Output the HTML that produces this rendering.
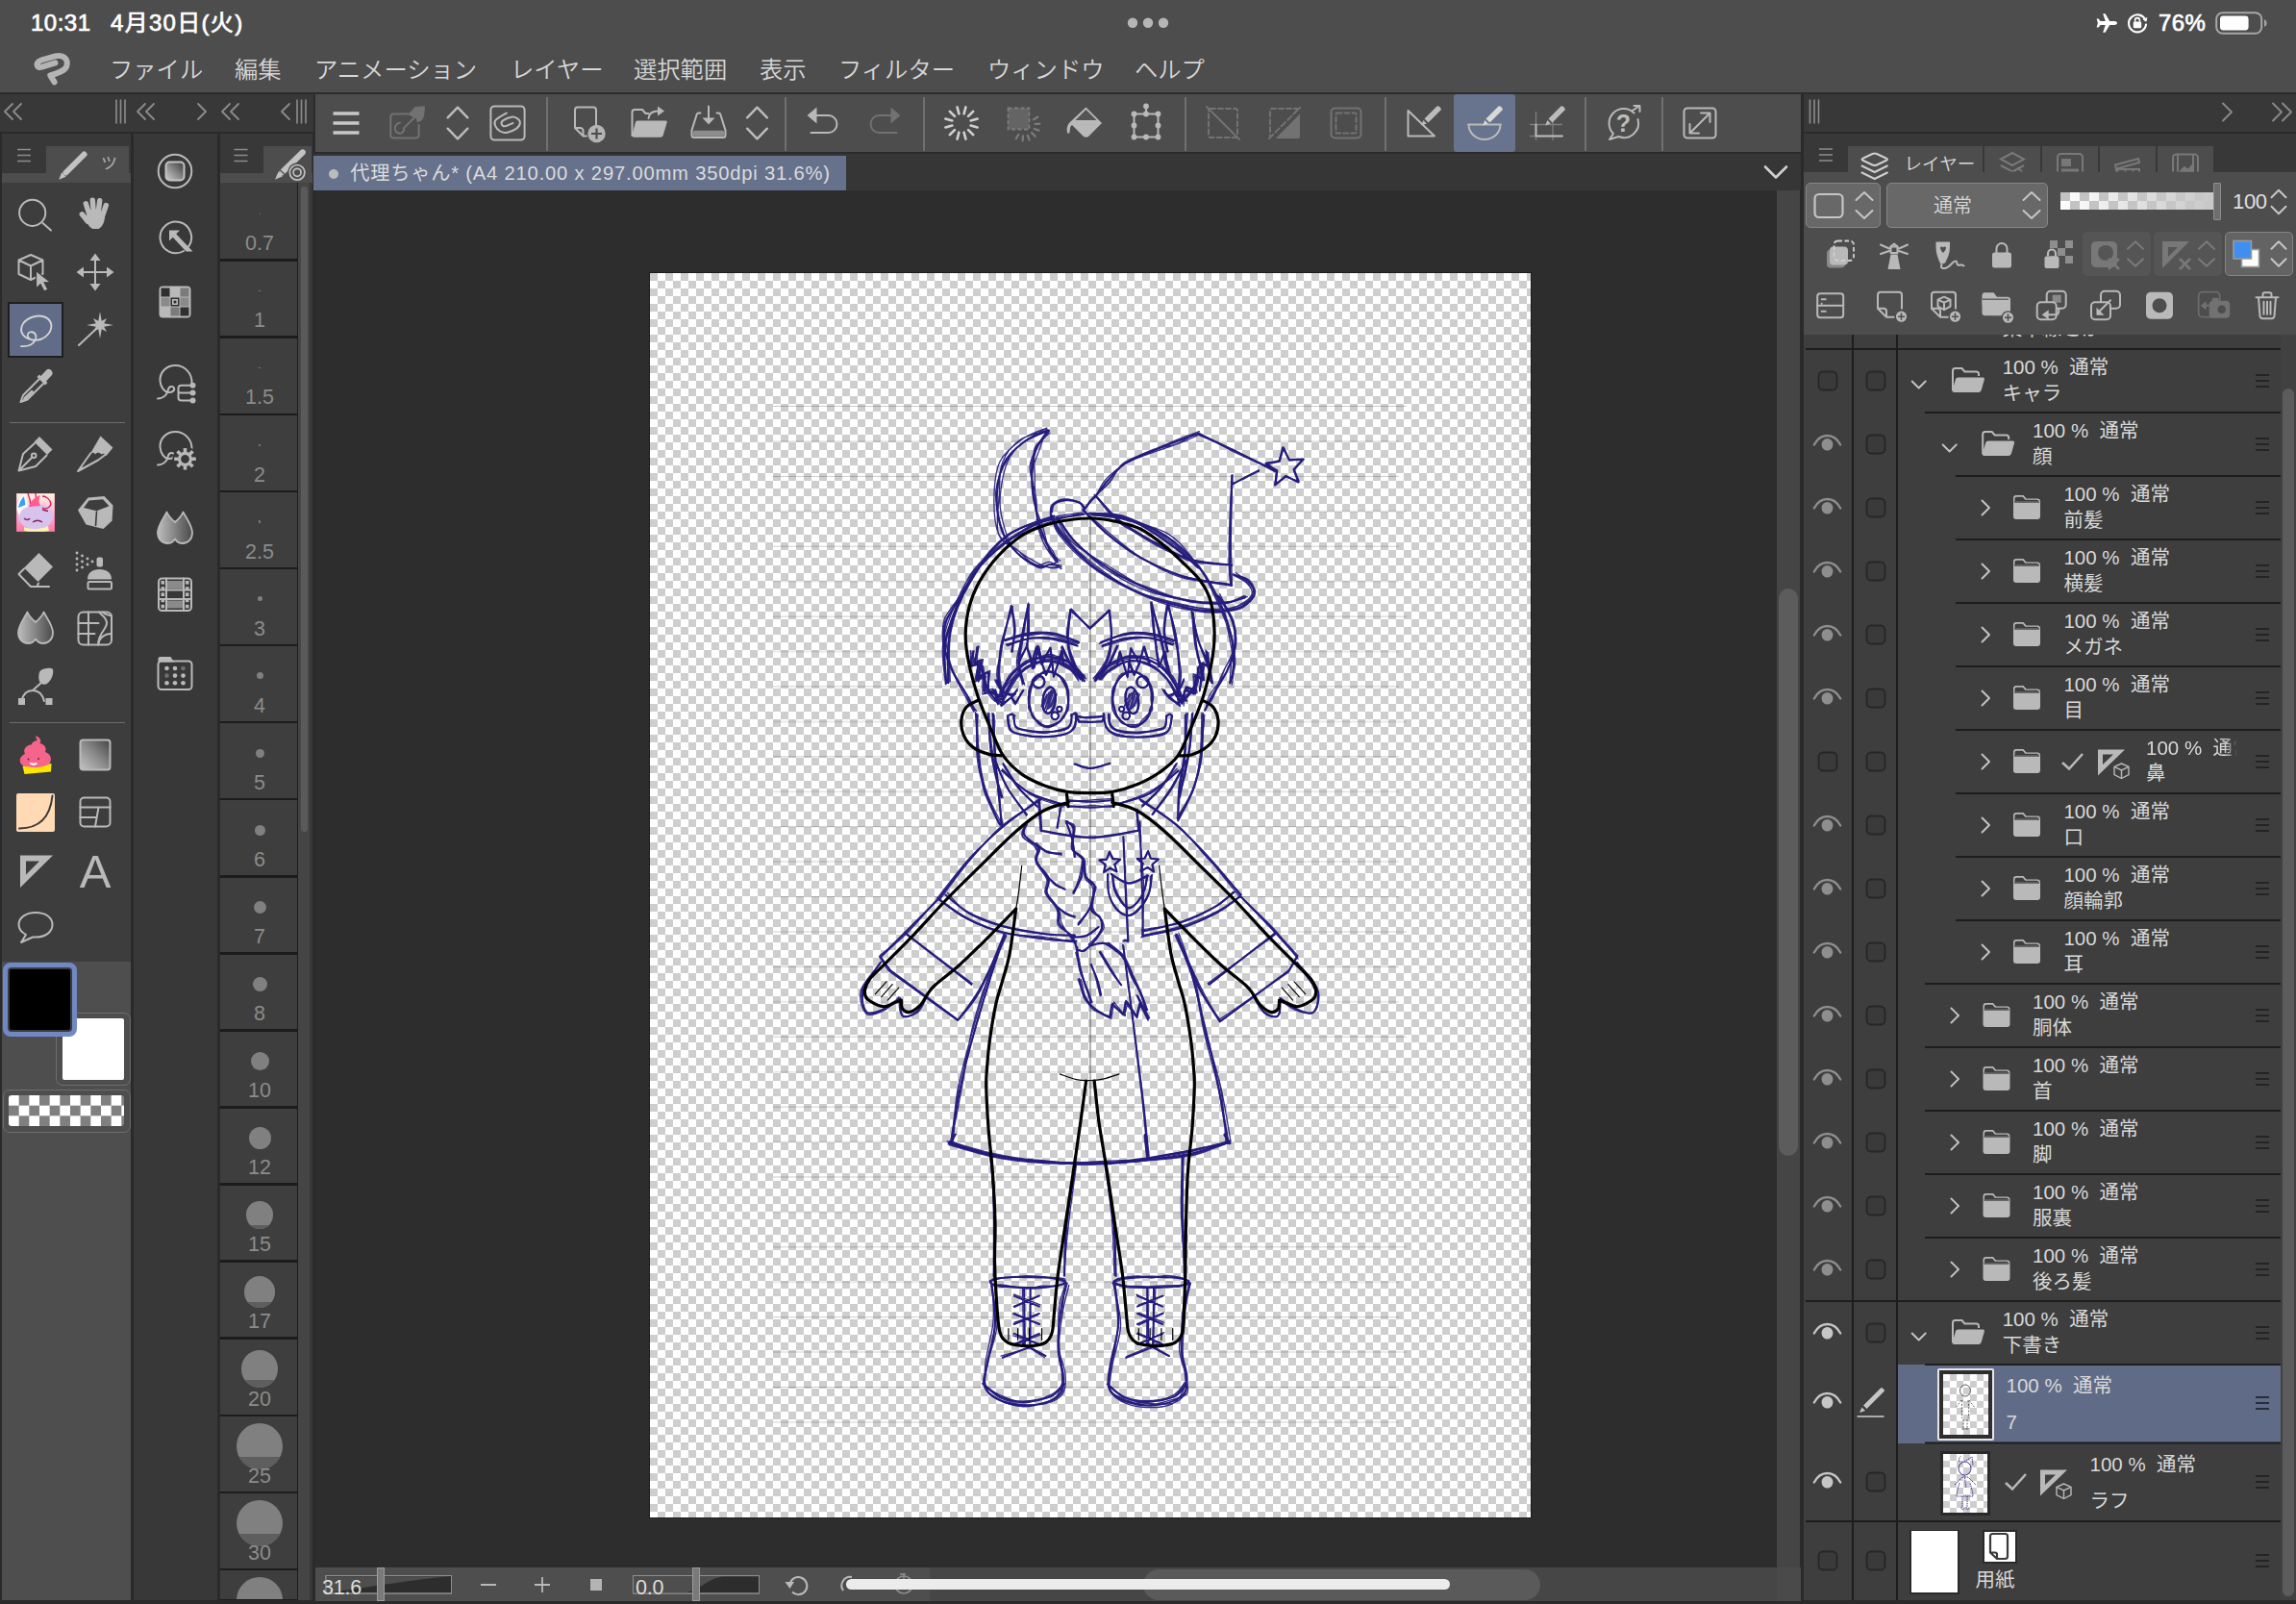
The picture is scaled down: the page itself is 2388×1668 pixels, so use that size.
<!DOCTYPE html>
<html lang="ja"><head><meta charset="utf-8"><title>CLIP STUDIO PAINT</title>
<style>
html,body{margin:0;padding:0;}
body{width:2388px;height:1668px;overflow:hidden;background:#383838;position:relative;
 font-family:"Liberation Sans","Noto Sans CJK JP",sans-serif;color:#d2d2d2;}
.a{position:absolute;}
.t{position:absolute;white-space:nowrap;line-height:1;}
svg{position:absolute;overflow:visible;}
.ic{fill:none;stroke:#b9b9b9;stroke-width:2;stroke-linecap:round;stroke-linejoin:round;}
.f{fill:#b9b9b9;stroke:none;}
.dim .ic, .ic.dim{stroke:#727272;}
.dim .f, .f.dim{fill:#727272;}

</style></head><body>
<div class="a" style="left:0px;top:0px;width:2388px;height:96px;background:#4d4d4d;"></div>
<div class="a" style="left:0px;top:96px;width:2388px;height:2px;background:#2c2c2c;"></div>
<div class="t" style="top:11.50px;font-size:24px;color:#fff;left:32px;font-weight:400;letter-spacing:0.5px;-webkit-text-stroke:0.7px #fff;">10:31</div>
<div class="t" style="top:11.50px;font-size:24px;color:#fff;left:115px;font-weight:400;letter-spacing:1.3px;-webkit-text-stroke:0.7px #fff;">4月30日(火)</div>
<svg style="left:1168px;top:14px;" width="60" height="20" viewBox="0 0 60 20"><circle cx="10" cy="9.7" r="5.2" fill="#b6b6b6"/><circle cx="26" cy="9.7" r="5.2" fill="#b6b6b6"/><circle cx="42" cy="9.7" r="5.2" fill="#b6b6b6"/></svg>
<svg style="left:2179px;top:12px;" width="24" height="24" viewBox="0 0 24 24"><path fill="#fff" d="M23 12c0-1.1-1.3-1.9-2.6-1.9h-5.2L10.6 2.2H8.2l2.6 7.9H5.6L3.6 7.6H1.6l1.3 4.4-1.3 4.4h2l2-2.5h5.2l-2.6 7.9h2.4l4.6-7.9h5.2c1.3 0 2.6-.8 2.6-1.9z"/></svg>
<svg style="left:2211px;top:12px;" width="24" height="24" viewBox="0 0 24 24"><path d="M20.5 9.2A9 9 0 1 0 21 13.5" fill="none" stroke="#fff" stroke-width="2.1" stroke-linecap="round"/><path d="M17.6 8.3l3.9 2.3.9-4.6z" fill="#fff"/><rect x="7.8" y="10.6" width="8.4" height="6.6" rx="1.2" fill="#fff"/><path d="M9.6 10.8V9a2.4 2.4 0 0 1 4.8 0v1.8" fill="none" stroke="#fff" stroke-width="1.6"/></svg>
<div class="t" style="top:11.50px;font-size:24px;color:#fff;left:2245px;font-weight:400;letter-spacing:0.4px;-webkit-text-stroke:0.7px #fff;">76%</div>
<svg style="left:2304px;top:12px;" width="58" height="24" viewBox="0 0 58 24"><rect x="1.2" y="1.2" width="47" height="21.6" rx="6.5" fill="none" stroke="#a6a6a6" stroke-width="2"/><rect x="5" y="4.6" width="29.6" height="14.8" rx="3.4" fill="#fff"/><path d="M51 8.2c1.6.5 2.6 2 2.6 3.8s-1 3.3-2.6 3.8z" fill="#a6a6a6"/></svg>
<svg style="left:34px;top:52px;" width="44" height="40" viewBox="0 0 44 40"><path d="M23.500 13.300L9.600 17.700C3.500 19.400 2.600 13.300 8.700 10.700L23.500 6.400C32.200 4.600 37.400 9.800 35.300 16.800 33.900 21.200 27 23.800 18.300 26.400L22.600 33.400" fill="none" stroke="#b4b4b4" stroke-width="6" stroke-linecap="round" stroke-linejoin="round"/></svg>
<div class="t" style="top:60.85px;font-size:24.3px;color:#d6d6d6;left:114px;font-weight:350;">ファイル</div>
<div class="t" style="top:60.85px;font-size:24.3px;color:#d6d6d6;left:244px;font-weight:350;">編集</div>
<div class="t" style="top:60.85px;font-size:24.3px;color:#d6d6d6;left:327px;font-weight:350;">アニメーション</div>
<div class="t" style="top:60.85px;font-size:24.3px;color:#d6d6d6;left:531px;font-weight:350;">レイヤー</div>
<div class="t" style="top:60.85px;font-size:24.3px;color:#d6d6d6;left:659px;font-weight:350;">選択範囲</div>
<div class="t" style="top:60.85px;font-size:24.3px;color:#d6d6d6;left:790px;font-weight:350;">表示</div>
<div class="t" style="top:60.85px;font-size:24.3px;color:#d6d6d6;left:872px;font-weight:350;">フィルター</div>
<div class="t" style="top:60.85px;font-size:24.3px;color:#d6d6d6;left:1027px;font-weight:350;">ウィンドウ</div>
<div class="t" style="top:60.85px;font-size:24.3px;color:#d6d6d6;left:1180px;font-weight:350;">ヘルプ</div>
<div class="a" style="left:326px;top:98px;width:1549px;height:62px;background:#2c2c2c;"></div>
<div class="a" style="left:328px;top:98px;width:1545px;height:60px;background:#4d4d4d;"></div>
<div class="a" style="left:1512px;top:98px;width:64px;height:60px;background:#68738d;border-radius:3px;"></div>
<div class="a" style="left:568px;top:101px;width:2px;height:56px;background:#707070;"></div>
<div class="a" style="left:816px;top:101px;width:2px;height:56px;background:#707070;"></div>
<div class="a" style="left:960px;top:101px;width:2px;height:56px;background:#707070;"></div>
<div class="a" style="left:1232px;top:101px;width:2px;height:56px;background:#707070;"></div>
<div class="a" style="left:1440px;top:101px;width:2px;height:56px;background:#707070;"></div>
<div class="a" style="left:1648px;top:101px;width:2px;height:56px;background:#707070;"></div>
<div class="a" style="left:1728px;top:101px;width:2px;height:56px;background:#707070;"></div>
<svg style="left:0px;top:0px;" width="2388" height="200" viewBox="0 0 2388 200"><g transform="translate(340,108)"><path d="M6.500 10h27M6.500 20h27M6.500 30h27" stroke="#c8c8c8" stroke-width="3.600" fill="none"/></g><g class="dim" transform="translate(401,108)"><path d="M27 10.400H8.300a3 3 0 0 0-3 3v19.200a3 3 0 0 0 3 3h23.300a3 3 0 0 0 3-3V22" class="ic" stroke-width="2.200"/><path d="M30.500 3.300L40.100 2.200c.8 0 1 1 .8 2.600l-.8 7.400c-.5 2.500-1.800 4.600-3.700 5.900-1.200.8-2.600.9-3.700.8l-1.100-4.500-2.500-.2-4.500-2.800c-.3-1 .2-2 1.200-3z" class="f"/><path d="M30.500 13.700L18.600 25.600" class="ic" stroke-width="3.800" stroke-linecap="butt"/><path d="M14.900 19.800c-3.500.3-5.600 3.600-5 6.900.7 3.400 4.700 5.100 7.500 3.200 1.300-.9 1.800-1.900 1.900-3.200" class="ic" stroke-width="2.200"/></g><g transform="translate(456,108)"><path d="M9.65 14.35 L20 3.6500000000000004 L30.35 14.35" fill="none" stroke="#bcbcbc" stroke-width="2.4" stroke-linecap="round" stroke-linejoin="round"/><path d="M9.65 25.65 L20 36.35 L30.35 25.65" fill="none" stroke="#bcbcbc" stroke-width="2.4" stroke-linecap="round" stroke-linejoin="round"/></g><g transform="translate(508,108)"><rect x="2.400" y="2.400" width="35.200" height="35.200" rx="4" class="ic" stroke-width="2.300"/><path d="M18.8 9.6C16.9 10.8 9.7 14.5 7.7 16.7C5.7 18.9 6.2 20.6 7.0 22.6C7.8 24.6 10.2 27.3 12.2 28.5C14.2 29.7 16.0 30.5 18.8 30.0C21.6 29.5 26.9 27.3 29.2 25.6C31.5 23.9 32.8 21.3 32.9 19.6C33.0 17.9 31.4 16.2 29.9 15.2C28.4 14.2 26.5 13.3 24.0 13.7C21.5 14.1 16.8 16.2 15.1 17.4C13.4 18.6 13.3 20.1 13.7 21.1C14.1 22.1 15.4 23.5 17.4 23.3C19.4 23.1 24.1 20.6 25.5 20.0" class="ic" stroke-width="3.300"/></g><g transform="translate(591,108)"><path d="M7 6.500a3 3 0 0 1 3-3h16a3 3 0 0 1 3 3V22M7 6.500V25l8.500 8.500H19M7 25h5.500a3 3 0 0 1 3 3v5.500" class="ic" stroke-width="2.200"/><circle cx="29.500" cy="31" r="9.200" fill="#b4b4b4"/><path d="M29.500 25.500v11M24 31h11" stroke="#4d4d4d" stroke-width="2.200" fill="none"/></g><g transform="translate(654,108)"><path d="M3.500 33V8.500a2.500 2.500 0 0 1 2.500-2.500h8l3.500 4h3" class="ic" stroke-width="2.200"/><path d="M9 17.500h29.500c1 0 1.500.8 1.200 1.700l-4 13.500c-.4 1.200-1.400 2-2.700 2H5.500c-1.500 0-2.400-1.200-2-2.600l3.300-12.300c.4-1.400 1-2.300 2.200-2.300z" class="f"/><path d="M20.500 15c.5-5 4-7.500 10-7.500" class="ic" stroke-width="2.400"/><path d="M30 2.500l7 5-7 5z" class="f"/></g><g transform="translate(717,108)"><path d="M11.500 9.500H9.800c-1 0-1.800.6-2.100 1.500L2.500 27.500v5a2.500 2.500 0 0 0 2.500 2.500h30a2.500 2.500 0 0 0 2.500-2.500v-5L32.300 11c-.3-.9-1.100-1.500-2.100-1.500h-1.700" class="ic" stroke-width="2.200"/><rect x="4" y="27.800" width="32" height="6" rx="1.500" fill="#8d8d8d"/><path d="M20 2.500v15" class="ic" stroke-width="2.400"/><path d="M13.500 14.500h13L20 21.500z" class="f"/></g><g transform="translate(767.5,108)"><path d="M9.65 14.35 L20 3.6500000000000004 L30.35 14.35" fill="none" stroke="#bcbcbc" stroke-width="2.4" stroke-linecap="round" stroke-linejoin="round"/><path d="M9.65 25.65 L20 36.35 L30.35 25.65" fill="none" stroke="#bcbcbc" stroke-width="2.4" stroke-linecap="round" stroke-linejoin="round"/></g><g transform="translate(836,108)"><path d="M10 12h15.500a9 9 0 0 1 0 18H7.500" class="ic" stroke-width="2.400"/><path d="M13.500 3.500v17L3.500 12z" class="f"/></g><g class="dim" transform="translate(900,108)"><path d="M30 12H14.500a9 9 0 0 0 0 18H32.500" class="ic" stroke-width="2.400"/><path d="M26.500 3.500v17l10-8.500z" class="f"/></g><g transform="translate(980,108)"><path d="M29.66 22.59L36.61 24.45M27.07 27.07L32.16 32.16M22.59 29.66L24.45 36.61M17.41 29.66L15.55 36.61M12.93 27.07L7.84 32.16M10.34 22.59L3.39 24.45M10.34 17.41L3.39 15.55M12.93 12.93L7.84 7.84M17.41 10.34L15.55 3.39M22.59 10.34L24.45 3.39M27.07 12.93L32.16 7.84M29.66 17.41L36.61 15.55" stroke="#d0d0d0" stroke-width="2.600" stroke-linecap="round" fill="none"/></g><g class="dim" transform="translate(1044,108)"><rect x="4.500" y="4.500" width="22" height="22" fill="#646464" stroke="#7c7c7c" stroke-width="1.800" stroke-dasharray="4 2.500"/><path d="M30.96 16.25L35.29 13.75M32.46 21.00L37.44 20.56M31.81 25.93L36.50 27.64M29.13 30.13L32.67 33.67M24.93 32.81L26.64 37.50M20.00 33.46L19.56 38.44M15.25 31.96L12.75 36.29" stroke="#7c7c7c" stroke-width="2.200" stroke-linecap="round" fill="none"/></g><g transform="translate(1108,108)"><path d="M20 3.500L36.500 20 23 33.500c-1.800 1.800-4.200 1.800-6 0L5.500 22C3 23.500 3.500 27 3 29.500c-.4 1.700-2 1.800-2.500 0C-.5 25 1 20.500 5 17.500z" class="f" transform="translate(1.500,0)"/><path d="M10.500 17L21.500 6 32.500 17z" fill="#555"/></g><g transform="translate(1172,108)"><path d="M7.500 10.500h25v24h-25zM20 10.500V2.500" class="ic" stroke-width="2.200"/><circle cx="7.5" cy="10.5" r="2.900" class="f"/><circle cx="20" cy="10.5" r="2.900" class="f"/><circle cx="32.5" cy="10.5" r="2.900" class="f"/><circle cx="7.5" cy="22.5" r="2.900" class="f"/><circle cx="32.5" cy="22.5" r="2.900" class="f"/><circle cx="7.5" cy="34.5" r="2.900" class="f"/><circle cx="20" cy="34.5" r="2.900" class="f"/><circle cx="32.5" cy="34.5" r="2.900" class="f"/><circle cx="20" cy="2.5" r="2.900" class="f"/></g><g class="dim" transform="translate(1252,108)"><rect x="5" y="5" width="30" height="30" rx="2" class="ic" stroke-width="2" stroke-dasharray="5 3"/><path d="M3 3l34 34" class="ic" stroke-width="2"/></g><g class="dim" transform="translate(1316,108)"><path d="M35 5H7a2 2 0 0 0-2 2v28" class="ic" stroke-width="2" stroke-dasharray="5 3"/><path d="M4 36L36 4" class="ic" stroke-width="2" stroke-dasharray="6 3"/><path d="M36 10.500v23a2.500 2.500 0 0 1-2.500 2.500h-23z" class="f"/></g><g class="dim" transform="translate(1380,108)"><rect x="4.500" y="4.500" width="31" height="31" rx="4" class="ic" stroke-width="2"/><rect x="9.500" y="9.500" width="21" height="21" rx="1" class="ic" stroke-width="2" stroke-dasharray="5 3"/></g><g transform="translate(1460,108)"><path d="M4.500 7v26.500h26M4.500 7l27.500 26.500" class="ic" stroke-width="2" stroke-linecap="butt"/><g transform="translate(0,0)"><path d="M21.500 15.500l13-13c1.500-1.500 5.500 2.500 4 4l-13 13z" fill="#bcbcbc"/><path d="M20.300 17l3.500 3.500-5.500 2z" fill="#bcbcbc"/></g></g><g transform="translate(1524,108)"><path d="M3 21.500h34M3.500 21.500a16.500 15.500 0 0 0 33 0" class="ic" stroke="#d4d4d4" stroke-width="2" stroke-linecap="butt"/><g transform="translate(0,0)"><path d="M21.500 15.500l13-13c1.500-1.500 5.500 2.500 4 4l-13 13z" fill="#d8d8d8"/><path d="M20.300 17l3.500 3.500-5.500 2z" fill="#d8d8d8"/></g></g><g transform="translate(1589,108)"><path d="M2 21.500h34M2 33.500h34M8.500 8v30M26 15v23" stroke="#7e7e7e" stroke-width="1.300" fill="none"/><path d="M8.500 21.500v12H36" class="ic" stroke-width="2.200" stroke-linecap="butt"/><g transform="translate(0,0)"><path d="M21.500 15.500l13-13c1.500-1.500 5.500 2.500 4 4l-13 13z" fill="#bcbcbc"/><path d="M20.300 17l3.500 3.500-5.500 2z" fill="#bcbcbc"/></g></g><g transform="translate(1669,108)"><path d="M30.500 9.500A15 15 0 1 0 9 31l-4 6 9.500-3A15 15 0 0 0 34.500 16" class="ic" stroke-width="2.400"/><path d="M28 7.500l8.500-5.500M30.500 2h6v6" class="ic" stroke-width="2" stroke="#9a9a9a"/><text x="19.500" y="29" text-anchor="middle" font-family="Liberation Sans,sans-serif" font-weight="700" font-size="25" fill="#bcbcbc">?</text></g><g transform="translate(1748,108)"><rect x="3.500" y="4.500" width="33" height="31" rx="3.500" class="ic" stroke-width="2.200"/><path d="M9.500 30.500l21-21M9.500 21v9.500H19M21 9.500h9.500V19" class="ic" stroke-width="2.200"/></g></svg>
<div class="a" style="left:326px;top:160px;width:1549px;height:38px;background:#363636;"></div>
<div class="a" style="left:326px;top:162px;width:554px;height:36px;background:#66718b;"></div>
<svg style="left:340px;top:173.6px;" width="14" height="14" viewBox="0 0 14 14"><circle cx="7" cy="7" r="5" fill="#bcbcbc"/></svg>
<div class="t" style="top:169.90px;font-size:20.2px;color:#dcdcdc;left:364.2px;letter-spacing:0.81px;">代理ちゃん* (A4 210.00 x 297.00mm 350dpi 31.6%)</div>
<svg style="left:1834px;top:170px;" width="26" height="18" viewBox="0 0 26 18"><path d="M2 3.500L13 14.500L24 3.500" fill="none" stroke="#d0d0d0" stroke-width="2.6" stroke-linecap="round" stroke-linejoin="round"/></svg><svg style="left:0px;top:0px;" width="330" height="140" viewBox="0 0 330 140"><path d="M13 108.0L5 116L13 124.0M22 108.0L14 116L22 124.0" fill="none" stroke="#8c8c8c" stroke-width="1.8" stroke-linecap="round" stroke-linejoin="round"/><path d="M121.0 103.5v25M125.5 103.5v25M130.0 103.5v25" fill="none" stroke="#8c8c8c" stroke-width="1.6"/><path d="M151 108.0L143 116L151 124.0M160 108.0L152 116L160 124.0" fill="none" stroke="#8c8c8c" stroke-width="1.8" stroke-linecap="round" stroke-linejoin="round"/><path d="M206 108.0L214 116L206 124.0" fill="none" stroke="#8c8c8c" stroke-width="1.8" stroke-linecap="round" stroke-linejoin="round"/><path d="M239 108.0L231 116L239 124.0M248 108.0L240 116L248 124.0" fill="none" stroke="#8c8c8c" stroke-width="1.8" stroke-linecap="round" stroke-linejoin="round"/><path d="M301 108.0L293 116L301 124.0" fill="none" stroke="#8c8c8c" stroke-width="1.8" stroke-linecap="round" stroke-linejoin="round"/><path d="M309.0 103.5v25M313.5 103.5v25M318.0 103.5v25" fill="none" stroke="#8c8c8c" stroke-width="1.6"/></svg>
<div class="a" style="left:0px;top:137px;width:138px;height:1531px;background:#2a2a2a;"></div>
<div class="a" style="left:2px;top:139px;width:134px;height:1525px;background:#383838;"></div>
<div class="a" style="left:48px;top:152px;width:86px;height:30px;background:#4d4d4d;"></div>
<div class="a" style="left:2px;top:180px;width:134px;height:10px;background:#4d4d4d;"></div>
<div class="a" style="left:2px;top:190px;width:134px;height:810px;background:#3d3d3d;"></div>
<div class="a" style="left:2px;top:1000px;width:134px;height:664px;background:#4e4e4e;"></div>
<svg style="left:0px;top:140px;" width="140" height="50" viewBox="0 0 140 50"><path d="M18 15.5h14M18 21.5h14M18 27.5h14" fill="none" stroke="#8c8c8c" stroke-width="1.7"/><path d="M68.500 39.500L87.500 20.500" stroke="#c2c2c2" stroke-width="6" stroke-linecap="round" fill="none"/><path d="M64.200 39.300l4.500 4.500-7.500 3z" fill="#c2c2c2"/></svg>
<div class="t" style="top:161.50px;font-size:17px;color:#b4b4b4;left:105px;">ツ</div>
<div class="a" style="left:10px;top:438.5px;width:120px;height:1.6px;background:#6c6c6c;"></div>
<div class="a" style="left:10px;top:750.5px;width:120px;height:1.6px;background:#6c6c6c;"></div>
<div class="a" style="left:8px;top:314px;width:58px;height:58px;background:#1f1f1f;"></div>
<div class="a" style="left:10px;top:316px;width:54px;height:54px;background:#616d88;"></div>
<svg style="left:0px;top:0px;" width="140" height="1000" viewBox="0 0 140 1000"><g transform="translate(15,201)"><circle cx="18.700" cy="20.300" r="13.600" class="ic" stroke-width="2.100"/><path d="M29.500 31l8.500 7.500" class="ic" stroke-width="4.200"/></g><g transform="translate(77,200)"><g stroke="#b9b9b9" stroke-width="5.400" stroke-linecap="round" fill="none"><path d="M16.500 25L12.300 11.800M20.500 23L19.300 8.200M25 23l1.700-14.300M29 26l4.300-12.500M14.500 30.500L8.300 22.800"/></g><path d="M11.500 24.500c5-3.500 15-3.500 20.500 0 0 6-2.500 11.500-6.500 13.500h-6c-4-1.500-6.500-6.500-8-13.500z" class="f"/></g><g transform="translate(15,261)"><path d="M17 4l12.500 5.500v14.500L17 30 4.500 24V9.500zM4.500 9.500L17 15.500l12.500-6M17 15.500V30" class="ic" stroke-width="1.800"/><path d="M22.500 20.500V39l4.600-4.200 3.800 7.200 4-2-3.800-7.200 6.400-.3z" fill="#b9b9b9" stroke="#3d3d3d" stroke-width="1.200"/></g><g transform="translate(77,261)"><path d="M22 8v28M8 22h28" class="ic" stroke-width="2.200"/><path d="M22 2.500l5.500 7.500h-11zM22 41.500l5.500-7.500h-11zM2.500 22l7.500-5.500v11zM41.500 22l-7.500-5.500v11z" class="f"/></g><g transform="translate(15,321)"><path d="M19 32.500C9.500 31 5 24.500 8 17.500 11 10.500 22 5.500 31 8.500c8 2.700 9.500 11 4.500 17.500-4 5.200-11 8-17.500 6.300-4-1-5.500-4.500-3.500-6.800 2-2.300 6-1.500 7.500 1.500 1.500 3-.5 8-5 10.500-3 1.600-6.500 1.800-10 1.600" fill="none" stroke="#d3d3d3" stroke-width="1.900" stroke-linecap="round"/></g><g transform="translate(77,321)"><path d="M27.00 3.00L28.76 12.75L34.07 9.93L31.25 15.24L41.00 17.00L31.25 18.76L34.07 24.07L28.76 21.25L27.00 31.00L25.24 21.25L19.93 24.07L22.75 18.76L13.00 17.00L22.75 15.24L19.93 9.93L25.24 12.75z" class="f"/><path d="M22.500 21.500L5 38" class="ic" stroke-width="2.200"/></g><g transform="translate(15,381)"><path d="M33.500 3.500c3-2.500 8 2.500 5.500 5.500l-6 6.500 1.500 1.500-2.500 2.500-8.500-8.500 2.500-2.500 1.500 1.500z" class="f"/><path d="M25.500 13.500L9 30l-2.500 7 7-2.500L30 18" class="ic" stroke-width="1.900"/><path d="M18 24.500l-8 7.500-2 4.500 4.500-2 8-8z" class="f"/></g><g transform="translate(15,450)"><path d="M26 4l13.500 13.500-5.500 5.500L20.500 9.500z" class="f"/><path d="M21 11L9 22 4.500 39.500 22 35l11.500-11.500M5.500 38.500l13-13" class="ic" stroke-width="2"/><circle cx="20.200" cy="23.800" r="2.300" class="ic" stroke-width="1.600"/></g><g transform="translate(77,450)"><path d="M27.500 3.500l13 12-7 8.500c-1-2.500-3.500-3-5-1.500-2-2.500-5-2.500-6.500 0-1-2-3-2.500-5-1z" class="f"/><path d="M17.500 21L4 40l21-11.500 8-6" class="ic" stroke-width="2"/><path d="M4 40l5.500-3-2-2.500z" class="f"/></g><g transform="translate(17,513)"><defs><linearGradient id="avg" x1="0" y1="0" x2="0" y2="1"><stop offset="0" stop-color="#fff4e0"/><stop offset=".5" stop-color="#ffb6cf"/><stop offset="1" stop-color="#ff77a8"/></linearGradient><clipPath id="avc"><rect width="40" height="40"/></clipPath></defs><g clip-path="url(#avc)"><rect width="40" height="40" fill="url(#avg)"/><path d="M2 22c0-7 8-11 17-11s19 3 19 12c0 9-8 15-18 15S2 31 2 22z" fill="#d7c4ee"/><path d="M0 16c1-8 5-13 9-16l3 14c-4 1-8 4-9 9z" fill="#fff"/><path d="M2 15c1-5 3-9 6-12l1.500 9z" fill="#3c9dff"/><path d="M12 0c2 5 3 9 3 14M20 0c0 4 1 8 3 12M27 3c4 0 8 3 9 8-1 4-5 6-9 4" fill="none" stroke="#d81b60" stroke-width="1.300"/><path d="M13 14c2-6 6-10 12-12-2 4-2 8 0 11z" fill="#ff5c93"/><path d="M27 17l6 1.500M8 26c2 2 5 2 6 0M17 30c3-2 7-2 10 0" fill="none" stroke="#8a1e4a" stroke-width="1.400"/><path d="M8 35c7 3 17 3 25-1l1 5c-8 2-18 2-26 0z" fill="#fff3b0"/><rect width="40" height="40" fill="none" stroke="#c2185b" stroke-width=".6" opacity=".5"/></g></g><g transform="translate(77,511)"><path d="M14.500 6.500l17-1.500 9 9.500-1 16-9 8.500-18-4.500L4 19.500z" class="f"/><path d="M15.500 9.500l14.500-1.300 6.500 7-13 5-13.500-3.200z" fill="#3d3d3d"/><path d="M23.500 20.500l-1 15.500" stroke="#3d3d3d" stroke-width="1.600" fill="none"/></g><g transform="translate(15,571)"><path d="M25.500 4l14.500 14.500L24.500 34 10 19.500z" class="f"/><path d="M10 20.500L4.500 26l12.500 13h6.500l1.500-3.500M17 39h19" class="ic" stroke-width="2"/></g><g transform="translate(77,571)"><circle cx="3" cy="4" r="1.450" class="f"/><circle cx="3" cy="10" r="1.450" class="f"/><circle cx="3" cy="16" r="1.450" class="f"/><circle cx="3" cy="22" r="1.450" class="f"/><circle cx="8.5" cy="7" r="1.450" class="f"/><circle cx="8.5" cy="13" r="1.450" class="f"/><circle cx="8.5" cy="19" r="1.450" class="f"/><circle cx="14" cy="10" r="1.450" class="f"/><circle cx="14" cy="16" r="1.450" class="f"/><circle cx="19" cy="13" r="1.450" class="f"/><rect x="23.500" y="8.500" width="6.500" height="10" rx="2" class="f"/><path d="M14 31.500c0-7 5-10.500 12.500-10.500S39 24.500 39 31.500z" class="f"/><rect x="14.500" y="34" width="24.500" height="7.500" rx="1.500" class="ic" stroke-width="2"/></g><g transform="translate(15,631)"><defs><linearGradient id="bl1" x1="0" y1="0" x2="1" y2="0"><stop offset="0" stop-color="#bdbdbd"/><stop offset="1" stop-color="#4a4a4a"/></linearGradient></defs><path d="M13.500 5.500c2 5 8.500 10.500 8.500 10.500S28.500 10.500 30.500 5.500c3.500 7 9.500 14 9.500 21.500 0 6.500-4.500 11-10 11-3.500 0-6.500-2-8-4.500-1.500 2.500-4.500 4.500-8 4.500-5.500 0-10-4.500-10-11 0-7.500 6-14.500 9.500-21.500z" fill="url(#bl1)" stroke="#b9b9b9" stroke-width="1.800" stroke-linejoin="round"/></g><g transform="translate(77,631)"><rect x="4.500" y="5.500" width="34.500" height="34" rx="5" class="ic" stroke-width="2"/><path d="M4.500 17h21M4.500 28h17M15 5.500v34M26 5.500c2 3 8 5 8 11.500s-9 10.500-9 22.500M25.500 39.500c0-7 6-11.500 13.500-11.500M30 5.500c3 3 6.500 3.500 9 3.500" class="ic" stroke-width="1.900"/></g><g transform="translate(15,691)"><path d="M27 6.500c4-3.500 11.500-3.500 13 -1.500 1 4-1 11-5.500 14.500-2.500 2-5.500 1.500-7.500-.5s-2.500-9.500 0-12.500z" class="f"/><path d="M29.500 17.500L19 27M7.500 38c1.500-7.500 6-11 11.500-11s10 3.500 12 11" class="ic" stroke-width="2.200"/><rect x="4" y="35" width="7" height="7" class="f"/><rect x="32.500" y="35" width="7" height="7" class="f"/></g><g transform="translate(15,763)"><path d="M8.500 33.500l2 8.500 27.500-2.500.5-8.500z" fill="#ffe600"/><path d="M22 2c4.500 1.500 6.500 5 4.500 8 5 1 7.500 5 5.500 9 5 1.500 7.500 6.500 5 11-3 5.500-24 7-29.500 2-3.500-3.500-1.500-9 3.500-11-2.500-4.500 1-9 6.500-9.500 1-3 4-4.500 6.500-4.500-1.500-1.500-1.500-3.500-2-5z" fill="#f4648b"/><path d="M16 30.500c2.500 2 5.500 2 7.500 0" stroke="#fff" stroke-width="1.500" fill="#fff"/><circle cx="14.500" cy="26.500" r=".9" fill="#5a2030"/><circle cx="25" cy="26" r=".9" fill="#5a2030"/></g><g transform="translate(77,763)"><defs><linearGradient id="gsq" x1="0" y1="1" x2="1" y2="0"><stop offset="0" stop-color="#c4c4c4"/><stop offset=".5" stop-color="#8a8a8a"/><stop offset="1" stop-color="#444"/></linearGradient></defs><rect x="6.500" y="6.500" width="31" height="31" rx="3" fill="url(#gsq)" stroke="#b9b9b9" stroke-width="2"/></g><g transform="translate(15,823)"><rect x="2" y="2" width="40" height="40" rx="2" fill="#ffdab5"/><path d="M5 38.500c19 0 32-10 34.500-34" fill="none" stroke="#3a3a3a" stroke-width="2" stroke-linecap="round"/></g><g transform="translate(77,823)"><rect x="6.500" y="6.500" width="31" height="30" rx="4" class="ic" stroke-width="2"/><path d="M6.500 16.500h31M6.500 27h16M25.500 16.500l-3.500 20" class="ic" stroke-width="2"/></g><g transform="translate(15,883)"><path d="M6 6.500h34L6 40zM12 12.500v14l14-14z" class="f" fill-rule="evenodd"/></g><g transform="translate(77,883)"><text x="22" y="39.500" text-anchor="middle" font-family="Liberation Sans,sans-serif" font-size="49" fill="#b9b9b9">A</text></g><g transform="translate(15,942)"><path d="M22 7C11.500 7 4.500 12.500 4.500 19.500c0 4.500 3 8 7.500 10.500L7 38l12-5.500c1 .1 2 .1 3 .1 10.500 0 17.500-5.500 17.500-13S32.500 7 22 7z" class="ic" stroke-width="2"/></g></svg>
<div class="a" style="left:58px;top:1052.5px;width:77.5px;height:76.5px;border:1.600px solid #6e6e6e;border-radius:7px;box-sizing:border-box;"></div>
<div class="a" style="left:65px;top:1059px;width:64px;height:64px;background:#fff;border-radius:2px;"></div>
<div class="a" style="left:2.5px;top:1000.5px;width:77px;height:77.5px;background:#7088c4;border-radius:8px;"></div>
<div class="a" style="left:7.5px;top:1005.5px;width:67px;height:67.5px;background:#3c3c3c;border-radius:4px;"></div>
<div class="a" style="left:9.5px;top:1007.5px;width:63px;height:63.5px;background:#000;border-radius:2px;"></div>
<div class="a" style="left:2.5px;top:1133px;width:133px;height:44.5px;border:1.600px solid #6e6e6e;border-radius:7px;box-sizing:border-box;"></div>
<div class="a" style="left:9px;top:1139px;width:120px;height:32px;background:#fff;border-radius:3px;background-image:conic-gradient(#808080 25%,#fff 0 50%,#808080 0 75%,#fff 0);background-size:21.330px 21.330px;background-position:0 0;"></div>
<div class="a" style="left:138px;top:137px;width:90px;height:1531px;background:#2a2a2a;"></div>
<div class="a" style="left:139px;top:139px;width:87px;height:1525px;background:#383838;"></div>
<svg style="left:0px;top:0px;" width="240" height="760" viewBox="0 0 240 760"><g transform="translate(160,156)"><defs><linearGradient id="sg1" x1="0" y1="1" x2="1" y2="0"><stop offset="0" stop-color="#cfcfcf"/><stop offset="1" stop-color="#3a3a3a"/></linearGradient></defs><circle cx="22" cy="22" r="17.300" class="ic" stroke-width="2.600"/><rect x="12.500" y="12.500" width="19" height="19" rx="4" fill="url(#sg1)" stroke="#c4c4c4" stroke-width="2"/></g><g transform="translate(160,224)"><path d="M36 32.500A16.300 16.300 0 1 0 31 37" class="ic" stroke-width="3.100"/><path d="M16 15.500h11l-3.800 3.800L40.500 37.500h-7L19.800 22.800 16 26.500z" class="f"/></g><g transform="translate(160,292)"><rect x="5.500" y="5.500" width="33" height="33" rx="4" class="f"/><rect x="7.5" y="7.5" width="9" height="9" fill="#2f2f2f"/><rect x="17.5" y="7.5" width="9" height="9" fill="#b9b9b9"/><rect x="27.5" y="7.5" width="9" height="9" fill="#7b7b7b"/><rect x="7.5" y="17.5" width="9" height="9" fill="#8a8a8a"/><rect x="17.5" y="17.5" width="9" height="9" fill="#2f2f2f"/><rect x="19.8" y="19.8" width="4.400" height="4.400" fill="#2f2f2f" stroke="#cfcfcf" stroke-width="1.400"/><rect x="27.5" y="17.5" width="9" height="9" fill="#8a8a8a"/><rect x="7.5" y="27.5" width="9" height="9" fill="#b9b9b9"/><rect x="17.5" y="27.5" width="9" height="9" fill="#7b7b7b"/><rect x="27.5" y="27.5" width="9" height="9" fill="#2f2f2f"/></g><g transform="translate(160,376)"><path d="M39.500 22.500C40 12 32 4 22.500 4 12 4 6 12 6.500 20 7 27 11 31.500 15 32c4 .5 7-2 6-4.500s-5.500-2-6 1.500C14.500 34 10 38.500 4 38.500" class="ic" stroke-width="2.100"/><path d="M40.500 24.700H28.500a3 3 0 0 0-3 3V37.600a3 3 0 0 0 3 3H40.500M25.500 32.600H40.500" class="ic" stroke-width="2"/><circle cx="40.500" cy="24.700" r="3" class="f"/><circle cx="40.500" cy="32.600" r="3" class="f"/><circle cx="40.500" cy="40.600" r="3" class="f"/></g><g transform="translate(160,445)"><path d="M39.500 22.500C40 12 32 4 22.500 4 12 4 6 12 6.500 20 7 27 11 31.500 15 32c4 .5 7-2 6-4.500s-5.500-2-6 1.500C14.500 34 10 38.500 4 38.500" class="ic" stroke-width="2.100"/><circle cx="32.500" cy="32.300" r="13" fill="#383838"/><circle cx="32.500" cy="32.300" r="6" fill="#383838" stroke="#b9b9b9" stroke-width="3.200"/><path d="M39.50 32.30L43.80 32.30M37.45 37.25L40.49 40.29M32.50 39.30L32.50 43.60M27.55 37.25L24.51 40.29M25.50 32.30L21.20 32.30M27.55 27.35L24.51 24.31M32.50 25.30L32.50 21.00M37.45 27.35L40.49 24.31" stroke="#b9b9b9" stroke-width="3.600" fill="none"/></g><g transform="translate(160,527)"><defs><linearGradient id="bl2" x1="0" y1="0" x2="1" y2="0"><stop offset="0" stop-color="#bdbdbd"/><stop offset="1" stop-color="#4a4a4a"/></linearGradient></defs><path d="M13.500 5.500c2 5 8.500 10.500 8.500 10.500S28.500 10.500 30.500 5.500c3.500 7 9.500 14 9.500 21.500 0 6.500-4.500 11-10 11-3.500 0-6.500-2-8-4.500-1.500 2.500-4.500 4.500-8 4.500-5.500 0-10-4.500-10-11 0-7.500 6-14.500 9.500-21.500z" fill="url(#bl2)" stroke="#b9b9b9" stroke-width="1.800" stroke-linejoin="round"/></g><g transform="translate(160,596)"><rect x="5" y="5.500" width="34" height="33.500" rx="3.500" class="ic" stroke-width="2"/><rect x="13.500" y="8" width="17" height="8" fill="#8a8a8a"/><rect x="13.500" y="28.500" width="17" height="8" fill="#8a8a8a"/><path d="M13 5.500v33.500M31 5.500v33.500M5 17.500h34M5 27h34" class="ic" stroke-width="1.500"/><rect x="7.500" y="8.0" width="3.600" height="3.600" class="f"/><rect x="32.900" y="8.0" width="3.600" height="3.600" class="f"/><rect x="7.500" y="14.2" width="3.600" height="3.600" class="f"/><rect x="32.900" y="14.2" width="3.600" height="3.600" class="f"/><rect x="7.500" y="20.4" width="3.600" height="3.600" class="f"/><rect x="32.900" y="20.4" width="3.600" height="3.600" class="f"/><rect x="7.500" y="26.6" width="3.600" height="3.600" class="f"/><rect x="32.900" y="26.6" width="3.600" height="3.600" class="f"/><rect x="7.500" y="32.8" width="3.600" height="3.600" class="f"/><rect x="32.900" y="32.8" width="3.600" height="3.600" class="f"/></g><g transform="translate(160,679)"><path d="M4.500 9.500V6a2 2 0 0 1 2-2h11l3.500 5.500z" class="f"/><rect x="4.500" y="8.500" width="35" height="29.500" rx="3.500" class="ic" stroke-width="2"/><circle cx="13.5" cy="16.0" r="2.300" fill="#b9b9b9"/><circle cx="22.0" cy="16.0" r="2.300" fill="#b9b9b9"/><circle cx="30.5" cy="16.0" r="2.300" fill="#6e6e6e"/><circle cx="13.5" cy="23.6" r="2.300" fill="#6e6e6e"/><circle cx="22.0" cy="23.6" r="2.300" fill="#b9b9b9"/><circle cx="30.5" cy="23.6" r="2.300" fill="#b9b9b9"/><circle cx="13.5" cy="31.2" r="2.300" fill="#b9b9b9"/><circle cx="22.0" cy="31.2" r="2.300" fill="#b9b9b9"/><circle cx="30.5" cy="31.2" r="2.300" fill="#b9b9b9"/></g></svg>
<div class="a" style="left:227px;top:137px;width:99px;height:1531px;background:#2a2a2a;"></div>
<div class="a" style="left:229px;top:139px;width:96px;height:1525px;background:#383838;"></div>
<div class="a" style="left:274px;top:152px;width:50px;height:30px;background:#4d4d4d;"></div>
<div class="a" style="left:229px;top:180px;width:96px;height:10px;background:#4d4d4d;"></div>
<div class="a" style="left:229px;top:190px;width:81px;height:1474px;background:#1c1c1c;"></div>
<svg style="left:229px;top:140px;" width="100" height="50" viewBox="0 0 100 50"><path d="M14.5 15.5h14M14.5 21.5h14M14.5 27.5h14" fill="none" stroke="#8c8c8c" stroke-width="1.7"/><path d="M64.400 39.300L85.700 18.500" stroke="#c2c2c2" stroke-width="6.200" stroke-linecap="round" fill="none"/><path d="M60.500 38.800l4.500 4.500-8 3.500z" fill="#c2c2c2"/><path d="M62 36.500l5 5" stroke="#4d4d4d" stroke-width="1.200"/><circle cx="80.100" cy="39.300" r="10" fill="#4d4d4d"/><circle cx="80.100" cy="39.300" r="7.800" fill="none" stroke="#c2c2c2" stroke-width="1.700"/><circle cx="80.100" cy="39.300" r="4" fill="none" stroke="#c2c2c2" stroke-width="1.700"/></svg>
<div class="a" style="left:229px;top:190.30px;width:80px;height:79.08px;background:#3e3e3e;overflow:hidden;"><div class="a" style="left:0;top:1.500px;width:80px;height:90px;"><div class="a" style="left:40.50px;top:30.20px;width:1px;height:1px;border-radius:50%;background:#808080;"></div><div class="t" style="left:0;width:82px;text-align:center;top:51.5px;font-size:21.500px;color:#8c8c8c;">0.7</div></div></div><div class="a" style="left:229px;top:271.88px;width:80px;height:77.58px;background:#3e3e3e;overflow:hidden;"><div class="a" style="left:40.40px;top:30.10px;width:1.2px;height:1.2px;border-radius:50%;background:#808080;"></div><div class="t" style="left:0;width:82px;text-align:center;top:51.5px;font-size:21.500px;color:#8c8c8c;">1</div></div><div class="a" style="left:229px;top:351.96px;width:80px;height:77.58px;background:#3e3e3e;overflow:hidden;"><div class="a" style="left:40.20px;top:29.90px;width:1.6px;height:1.6px;border-radius:50%;background:#808080;"></div><div class="t" style="left:0;width:82px;text-align:center;top:51.5px;font-size:21.500px;color:#8c8c8c;">1.5</div></div><div class="a" style="left:229px;top:432.04px;width:80px;height:77.58px;background:#3e3e3e;overflow:hidden;"><div class="a" style="left:39.90px;top:29.60px;width:2.2px;height:2.2px;border-radius:50%;background:#808080;"></div><div class="t" style="left:0;width:82px;text-align:center;top:51.5px;font-size:21.500px;color:#8c8c8c;">2</div></div><div class="a" style="left:229px;top:512.12px;width:80px;height:77.58px;background:#3e3e3e;overflow:hidden;"><div class="a" style="left:39.60px;top:29.30px;width:2.8px;height:2.8px;border-radius:50%;background:#808080;"></div><div class="t" style="left:0;width:82px;text-align:center;top:51.5px;font-size:21.500px;color:#8c8c8c;">2.5</div></div><div class="a" style="left:229px;top:592.20px;width:80px;height:77.58px;background:#3e3e3e;overflow:hidden;"><div class="a" style="left:38.50px;top:28.20px;width:5px;height:5px;border-radius:50%;background:#808080;"></div><div class="t" style="left:0;width:82px;text-align:center;top:51.5px;font-size:21.500px;color:#8c8c8c;">3</div></div><div class="a" style="left:229px;top:672.28px;width:80px;height:77.58px;background:#3e3e3e;overflow:hidden;"><div class="a" style="left:37.50px;top:27.20px;width:7px;height:7px;border-radius:50%;background:#808080;"></div><div class="t" style="left:0;width:82px;text-align:center;top:51.5px;font-size:21.500px;color:#8c8c8c;">4</div></div><div class="a" style="left:229px;top:752.36px;width:80px;height:77.58px;background:#3e3e3e;overflow:hidden;"><div class="a" style="left:36.50px;top:26.20px;width:9px;height:9px;border-radius:50%;background:#808080;"></div><div class="t" style="left:0;width:82px;text-align:center;top:51.5px;font-size:21.500px;color:#8c8c8c;">5</div></div><div class="a" style="left:229px;top:832.44px;width:80px;height:77.58px;background:#3e3e3e;overflow:hidden;"><div class="a" style="left:35.50px;top:25.20px;width:11px;height:11px;border-radius:50%;background:#808080;"></div><div class="t" style="left:0;width:82px;text-align:center;top:51.5px;font-size:21.500px;color:#8c8c8c;">6</div></div><div class="a" style="left:229px;top:912.52px;width:80px;height:77.58px;background:#3e3e3e;overflow:hidden;"><div class="a" style="left:34.50px;top:24.20px;width:13px;height:13px;border-radius:50%;background:#808080;"></div><div class="t" style="left:0;width:82px;text-align:center;top:51.5px;font-size:21.500px;color:#8c8c8c;">7</div></div><div class="a" style="left:229px;top:992.60px;width:80px;height:77.58px;background:#3e3e3e;overflow:hidden;"><div class="a" style="left:33.50px;top:23.20px;width:15px;height:15px;border-radius:50%;background:#808080;"></div><div class="t" style="left:0;width:82px;text-align:center;top:51.5px;font-size:21.500px;color:#8c8c8c;">8</div></div><div class="a" style="left:229px;top:1072.68px;width:80px;height:77.58px;background:#3e3e3e;overflow:hidden;"><div class="a" style="left:31.50px;top:21.20px;width:19px;height:19px;border-radius:50%;background:#808080;"></div><div class="t" style="left:0;width:82px;text-align:center;top:51.5px;font-size:21.500px;color:#8c8c8c;">10</div></div><div class="a" style="left:229px;top:1152.76px;width:80px;height:77.58px;background:#3e3e3e;overflow:hidden;"><div class="a" style="left:29.50px;top:19.20px;width:23px;height:23px;border-radius:50%;background:#808080;"></div><div class="t" style="left:0;width:82px;text-align:center;top:51.5px;font-size:21.500px;color:#8c8c8c;">12</div></div><div class="a" style="left:229px;top:1232.84px;width:80px;height:77.58px;background:#3e3e3e;overflow:hidden;"><div class="a" style="left:26.75px;top:16.45px;width:28.5px;height:28.5px;border-radius:50%;background:#808080;"></div><div class="a" style="left:0;top:41.500px;width:80px;height:3.5px;overflow:hidden;"><div class="a" style="left:26.75px;top:-25.05px;width:28.5px;height:28.5px;border-radius:50%;background:#5e5e5e;"></div></div><div class="t" style="left:0;width:82px;text-align:center;top:51.5px;font-size:21.500px;color:#8c8c8c;">15</div></div><div class="a" style="left:229px;top:1312.92px;width:80px;height:77.58px;background:#3e3e3e;overflow:hidden;"><div class="a" style="left:24.75px;top:14.45px;width:32.5px;height:32.5px;border-radius:50%;background:#808080;"></div><div class="a" style="left:0;top:41.500px;width:80px;height:5.5px;overflow:hidden;"><div class="a" style="left:24.75px;top:-27.05px;width:32.5px;height:32.5px;border-radius:50%;background:#5e5e5e;"></div></div><div class="t" style="left:0;width:82px;text-align:center;top:51.5px;font-size:21.500px;color:#8c8c8c;">17</div></div><div class="a" style="left:229px;top:1393.00px;width:80px;height:77.58px;background:#3e3e3e;overflow:hidden;"><div class="a" style="left:21.75px;top:11.45px;width:38.5px;height:38.5px;border-radius:50%;background:#808080;"></div><div class="a" style="left:0;top:41.500px;width:80px;height:8.5px;overflow:hidden;"><div class="a" style="left:21.75px;top:-30.05px;width:38.5px;height:38.5px;border-radius:50%;background:#5e5e5e;"></div></div><div class="t" style="left:0;width:82px;text-align:center;top:51.5px;font-size:21.500px;color:#8c8c8c;">20</div></div><div class="a" style="left:229px;top:1473.08px;width:80px;height:77.58px;background:#3e3e3e;overflow:hidden;"><div class="a" style="left:16.75px;top:6.45px;width:48.5px;height:48.5px;border-radius:50%;background:#808080;"></div><div class="a" style="left:0;top:41.500px;width:80px;height:13.5px;overflow:hidden;"><div class="a" style="left:16.75px;top:-35.05px;width:48.5px;height:48.5px;border-radius:50%;background:#5e5e5e;"></div></div><div class="t" style="left:0;width:82px;text-align:center;top:51.5px;font-size:21.500px;color:#8c8c8c;">25</div></div><div class="a" style="left:229px;top:1553.16px;width:80px;height:77.58px;background:#3e3e3e;overflow:hidden;"><div class="a" style="left:16.75px;top:6.45px;width:48.5px;height:48.5px;border-radius:50%;background:#808080;"></div><div class="a" style="left:0;top:41.500px;width:80px;height:13.5px;overflow:hidden;"><div class="a" style="left:16.75px;top:-35.05px;width:48.5px;height:48.5px;border-radius:50%;background:#5e5e5e;"></div></div><div class="t" style="left:0;width:82px;text-align:center;top:51.5px;font-size:21.500px;color:#8c8c8c;">30</div></div><div class="a" style="left:229px;top:1633.24px;width:80px;height:29.76px;background:#3e3e3e;overflow:hidden;"><div class="a" style="left:16.75px;top:6.45px;width:48.5px;height:48.5px;border-radius:50%;background:#808080;"></div><div class="a" style="left:0;top:41.500px;width:80px;height:13.5px;overflow:hidden;"><div class="a" style="left:16.75px;top:-35.05px;width:48.5px;height:48.5px;border-radius:50%;background:#5e5e5e;"></div></div><div class="t" style="left:0;width:82px;text-align:center;top:51.5px;font-size:21.500px;color:#8c8c8c;">40</div></div>
<div class="a" style="left:310px;top:190px;width:12px;height:1474px;background:#454545;"></div>
<div class="a" style="left:312.5px;top:194px;width:7.5px;height:671px;background:#5a5a5a;border-radius:4px;"></div>
<div class="a" style="left:0px;top:1664px;width:328px;height:4px;background:#2a2a2a;"></div><div class="a" style="left:326px;top:198px;width:1549px;height:1470px;background:#2a2a2a;"></div>
<div class="a" style="left:328px;top:198px;width:1520px;height:1432px;background:#2d2d2d;"></div>
<div class="a" style="left:675px;top:283px;width:918px;height:1296px;background:#1c1c1c;"></div>
<div class="a" style="left:676px;top:284px;width:916px;height:1294px;background:#fff;background-image:conic-gradient(#cecece 25%,#fff 0 50%,#cecece 0 75%,#fff 0);background-size:16px 16px;background-position:8px 0;"></div>
<svg style="left:0;top:0;" width="2388" height="1668" viewBox="0 0 2388 1668"><path d="M804 422.5H1463M804 495.4H1455M804 568.2H1455M804 641.1H1463M804 713.9H1455M804 786.8H1455M804 859.7H1463M804 932.5H1455M804 1005.4H1455M804 1078.2H1463M804 1151.1H1455M804 1224.0H1455M804 1296.8H1463M804 1369.7H1455M804 1442.5H1455" stroke="#000" stroke-opacity=".2" stroke-width="1" fill="none"/><path d="M804 458.9H1455M804 531.8H1463M804 604.6H1455M804 677.5H1455M804 750.4H1463M804 823.2H1455M804 896.1H1455M804 969.0H1463M804 1041.8H1455M804 1114.7H1455M804 1187.5H1463M804 1260.4H1455M804 1333.2H1455M804 1406.1H1463M804 1479.0H1455" stroke="#000" stroke-opacity=".09" stroke-width="2" fill="none"/><path d="M1134 538V1150" stroke="#444" stroke-width="1" opacity=".8"/><g fill="none" stroke-linecap="round" stroke-linejoin="round"><path d="M1126.7 532.9C1119.4 534.3 1096.8 535.8 1083.0 541.2C1069.2 546.7 1056.2 556.1 1044.0 565.5C1031.8 574.9 1019.2 585.4 1010.1 597.7C1000.9 609.9 993.9 626.7 989.0 639.2C984.1 651.6 981.3 660.2 980.4 672.3C979.6 684.4 983.4 705.2 984.0 711.8M1125.6 533.3C1118.5 535.4 1096.5 540.4 1082.9 545.8C1069.3 551.2 1055.5 557.4 1044.2 565.6C1032.9 573.9 1023.4 583.1 1014.9 595.2C1006.4 607.4 999.0 625.5 993.3 638.4C987.6 651.3 982.5 660.2 980.8 672.4C979.2 684.6 983.0 705.2 983.4 711.7M1125.9 535.2C1118.8 536.5 1096.6 538.0 1082.9 542.8C1069.3 547.6 1056.2 555.0 1044.1 563.9C1031.9 572.8 1018.7 583.5 1010.1 596.1C1001.5 608.6 997.1 626.0 992.4 639.1C987.6 652.3 983.1 663.2 981.7 674.9C980.4 686.5 983.8 703.3 984.2 709.0M1097.4 537.3C1088.9 540.7 1061.0 546.3 1046.2 557.8C1031.5 569.2 1018.5 589.8 1009.0 606.2C999.4 622.6 992.4 639.0 988.9 656.1C985.4 673.1 988.3 699.7 988.2 708.5M1095.8 537.6C1087.5 540.9 1060.7 546.1 1045.8 557.4C1031.0 568.7 1016.4 588.7 1007.0 605.3C997.5 621.9 992.2 640.0 989.0 657.3C985.8 674.6 988.0 700.6 987.8 709.3M1135.6 534.4C1141.3 535.0 1156.7 533.8 1169.9 538.0C1183.2 542.3 1201.9 550.9 1214.9 559.8C1227.9 568.7 1239.0 579.5 1247.9 591.5C1256.9 603.5 1262.8 619.0 1268.5 631.8C1274.2 644.6 1279.3 658.5 1282.0 668.3C1284.7 678.1 1285.2 683.7 1284.7 690.8C1284.2 697.9 1279.9 707.6 1278.9 710.9M1132.1 533.7C1138.0 534.1 1154.7 532.0 1167.8 536.2C1180.9 540.4 1197.8 550.0 1210.9 558.9C1223.9 567.7 1236.2 577.0 1246.1 589.3C1256.0 601.6 1264.7 620.0 1270.2 632.7C1275.7 645.4 1276.9 655.2 1279.1 665.4C1281.2 675.6 1282.9 686.1 1283.3 693.9C1283.6 701.7 1281.5 708.9 1281.2 712.0M1133.4 533.4C1139.3 534.6 1155.1 536.6 1168.8 540.3C1182.5 544.0 1202.6 547.5 1215.6 555.6C1228.5 563.8 1237.4 576.7 1246.4 589.2C1255.4 601.7 1263.5 618.2 1269.4 630.7C1275.3 643.2 1279.9 654.3 1281.7 664.5C1283.6 674.6 1280.9 683.8 1280.4 691.5C1279.9 699.1 1279.1 707.2 1278.8 710.4M1240.8 636.6C1241.7 641.5 1243.6 657.1 1246.4 666.1C1249.2 675.1 1254.8 683.0 1257.4 690.5C1259.9 698.0 1260.9 707.5 1261.6 710.9M1240.5 637.0C1241.4 641.7 1243.5 656.2 1246.0 665.4C1248.5 674.6 1253.4 685.1 1255.6 692.3C1257.7 699.5 1258.4 706.0 1258.9 708.7M1088.8 445.0C1084.6 446.9 1071.7 450.6 1063.6 456.4C1055.5 462.2 1045.1 469.8 1040.1 479.8C1035.2 489.8 1034.2 503.8 1033.9 516.3C1033.6 528.8 1034.5 545.6 1038.6 555.0C1042.7 564.3 1052.2 566.9 1058.6 572.3C1065.0 577.8 1071.4 585.8 1076.9 587.8C1082.4 589.8 1087.2 583.7 1091.7 584.4C1096.2 585.0 1101.9 590.4 1104.0 591.6M1090.7 447.3C1085.9 448.9 1069.7 451.2 1061.7 456.8C1053.7 462.3 1046.4 471.0 1042.7 480.7C1038.9 490.3 1039.9 502.3 1039.2 514.8C1038.6 527.3 1035.4 545.9 1038.6 555.5C1041.7 565.1 1051.2 567.3 1058.0 572.3C1064.7 577.3 1073.2 582.4 1079.0 585.4C1084.9 588.5 1088.7 590.0 1092.9 590.6C1097.1 591.3 1102.2 589.6 1104.1 589.4M1089.2 446.5C1084.7 449.0 1069.8 455.4 1062.3 461.7C1054.8 468.0 1048.5 475.5 1044.0 484.4C1039.6 493.4 1035.5 503.4 1035.6 515.3C1035.6 527.2 1040.2 545.5 1044.3 555.8C1048.5 566.1 1054.2 571.3 1060.4 577.2C1066.5 583.0 1076.0 589.0 1081.1 590.6C1086.1 592.3 1087.5 588.3 1090.7 587.3C1093.9 586.3 1098.8 585.0 1100.4 584.6M1087.5 445.8C1083.4 448.4 1069.7 455.1 1063.0 461.1C1056.3 467.1 1051.0 472.0 1047.2 482.0C1043.3 492.0 1040.3 509.3 1040.0 520.9C1039.7 532.4 1042.8 542.6 1045.4 551.2C1048.0 559.9 1050.5 567.0 1055.7 572.9C1060.9 578.8 1070.2 583.9 1076.5 586.7C1082.8 589.6 1089.0 589.9 1093.6 590.1C1098.2 590.3 1102.2 588.2 1103.9 587.9M1091.9 450.2C1089.3 452.8 1078.8 459.4 1076.1 465.9C1073.5 472.5 1075.9 480.9 1076.1 489.4C1076.2 497.9 1076.1 507.0 1076.8 517.2C1077.5 527.4 1077.7 540.9 1080.2 550.5C1082.7 560.2 1087.9 569.7 1091.6 575.1C1095.4 580.5 1100.8 581.7 1102.6 583.0M1090.3 451.1C1088.6 453.1 1083.3 457.1 1080.1 462.8C1076.9 468.6 1071.5 476.0 1071.1 485.4C1070.7 494.8 1076.3 508.3 1077.8 519.2C1079.3 530.1 1077.0 541.6 1080.0 550.8C1083.0 559.9 1092.6 568.6 1095.7 574.2C1098.8 579.7 1098.2 582.3 1098.7 584.0M1088.6 445.3C1087.5 448.7 1084.2 458.3 1081.7 465.9C1079.2 473.4 1074.8 481.4 1073.7 490.3C1072.5 499.3 1073.0 510.2 1074.8 519.6C1076.6 529.1 1081.5 538.2 1084.3 546.9C1087.0 555.6 1088.8 565.7 1091.1 571.9C1093.4 578.1 1096.9 582.1 1098.0 584.2M1089.4 447.8C1087.3 451.1 1079.2 460.9 1076.4 467.5C1073.6 474.1 1072.7 478.6 1072.6 487.4C1072.5 496.1 1074.2 509.2 1075.8 519.8C1077.3 530.5 1078.9 542.4 1081.7 551.4C1084.5 560.3 1089.7 568.5 1092.7 573.4C1095.7 578.2 1098.6 579.4 1099.8 580.6M1092.4 531.7C1092.7 530.7 1091.7 527.5 1094.1 525.5C1096.5 523.6 1102.2 520.3 1107.0 519.8C1111.9 519.3 1120.0 521.4 1123.3 522.8C1126.6 524.1 1126.3 527.0 1126.9 527.9M1092.9 534.2C1093.2 532.6 1092.1 527.1 1094.5 524.5C1096.9 522.0 1102.5 519.3 1107.4 519.0C1112.2 518.7 1120.1 520.9 1123.5 522.6C1126.9 524.2 1127.1 527.8 1127.9 528.9M1094.4 532.8C1094.8 531.4 1094.3 526.3 1096.7 524.3C1099.0 522.3 1104.2 521.0 1108.5 520.7C1112.7 520.5 1119.0 521.2 1122.2 522.7C1125.4 524.2 1126.6 528.5 1127.5 529.6M1128.0 530.3C1129.3 528.6 1133.5 522.6 1135.5 520.3C1137.5 518.0 1139.2 517.1 1140.0 516.5M1128.3 528.8C1129.2 527.4 1132.0 523.0 1133.8 520.7C1135.6 518.4 1138.1 516.0 1138.9 515.0M1137.8 516.4C1140.4 513.9 1148.4 507.2 1153.4 501.7C1158.4 496.2 1160.7 488.9 1167.9 483.4C1175.1 477.9 1187.2 472.1 1196.5 468.5C1205.8 464.9 1215.6 464.5 1223.7 461.9C1231.8 459.3 1241.5 454.6 1245.0 453.1M1139.4 515.5C1141.9 513.1 1149.6 507.0 1154.4 501.4C1159.1 495.8 1161.0 487.4 1167.9 482.1C1174.8 476.7 1187.0 473.3 1195.8 469.4C1204.5 465.5 1211.9 462.3 1220.5 458.8C1229.1 455.4 1242.9 450.4 1247.4 448.7M1140.1 515.3C1141.7 512.6 1144.8 504.5 1149.8 499.0C1154.8 493.6 1162.8 486.9 1170.1 482.4C1177.4 478.0 1184.8 475.9 1193.7 472.4C1202.5 469.0 1214.8 465.7 1223.3 461.9C1231.7 458.1 1240.9 451.9 1244.5 449.8M1245.1 451.7L1282.4 467.4L1326.4 490.4M1247.2 450.3L1282.1 469.5L1326.8 489.9M1245.3 449.8L1283.5 468.2L1325.5 490.5M1309.5 490.0C1306.4 491.5 1295.6 496.5 1290.9 498.8C1286.2 501.2 1282.8 503.2 1281.2 504.1M1309.1 489.0C1306.2 490.7 1296.4 496.7 1291.8 499.0C1287.3 501.2 1283.3 502.0 1281.6 502.6M1281.3 493.8C1281.0 500.4 1279.7 518.3 1279.2 533.7C1278.6 549.1 1278.0 573.9 1278.1 586.2C1278.2 598.5 1279.5 603.9 1279.8 607.5M1282.1 493.9C1281.8 500.6 1280.9 518.5 1280.4 533.7C1279.9 549.0 1279.2 573.5 1279.0 585.6C1278.9 597.8 1279.5 603.1 1279.6 606.6M1282.0 494.8C1281.6 501.4 1279.6 519.5 1279.4 534.7C1279.2 549.9 1280.5 573.7 1280.9 585.9C1281.2 598.1 1281.3 604.2 1281.4 607.9M1139.8 516.8C1142.7 519.8 1151.8 529.7 1156.9 534.8C1162.0 539.8 1162.4 541.6 1170.2 547.0C1178.0 552.4 1192.2 561.5 1203.9 567.4C1215.5 573.3 1227.3 579.1 1240.1 582.4C1253.0 585.7 1274.1 586.6 1280.9 587.5M1138.2 514.2C1141.1 517.8 1150.6 530.7 1155.7 535.6C1160.8 540.6 1160.8 538.7 1168.6 544.0C1176.5 549.3 1190.9 561.0 1202.9 567.4C1214.9 573.9 1227.8 579.3 1240.7 582.5C1253.6 585.8 1273.8 586.3 1280.5 587.1M1139.1 515.4C1141.9 518.6 1151.1 529.3 1156.0 534.6C1161.0 539.8 1160.3 541.6 1168.6 546.9C1177.0 552.2 1194.5 560.2 1206.2 566.4C1217.8 572.5 1226.0 580.1 1238.4 583.6C1250.8 587.1 1273.5 586.8 1280.6 587.5M1125.8 530.8C1130.1 535.0 1141.9 547.5 1152.0 555.7C1162.0 563.9 1173.1 573.0 1185.9 580.2C1198.7 587.3 1213.3 593.9 1228.8 598.5C1244.3 603.1 1270.5 606.2 1278.9 607.7M1125.9 529.5C1130.2 533.7 1141.1 546.3 1151.3 554.7C1161.6 563.2 1173.9 572.7 1187.3 580.3C1200.7 587.8 1215.9 595.1 1231.5 599.9C1247.2 604.8 1272.9 607.9 1281.2 609.5M1127.2 530.6C1131.6 534.6 1143.7 546.1 1153.8 554.4C1163.9 562.8 1175.3 573.0 1187.8 580.7C1200.3 588.4 1213.3 595.9 1229.0 600.6C1244.6 605.2 1273.0 607.2 1281.8 608.6M1093.9 536.4C1095.1 539.6 1094.5 547.1 1101.3 555.8C1108.1 564.6 1121.5 579.0 1134.6 588.9C1147.7 598.8 1165.2 608.0 1179.8 615.0C1194.5 622.1 1207.9 627.4 1222.3 631.1C1236.8 634.8 1255.2 637.5 1266.5 637.0C1277.8 636.6 1284.4 631.5 1290.3 628.3C1296.2 625.1 1301.0 621.5 1302.0 617.8C1303.1 614.2 1299.8 609.6 1296.6 606.4C1293.5 603.1 1285.5 599.6 1283.3 598.3M1093.4 535.7C1095.0 538.6 1096.0 544.3 1103.1 553.1C1110.2 561.9 1123.6 578.4 1136.2 588.4C1148.7 598.5 1163.8 607.1 1178.3 613.5C1192.7 619.9 1208.0 623.2 1222.7 626.8C1237.5 630.3 1255.7 634.3 1266.8 634.7C1277.9 635.2 1283.1 632.5 1289.5 629.6C1295.9 626.6 1303.4 620.8 1305.2 617.0C1306.9 613.3 1303.7 610.4 1300.0 607.1C1296.3 603.8 1285.8 598.7 1283.0 597.0M1092.6 535.7C1094.6 539.2 1097.4 548.1 1104.6 556.3C1111.7 564.5 1123.4 575.6 1135.3 584.9C1147.3 594.2 1161.8 604.9 1176.4 612.0C1191.0 619.2 1208.3 624.4 1223.2 628.0C1238.1 631.6 1254.9 633.2 1265.9 633.5C1276.9 633.7 1282.9 631.9 1289.4 629.6C1295.9 627.3 1303.2 623.9 1304.9 619.6C1306.6 615.2 1303.3 607.2 1299.6 603.5C1296.0 599.8 1285.8 598.4 1283.1 597.4M1092.5 532.8C1094.6 536.3 1097.8 544.7 1105.2 554.1C1112.7 563.6 1125.4 579.6 1137.1 589.4C1148.8 599.3 1161.3 606.1 1175.7 613.1C1190.1 620.1 1208.6 627.9 1223.6 631.5C1238.5 635.1 1254.2 634.5 1265.3 634.8C1276.4 635.1 1284.0 635.8 1290.2 633.1C1296.4 630.5 1301.3 623.7 1302.4 619.0C1303.5 614.3 1299.7 608.6 1296.8 604.7C1294.0 600.8 1287.3 597.2 1285.4 595.7M1101.0 538.3C1104.0 542.5 1110.4 554.5 1118.8 563.5C1127.1 572.5 1138.1 584.3 1150.9 592.3C1163.7 600.3 1181.3 605.8 1195.6 611.3C1210.0 616.9 1224.2 623.0 1237.3 625.5C1250.3 628.0 1264.7 627.4 1274.1 626.5C1283.5 625.5 1290.4 620.8 1293.7 619.7M1098.9 539.7C1101.6 543.7 1106.0 555.5 1115.0 563.7C1124.1 572.0 1139.7 580.6 1153.5 589.0C1167.2 597.4 1182.9 608.3 1197.5 614.2C1212.1 620.2 1228.3 622.6 1241.0 624.7C1253.7 626.8 1264.4 627.5 1273.7 626.8C1283.1 626.2 1293.4 621.7 1297.3 620.7M1099.1 537.9C1101.9 541.8 1107.6 551.8 1116.2 560.8C1124.7 569.8 1137.3 583.0 1150.4 592.0C1163.5 601.1 1180.2 609.7 1194.8 615.2C1209.5 620.6 1225.1 622.8 1238.3 624.6C1251.6 626.4 1264.9 626.4 1274.3 626.0C1283.7 625.6 1291.3 622.9 1294.7 622.2M1135.8 535.7C1142.9 537.0 1164.1 537.4 1178.7 543.0C1193.2 548.7 1211.9 562.1 1223.3 569.8C1234.7 577.5 1243.1 586.0 1247.0 589.2M1135.3 534.6C1142.6 535.9 1164.7 536.6 1179.0 542.2C1193.4 547.8 1209.8 560.4 1221.2 568.3C1232.7 576.1 1243.3 585.9 1247.7 589.5M1334.4 465.4L1340.7 478.9L1356.4 477.3L1345.8 487.7L1350.5 501.3L1336.9 494.5L1325.7 504.9L1328.3 489.3L1317.3 483.0L1330.4 478.7zM1333.8 464.9L1340.8 477.5L1354.9 477.3L1345.6 488.9L1350.9 501.3L1337.4 495.3L1326.0 503.7L1327.4 489.4L1317.4 481.2L1330.5 479.7zM1335.2 465.1L1340.7 477.8L1355.2 477.7L1346.4 488.8L1351.2 500.5L1336.6 495.7L1327.1 504.0L1328.5 488.9L1316.2 482.8L1331.2 480.2z" stroke="#241c7c" stroke-width="1.3" opacity=".92"/><path d="M1127.6 534.8C1120.0 536.2 1096.2 538.2 1082.2 543.5C1068.2 548.7 1055.4 557.2 1043.8 566.2C1032.2 575.2 1021.1 585.4 1012.4 597.6C1003.6 609.8 996.4 626.7 991.4 639.5C986.5 652.3 983.9 662.7 982.7 674.4C981.5 686.2 984.2 704.1 984.4 710.1M1096.2 536.5C1088.0 540.0 1061.8 546.1 1047.3 557.5C1032.7 568.8 1018.8 588.0 1008.9 604.6C999.0 621.2 991.7 639.4 987.9 657.0C984.2 674.6 986.5 701.2 986.2 710.1M1134.6 533.9C1140.4 534.6 1156.4 534.3 1169.5 538.2C1182.6 542.2 1200.1 548.7 1213.2 557.5C1226.3 566.2 1238.5 578.4 1248.1 590.6C1257.7 602.9 1265.3 618.3 1270.8 630.8C1276.3 643.3 1279.2 655.5 1281.3 665.7C1283.3 675.9 1283.3 684.5 1283.0 691.9C1282.7 699.3 1280.1 707.0 1279.5 710.1M1239.4 636.0C1240.5 641.0 1243.4 656.4 1246.3 665.7C1249.2 675.0 1254.5 684.5 1256.8 691.9C1259.1 699.3 1259.7 707.0 1260.3 710.1M1090.9 447.5C1086.6 449.5 1072.6 453.9 1064.8 459.7C1056.9 465.5 1048.5 472.8 1043.8 482.4C1039.2 492.0 1037.1 505.7 1036.8 517.3C1036.5 528.9 1038.6 542.6 1042.1 552.2C1045.6 561.8 1051.7 568.8 1057.8 574.9C1063.9 581.0 1072.9 586.8 1078.7 588.9C1084.5 590.9 1088.9 587.3 1092.7 587.1C1096.5 587.0 1100.0 587.9 1101.4 588.0M1090.9 448.3C1088.9 451.1 1081.6 458.4 1078.7 464.9C1075.8 471.5 1074.1 478.9 1073.5 487.6C1072.9 496.3 1073.8 507.1 1075.2 517.3C1076.7 527.5 1079.3 539.4 1082.2 548.7C1085.1 558.0 1089.8 567.3 1092.7 573.2C1095.6 579.0 1098.5 581.9 1099.7 583.6M1092.7 533.0C1093.3 531.6 1093.6 526.5 1096.2 524.3C1098.8 522.1 1104.0 520.2 1108.4 519.9C1112.8 519.6 1119.2 521.2 1122.4 522.5C1125.6 523.8 1126.7 526.9 1127.6 527.8M1127.6 529.5C1128.8 528.1 1132.6 523.1 1134.6 520.8C1136.6 518.5 1139.0 516.4 1139.8 515.6M1139.8 515.6C1141.9 512.9 1147.1 505.4 1152.1 499.8C1157.0 494.3 1162.2 487.3 1169.5 482.4C1176.8 477.4 1187.0 473.9 1195.7 470.2C1204.4 466.4 1213.5 462.9 1221.9 459.7C1230.3 456.5 1242.3 452.4 1246.3 451.0M1246.3 451.0L1283.0 468.4L1326.7 489.4M1309.2 489.4C1306.3 490.8 1296.2 495.8 1291.7 498.1C1287.2 500.4 1283.7 502.5 1282.1 503.3M1281.3 494.6C1281.1 501.3 1280.7 519.3 1280.4 534.8C1280.1 550.2 1279.5 574.9 1279.5 587.1C1279.5 599.4 1280.2 604.6 1280.4 608.1M1139.8 515.6C1142.7 518.8 1152.3 529.8 1157.3 534.8C1162.2 539.7 1161.7 540.0 1169.5 545.2C1177.4 550.5 1192.8 560.1 1204.4 566.2C1216.1 572.3 1226.6 578.3 1239.4 581.9C1252.2 585.5 1274.3 587.0 1281.3 588.0M1127.6 531.3C1131.7 535.3 1142.2 547.6 1152.1 555.7C1161.9 563.9 1173.9 572.9 1187.0 580.2C1200.1 587.4 1215.1 594.7 1230.6 599.4C1246.2 604.0 1272.1 606.6 1280.4 608.1M1092.7 534.8C1094.4 538.2 1096.2 547.0 1103.2 555.7C1110.2 564.4 1122.1 577.5 1134.6 587.1C1147.1 596.7 1163.7 606.3 1178.2 613.3C1192.8 620.3 1207.3 625.3 1221.9 629.0C1236.4 632.8 1253.9 635.7 1265.5 636.0C1277.2 636.3 1285.3 633.7 1291.7 630.8C1298.1 627.9 1302.8 622.9 1304.0 618.6C1305.1 614.2 1302.2 608.1 1298.7 604.6C1295.2 601.1 1285.6 598.8 1283.0 597.6M1099.7 538.2C1102.6 542.3 1108.4 554.0 1117.1 562.7C1125.9 571.4 1139.0 582.2 1152.1 590.6C1165.2 599.1 1181.2 607.5 1195.7 613.3C1210.3 619.1 1226.3 623.2 1239.4 625.5C1252.4 627.9 1265.0 628.2 1274.3 627.3C1283.6 626.4 1291.7 621.5 1295.2 620.3M1134.6 534.8C1141.9 535.9 1163.7 535.9 1178.2 541.7C1192.8 547.6 1210.5 561.5 1221.9 569.7C1233.2 577.8 1242.3 587.1 1246.3 590.6M1334.5 465.7L1341.1 478.4L1355.4 477.8L1345.5 488.1L1350.4 501.5L1337.6 495.2L1326.3 504.1L1328.3 489.9L1316.5 481.9L1330.5 479.5z" stroke="#241c7c" stroke-width="2.05"/><path d="" stroke="#000" stroke-width="1.2"/><path d="" stroke="#000" stroke-width="3.2"/></g><g fill="none" stroke-linecap="round" stroke-linejoin="round"><path d="M1118.4 794.2C1121.0 794.9 1127.7 798.4 1133.7 798.4C1139.7 798.4 1150.9 794.7 1154.4 794.0M1118.4 794.9C1121.1 795.7 1128.5 799.6 1134.5 799.4C1140.5 799.2 1151.0 794.7 1154.3 793.8M1047.4 744.9C1047.8 747.2 1047.9 755.8 1049.9 758.8C1051.9 761.8 1054.0 761.6 1059.5 762.8C1065.0 763.9 1074.7 765.7 1082.9 765.8C1091.0 765.9 1102.7 765.3 1108.4 763.6C1114.0 761.8 1115.0 758.8 1116.9 755.3C1118.7 751.8 1119.1 744.5 1119.5 742.4M1048.1 743.7C1048.6 745.9 1048.9 753.7 1050.7 756.9C1052.5 760.1 1053.1 761.5 1058.8 763.1C1064.4 764.7 1076.3 766.6 1084.6 766.6C1093.0 766.6 1103.5 764.9 1108.9 763.1C1114.3 761.3 1115.2 759.1 1117.1 755.7C1119.1 752.2 1119.9 744.8 1120.4 742.6M1053.9 743.8C1054.3 745.8 1054.6 753.3 1056.1 755.7C1057.5 758.1 1057.9 757.2 1062.5 758.3C1067.2 759.4 1076.8 762.4 1084.0 762.3C1091.2 762.2 1100.9 759.3 1105.8 757.8C1110.6 756.3 1111.4 756.0 1113.0 753.4C1114.5 750.8 1114.8 744.3 1115.1 742.5M1054.9 745.3C1055.1 746.9 1054.6 752.5 1056.1 754.7C1057.5 756.9 1059.0 757.4 1063.7 758.4C1068.4 759.4 1077.3 760.7 1084.3 760.9C1091.3 761.0 1101.0 760.4 1105.8 759.3C1110.5 758.3 1111.4 757.3 1112.9 754.5C1114.4 751.7 1114.4 744.4 1114.7 742.4M1047.7 744.1C1048.5 744.0 1051.5 743.4 1052.7 743.4C1053.8 743.4 1054.1 743.9 1054.4 744.0M1113.4 744.3L1118.5 740.7M1118.7 744.7C1120.3 745.0 1125.3 746.4 1127.9 746.7C1130.6 747.0 1132.2 746.7 1134.6 746.5C1137.1 746.3 1140.6 745.7 1142.8 745.4C1145.0 745.2 1146.9 745.1 1147.8 745.0M1119.8 744.1C1121.1 744.4 1125.2 745.6 1127.6 745.9C1129.9 746.1 1131.7 745.6 1134.1 745.4C1136.4 745.3 1139.3 745.2 1141.6 744.9C1143.9 744.7 1146.9 744.2 1147.9 744.1M1122.8 750.0C1124.8 750.1 1131.1 750.4 1135.0 750.5C1138.9 750.6 1144.4 750.6 1146.3 750.6M1122.6 750.5C1124.4 750.6 1129.6 750.9 1133.6 750.9C1137.5 750.9 1144.2 750.8 1146.3 750.7M1118.6 744.5L1123.1 749.7M1148.0 745.1L1147.2 748.9M1147.3 741.3C1147.9 743.7 1148.9 751.7 1151.2 755.7C1153.5 759.6 1155.7 763.1 1161.0 764.9C1166.3 766.6 1174.9 766.4 1182.8 766.2C1190.8 766.0 1203.1 765.1 1208.6 763.8C1214.1 762.5 1214.2 761.7 1215.8 758.4C1217.5 755.1 1218.1 746.3 1218.6 743.8M1147.2 742.8C1147.9 745.0 1148.8 753.1 1151.2 756.5C1153.6 759.8 1156.2 761.4 1161.4 763.0C1166.6 764.7 1174.7 766.4 1182.6 766.6C1190.5 766.8 1203.0 766.0 1208.6 764.5C1214.1 762.9 1214.4 760.8 1216.1 757.4C1217.8 754.0 1218.4 746.5 1218.8 744.3M1154.0 742.4C1154.3 744.4 1154.0 751.2 1155.5 754.1C1157.0 757.0 1158.2 758.7 1162.9 759.9C1167.5 761.1 1176.3 761.6 1183.4 761.4C1190.5 761.2 1200.6 759.7 1205.5 758.5C1210.3 757.4 1211.4 756.6 1212.6 754.4C1213.7 752.2 1212.6 746.9 1212.6 745.4M1152.6 742.2C1152.8 744.1 1152.4 750.7 1153.9 753.7C1155.4 756.7 1156.8 758.8 1161.8 760.3C1166.9 761.9 1176.7 763.2 1184.0 762.8C1191.2 762.4 1200.8 759.2 1205.4 757.9C1209.9 756.7 1209.7 757.5 1211.1 755.3C1212.5 753.1 1213.2 746.5 1213.6 744.7M1212.5 744.6C1213.2 744.4 1215.5 742.9 1216.7 743.0C1217.8 743.1 1219.1 744.9 1219.6 745.2M1111.7 725.7C1111.7 728.8 1111.9 732.8 1111.1 735.9C1110.2 739.1 1108.2 742.3 1106.6 744.7C1105.1 747.2 1103.9 749.0 1101.7 750.6C1099.5 752.1 1096.0 753.2 1093.4 754.1C1090.8 755.0 1088.1 756.6 1086.0 756.1C1083.8 755.6 1082.5 752.5 1080.6 751.0C1078.7 749.4 1076.1 749.2 1074.5 746.7C1073.0 744.2 1071.9 739.0 1071.3 735.7C1070.7 732.5 1070.7 730.6 1071.0 727.3C1071.2 724.0 1072.2 718.8 1072.8 715.9C1073.4 712.9 1073.3 711.6 1074.8 709.6C1076.2 707.5 1079.6 705.4 1081.4 703.5C1083.2 701.6 1083.7 699.1 1085.6 698.2C1087.5 697.2 1090.2 697.1 1093.0 697.9C1095.8 698.6 1100.0 700.8 1102.4 702.5C1104.9 704.2 1106.3 705.7 1107.8 708.2C1109.2 710.6 1110.5 714.0 1111.1 717.0C1111.8 719.9 1111.8 722.5 1111.7 725.7zM1110.5 727.7C1110.8 730.7 1112.0 732.4 1111.4 735.3C1110.8 738.3 1108.6 742.9 1106.7 745.5C1104.8 748.1 1102.3 749.7 1100.0 751.1C1097.8 752.5 1095.4 753.3 1093.1 753.9C1090.8 754.6 1088.3 755.8 1086.3 755.2C1084.2 754.6 1083.0 752.3 1080.8 750.6C1078.6 748.8 1074.8 747.1 1073.3 744.6C1071.8 742.1 1072.5 738.7 1071.8 735.6C1071.2 732.5 1069.4 729.0 1069.4 725.9C1069.5 722.9 1071.5 720.4 1072.2 717.3C1072.9 714.2 1072.2 709.8 1073.5 707.3C1074.8 704.8 1077.7 704.0 1080.0 702.4C1082.3 700.7 1085.3 698.0 1087.5 697.5C1089.7 697.1 1091.0 698.8 1093.1 699.4C1095.3 700.1 1098.5 699.8 1100.6 701.5C1102.8 703.3 1104.3 707.4 1105.8 710.0C1107.3 712.6 1108.6 714.4 1109.4 717.3C1110.2 720.3 1110.1 724.7 1110.5 727.7zM1110.8 726.6C1110.7 729.8 1111.9 735.2 1111.1 738.1C1110.3 741.1 1107.6 742.1 1106.0 744.2C1104.4 746.3 1103.9 748.6 1101.6 750.6C1099.4 752.6 1095.1 755.3 1092.7 756.1C1090.2 757.0 1088.9 756.5 1086.8 755.9C1084.7 755.3 1082.0 754.7 1080.0 752.7C1078.0 750.7 1076.4 746.7 1074.7 744.1C1073.0 741.4 1070.5 739.4 1069.7 736.7C1069.0 734.1 1070.4 731.3 1070.5 728.1C1070.5 724.9 1069.3 720.8 1070.0 717.5C1070.6 714.2 1072.9 711.2 1074.4 708.6C1076.0 705.9 1077.1 702.9 1079.2 701.5C1081.3 700.1 1084.8 700.6 1087.1 700.2C1089.4 699.7 1090.5 698.2 1093.0 698.8C1095.4 699.4 1099.8 702.2 1101.9 703.7C1104.0 705.1 1103.9 704.9 1105.5 707.4C1107.0 709.9 1110.5 715.4 1111.4 718.6C1112.3 721.8 1110.8 723.3 1110.8 726.6zM1097.7 728.2C1097.7 730.5 1097.4 733.6 1096.8 735.7C1096.1 737.8 1094.7 740.0 1093.6 740.9C1092.5 741.9 1091.0 741.7 1089.9 741.4C1088.8 741.1 1087.7 740.2 1086.8 739.2C1085.8 738.1 1084.5 737.2 1084.3 735.1C1084.0 733.0 1085.0 729.1 1085.3 726.7C1085.5 724.2 1085.1 722.2 1085.8 720.3C1086.6 718.5 1088.5 716.6 1089.6 715.6C1090.7 714.5 1091.1 713.6 1092.3 713.9C1093.5 714.2 1095.8 716.2 1096.6 717.6C1097.3 719.0 1096.7 720.5 1096.9 722.3C1097.0 724.0 1097.7 726.0 1097.7 728.2zM1098.3 728.2C1098.1 730.5 1097.5 733.1 1096.6 735.2C1095.7 737.3 1094.1 739.7 1093.0 740.8C1091.8 741.9 1090.6 741.8 1089.5 741.7C1088.3 741.5 1086.9 741.1 1086.0 739.9C1085.2 738.8 1084.6 736.8 1084.3 734.7C1084.1 732.6 1084.3 729.5 1084.5 727.2C1084.7 724.9 1084.6 722.8 1085.4 720.8C1086.3 718.8 1088.2 716.2 1089.5 715.3C1090.9 714.3 1092.6 714.9 1093.6 715.0C1094.7 715.1 1095.3 715.0 1096.0 716.1C1096.7 717.1 1097.4 719.3 1097.8 721.3C1098.1 723.3 1098.5 725.9 1098.3 728.2zM1096.9 729.0C1096.5 731.2 1095.7 734.1 1095.0 735.8C1094.3 737.6 1093.7 738.8 1092.8 739.7C1091.9 740.6 1090.5 741.1 1089.5 741.2C1088.5 741.3 1087.5 741.6 1086.7 740.3C1085.8 739.1 1084.9 735.6 1084.5 733.4C1084.2 731.2 1084.1 729.3 1084.6 727.1C1085.1 724.8 1086.4 721.5 1087.4 719.8C1088.3 718.1 1089.3 717.6 1090.3 716.8C1091.3 716.1 1092.7 714.9 1093.6 715.1C1094.4 715.2 1094.8 716.4 1095.5 717.7C1096.2 719.1 1097.6 721.2 1097.8 723.1C1098.0 725.0 1097.4 726.9 1096.9 729.0zM1083.1 734.5L1088.7 722.0M1083.8 734.0L1089.2 722.6M1084.9 735.9L1090.5 720.6M1084.2 735.7L1090.9 720.0M1086.6 737.3L1092.2 719.2M1087.2 737.0L1092.7 718.6M1088.4 738.7L1093.9 717.8M1088.4 739.4L1093.5 717.4M1090.1 737.3L1095.7 719.2M1090.1 737.0L1095.0 718.7M1091.9 735.9L1097.4 720.6M1091.3 736.6L1097.7 721.2M1093.6 734.5L1099.2 722.0M1093.1 735.0L1098.6 722.0M1086.5 708.8C1086.5 710.2 1086.4 711.6 1085.7 712.7C1085.0 713.8 1083.5 715.0 1082.2 715.5C1080.8 715.9 1078.8 716.1 1077.6 715.6C1076.5 715.1 1075.9 713.6 1075.4 712.5C1074.9 711.3 1074.4 709.8 1074.5 708.7C1074.6 707.5 1075.4 706.4 1076.0 705.6C1076.6 704.7 1077.0 704.1 1078.0 703.6C1079.0 703.2 1080.7 702.5 1082.0 702.7C1083.2 702.9 1084.7 703.7 1085.5 704.7C1086.2 705.8 1086.4 707.5 1086.5 708.8zM1086.8 708.7C1086.9 710.0 1086.1 712.3 1085.3 713.4C1084.6 714.5 1083.4 715.0 1082.2 715.1C1081.0 715.2 1079.3 714.6 1078.0 714.1C1076.7 713.6 1075.1 712.9 1074.5 712.1C1073.9 711.2 1074.1 709.9 1074.2 708.9C1074.3 707.9 1074.7 707.1 1075.2 706.1C1075.8 705.1 1076.5 703.4 1077.7 702.8C1078.9 702.2 1081.2 702.1 1082.3 702.5C1083.4 702.9 1083.6 704.2 1084.3 705.2C1085.1 706.3 1086.6 707.3 1086.8 708.7zM1104.2 737.2C1104.1 737.8 1103.9 738.9 1103.5 739.3C1103.2 739.7 1102.6 739.7 1102.1 739.6C1101.5 739.6 1100.8 739.5 1100.3 739.2C1099.7 738.8 1099.0 738.5 1099.0 737.8C1098.9 737.1 1099.4 735.6 1099.9 735.1C1100.3 734.6 1100.8 734.7 1101.6 734.9C1102.3 735.0 1103.8 735.4 1104.2 735.8C1104.7 736.2 1104.3 736.6 1104.2 737.2zM1101.0 744.1C1100.9 745.0 1100.1 746.5 1099.5 747.2C1098.9 747.8 1098.1 748.0 1097.3 748.0C1096.5 748.0 1095.3 747.5 1094.7 747.0C1094.1 746.4 1093.9 745.4 1093.9 744.6C1093.8 743.7 1093.8 742.7 1094.3 742.0C1094.8 741.3 1095.9 740.6 1096.8 740.5C1097.7 740.4 1099.2 740.7 1099.9 741.3C1100.6 741.9 1101.1 743.1 1101.0 744.1zM1100.6 744.6C1100.6 745.5 1100.0 746.6 1099.5 747.1C1099.0 747.6 1098.6 747.8 1097.7 747.8C1096.9 747.8 1094.9 747.7 1094.2 747.1C1093.5 746.6 1093.3 745.4 1093.4 744.5C1093.5 743.5 1094.3 742.0 1094.9 741.3C1095.5 740.6 1096.3 740.1 1097.1 740.3C1097.8 740.4 1098.9 741.3 1099.5 742.0C1100.1 742.7 1100.6 743.8 1100.6 744.6zM1199.4 727.5C1199.0 731.0 1196.6 734.8 1195.7 737.7C1194.9 740.6 1195.6 742.8 1194.5 745.0C1193.4 747.3 1191.3 749.9 1189.0 751.3C1186.7 752.8 1183.2 753.3 1180.6 753.6C1178.1 754.0 1175.8 753.7 1173.5 753.4C1171.3 753.2 1168.9 753.5 1167.1 752.3C1165.3 751.1 1164.1 749.0 1162.8 746.2C1161.4 743.5 1160.1 739.1 1159.2 735.9C1158.4 732.6 1157.5 729.8 1157.5 726.7C1157.5 723.5 1158.8 720.1 1159.5 717.2C1160.1 714.3 1159.8 711.7 1161.4 709.0C1163.0 706.4 1166.7 703.3 1169.1 701.3C1171.4 699.4 1173.6 697.9 1175.5 697.3C1177.5 696.7 1178.5 696.9 1180.8 698.0C1183.0 699.0 1186.7 701.9 1189.0 703.6C1191.3 705.3 1192.9 705.9 1194.5 708.0C1196.1 710.2 1197.7 713.3 1198.5 716.6C1199.3 719.8 1199.9 724.0 1199.4 727.5zM1197.7 728.1C1197.6 731.3 1198.3 734.1 1197.7 737.2C1197.1 740.3 1195.8 744.1 1194.2 746.7C1192.6 749.2 1190.1 751.0 1188.1 752.6C1186.1 754.1 1184.5 755.5 1182.1 756.0C1179.8 756.5 1176.5 756.4 1174.2 755.6C1171.8 754.7 1170.0 752.6 1167.8 750.9C1165.7 749.2 1163.0 747.7 1161.2 745.5C1159.5 743.4 1158.1 741.2 1157.2 737.9C1156.4 734.5 1156.2 728.6 1156.2 725.4C1156.2 722.1 1156.4 721.5 1157.3 718.5C1158.2 715.5 1160.2 710.4 1161.7 707.4C1163.1 704.5 1163.9 702.1 1166.1 700.8C1168.4 699.4 1172.3 699.4 1175.0 699.2C1177.6 699.0 1180.1 699.0 1182.1 699.6C1184.1 700.1 1185.0 700.8 1186.9 702.5C1188.7 704.2 1191.4 706.9 1193.3 709.6C1195.2 712.2 1197.6 715.3 1198.3 718.3C1199.0 721.4 1197.8 725.0 1197.7 728.1zM1197.2 728.0C1197.5 731.4 1199.4 735.3 1198.6 738.0C1197.8 740.7 1194.4 742.2 1192.5 744.2C1190.5 746.2 1188.7 748.1 1187.0 750.0C1185.4 752.0 1184.6 754.9 1182.6 755.9C1180.6 756.8 1177.2 756.7 1174.8 755.9C1172.3 755.1 1170.4 752.8 1168.0 750.8C1165.7 748.8 1162.3 746.4 1160.9 743.9C1159.4 741.4 1160.1 738.5 1159.4 735.7C1158.7 732.8 1157.1 729.8 1156.8 726.6C1156.4 723.4 1156.3 719.3 1157.1 716.4C1157.8 713.5 1159.8 711.7 1161.5 709.2C1163.2 706.8 1164.8 703.4 1167.2 701.6C1169.6 699.9 1173.2 699.2 1175.8 698.8C1178.4 698.4 1180.8 698.7 1182.6 699.2C1184.4 699.7 1184.9 700.2 1186.8 701.9C1188.6 703.6 1191.8 706.8 1193.5 709.4C1195.2 712.1 1196.2 714.7 1196.8 717.8C1197.4 720.9 1196.9 724.6 1197.2 728.0zM1184.1 726.7C1184.4 728.9 1185.0 731.5 1184.8 733.5C1184.7 735.6 1184.1 737.8 1183.0 739.1C1182.0 740.4 1179.4 741.0 1178.3 741.5C1177.2 741.9 1177.5 742.6 1176.4 741.7C1175.2 740.8 1172.6 737.9 1171.6 735.9C1170.7 734.0 1171.1 732.1 1170.8 729.8C1170.6 727.5 1169.9 724.2 1170.1 722.1C1170.3 720.1 1171.3 718.6 1172.1 717.4C1172.9 716.3 1173.9 715.7 1175.0 715.3C1176.0 715.0 1177.3 714.3 1178.6 715.2C1179.8 716.1 1181.6 718.6 1182.5 720.5C1183.5 722.5 1183.7 724.6 1184.1 726.7zM1183.2 727.6C1183.3 729.9 1183.2 732.8 1183.2 735.0C1183.1 737.1 1183.4 739.2 1182.8 740.4C1182.2 741.5 1180.8 741.8 1179.6 741.8C1178.4 741.8 1176.6 741.6 1175.6 740.5C1174.6 739.4 1174.2 737.1 1173.5 735.1C1172.8 733.0 1172.2 730.4 1171.6 728.2C1171.1 725.9 1169.9 723.5 1170.1 721.6C1170.4 719.7 1172.4 717.8 1173.3 716.7C1174.1 715.7 1174.3 715.4 1175.2 715.2C1176.1 715.1 1177.3 714.8 1178.4 715.7C1179.6 716.7 1181.4 719.1 1182.2 721.1C1183.0 723.0 1183.0 725.3 1183.2 727.6zM1184.5 727.6C1184.9 729.9 1184.2 731.9 1183.7 734.0C1183.3 736.1 1182.3 739.1 1181.6 740.5C1181.0 741.9 1180.8 742.6 1179.7 742.6C1178.6 742.6 1176.2 741.6 1175.1 740.6C1174.0 739.5 1174.1 738.0 1173.3 736.1C1172.4 734.2 1170.3 731.5 1170.0 729.1C1169.8 726.7 1171.3 723.7 1171.5 721.6C1171.8 719.5 1171.1 717.4 1171.8 716.3C1172.5 715.2 1174.8 715.3 1175.9 715.1C1177.0 714.9 1177.3 714.2 1178.3 715.1C1179.2 715.9 1180.6 718.1 1181.6 720.2C1182.6 722.3 1184.1 725.3 1184.5 727.6zM1169.4 734.5L1175.0 722.0M1169.4 734.0L1174.7 721.5M1171.1 735.9L1176.7 720.6M1171.9 736.3L1176.1 721.3M1172.9 737.3L1178.5 719.2M1172.2 737.1L1179.2 719.6M1174.6 738.7L1180.2 717.8M1175.0 738.6L1179.7 718.0M1176.4 737.3L1181.9 719.2M1175.7 736.9L1181.8 718.4M1178.1 735.9L1183.7 720.6M1177.9 736.4L1184.0 720.6M1179.8 734.5L1185.4 722.0M1180.1 734.5L1184.9 722.1M1194.4 709.4C1194.6 710.6 1194.6 711.6 1194.0 712.5C1193.3 713.5 1191.7 714.9 1190.4 715.2C1189.1 715.6 1187.5 714.8 1186.4 714.4C1185.3 714.1 1184.4 714.1 1183.8 713.2C1183.2 712.4 1182.7 710.6 1182.7 709.4C1182.8 708.1 1183.3 706.8 1184.0 705.7C1184.7 704.7 1185.7 703.5 1186.7 703.2C1187.7 702.8 1189.0 703.1 1190.0 703.4C1191.0 703.8 1192.0 704.3 1192.7 705.3C1193.4 706.3 1194.2 708.2 1194.4 709.4zM1195.0 709.4C1195.1 710.4 1194.3 711.3 1193.5 712.2C1192.8 713.1 1191.3 714.4 1190.2 714.8C1189.0 715.2 1187.8 715.0 1186.7 714.7C1185.6 714.5 1184.6 714.2 1183.7 713.3C1182.9 712.4 1181.8 710.6 1181.8 709.3C1181.8 707.9 1183.1 706.2 1183.9 705.3C1184.7 704.4 1185.6 704.3 1186.5 704.0C1187.4 703.6 1188.5 703.0 1189.6 703.3C1190.6 703.6 1191.9 704.9 1192.8 705.9C1193.7 706.9 1194.8 708.3 1195.0 709.4zM1169.7 737.3C1169.6 737.9 1168.5 738.8 1168.0 739.3C1167.5 739.7 1167.2 740.2 1166.6 740.2C1166.1 740.2 1165.1 739.8 1164.7 739.3C1164.4 738.9 1164.3 737.9 1164.3 737.4C1164.3 736.8 1164.3 736.4 1164.6 735.9C1165.0 735.5 1165.7 734.9 1166.3 734.9C1166.9 734.9 1167.8 735.3 1168.3 735.8C1168.9 736.2 1169.7 736.8 1169.7 737.3zM1174.7 744.8C1174.6 745.6 1174.5 746.0 1173.9 746.6C1173.2 747.1 1172.0 748.0 1171.1 748.0C1170.1 748.1 1168.7 747.5 1168.1 746.9C1167.5 746.4 1167.3 745.5 1167.4 744.5C1167.4 743.6 1167.8 742.0 1168.4 741.4C1169.0 740.7 1170.0 740.7 1171.0 740.7C1172.0 740.8 1173.8 740.9 1174.5 741.6C1175.1 742.3 1174.8 744.0 1174.7 744.8zM1174.8 744.6C1174.8 745.4 1174.6 746.1 1173.9 746.7C1173.2 747.4 1171.7 748.4 1170.9 748.4C1170.1 748.5 1169.5 747.8 1168.9 747.2C1168.3 746.5 1167.5 745.2 1167.4 744.4C1167.3 743.5 1167.7 742.7 1168.3 742.1C1168.9 741.5 1170.1 740.6 1171.1 740.6C1172.1 740.6 1173.7 741.3 1174.3 741.9C1175.0 742.6 1174.9 743.8 1174.8 744.6zM1041.6 720.2C1043.4 716.8 1047.5 705.6 1052.5 700.1C1057.4 694.6 1064.5 690.4 1071.4 687.3C1078.4 684.3 1087.3 681.4 1094.2 681.6C1101.1 681.8 1107.2 685.1 1112.7 688.5C1118.1 692.0 1124.5 699.9 1126.9 702.2M1039.1 722.4C1041.1 718.8 1046.2 706.5 1051.1 700.7C1056.0 695.0 1061.8 690.8 1068.6 688.0C1075.5 685.1 1084.4 683.4 1092.0 683.6C1099.6 683.8 1107.9 685.4 1114.2 689.1C1120.4 692.8 1127.0 702.9 1129.5 705.7M1039.4 723.0C1041.9 719.7 1049.6 709.1 1054.3 703.5C1059.1 698.0 1061.3 693.7 1067.8 689.8C1074.2 686.0 1085.9 679.9 1093.1 680.3C1100.2 680.7 1104.9 688.5 1110.8 692.2C1116.6 695.9 1125.2 700.8 1128.1 702.5M1039.7 719.4C1041.5 716.7 1046.0 709.0 1050.8 703.5C1055.7 698.0 1061.6 689.5 1068.9 686.3C1076.2 683.1 1087.4 683.4 1094.5 684.4C1101.6 685.3 1106.0 688.4 1111.6 691.9C1117.1 695.4 1125.1 703.0 1127.9 705.3M1045.1 726.4C1046.9 723.3 1051.9 713.4 1056.0 707.8C1060.2 702.3 1064.1 696.5 1070.2 693.3C1076.2 690.0 1085.6 687.8 1092.5 688.2C1099.4 688.7 1106.1 692.9 1111.3 695.8C1116.6 698.7 1121.9 703.8 1124.0 705.4M1043.2 723.2C1045.2 720.1 1050.1 710.0 1054.8 704.6C1059.5 699.2 1065.0 693.9 1071.3 691.0C1077.5 688.1 1085.6 686.4 1092.3 687.2C1099.1 688.0 1106.8 692.3 1111.7 695.7C1116.6 699.2 1120.1 705.8 1121.7 707.9M1044.2 725.0C1046.1 722.2 1051.1 713.3 1055.5 707.9C1060.0 702.4 1064.4 695.9 1070.9 692.1C1077.4 688.4 1087.4 685.0 1094.3 685.4C1101.2 685.9 1107.6 691.2 1112.2 694.8C1116.7 698.3 1120.2 704.9 1121.8 706.9M1140.5 706.1C1142.8 703.8 1148.4 696.2 1154.3 692.4C1160.3 688.5 1168.5 683.9 1176.2 682.8C1184.0 681.7 1194.1 682.3 1201.0 685.7C1207.8 689.0 1213.3 696.5 1217.5 702.7C1221.6 709.0 1224.6 719.8 1226.0 723.2M1138.8 703.7C1141.6 701.6 1149.4 694.8 1155.4 691.3C1161.3 687.7 1167.5 683.0 1174.7 682.5C1181.9 682.0 1191.2 685.3 1198.5 688.4C1205.7 691.5 1213.0 695.6 1218.0 701.0C1223.1 706.4 1226.8 717.5 1228.5 720.8M1139.5 702.6C1142.2 700.9 1149.0 695.4 1155.3 692.3C1161.5 689.3 1169.9 685.2 1177.0 684.4C1184.1 683.5 1191.6 684.1 1198.0 687.1C1204.4 690.2 1210.4 696.6 1215.3 702.5C1220.2 708.4 1225.5 719.4 1227.5 722.8M1137.1 705.0C1140.5 702.5 1151.1 693.9 1157.2 690.1C1163.4 686.2 1167.3 682.4 1173.8 681.8C1180.3 681.2 1188.8 683.0 1196.3 686.5C1203.7 689.9 1213.3 696.6 1218.5 702.6C1223.8 708.7 1226.1 719.4 1227.6 722.8M1145.6 706.9C1147.6 704.9 1152.2 697.9 1157.5 694.7C1162.7 691.5 1170.3 688.2 1177.0 687.6C1183.7 687.0 1191.7 688.1 1197.9 691.3C1204.1 694.4 1209.9 700.9 1214.4 706.2C1219.0 711.6 1223.5 720.3 1225.3 723.1M1142.5 704.5C1145.1 703.1 1152.4 698.9 1158.1 695.9C1163.8 693.0 1170.1 687.1 1176.8 686.7C1183.6 686.3 1192.3 690.5 1198.5 693.7C1204.7 696.8 1209.8 700.3 1214.0 705.4C1218.1 710.5 1221.8 721.3 1223.4 724.4M1143.1 706.1C1145.5 704.4 1152.4 699.1 1157.6 696.0C1162.8 692.9 1168.0 688.4 1174.3 687.5C1180.6 686.6 1188.4 687.7 1195.2 690.9C1202.0 694.1 1209.9 701.1 1215.0 706.7C1220.1 712.4 1224.1 721.6 1225.9 724.5M1071.9 689.5L1078.6 673.5L1084.9 689.8L1092.1 673.1L1096.2 703.1L1103.7 676.3L1105.0 690.3M1072.2 691.1L1077.3 673.3L1082.7 688.6L1092.9 673.4L1096.5 703.0L1103.4 678.3L1106.9 690.8M1162.8 688.7L1165.2 678.2L1172.6 704.9L1175.5 675.3L1185.5 688.6L1188.9 672.8L1196.2 688.7M1161.7 690.4L1164.0 678.6L1172.7 702.7L1175.8 674.3L1184.8 690.3L1189.2 673.2L1195.0 690.2M1042.1 721.1L1034.5 729.0L1044.7 727.2L1041.9 732.9L1051.1 726.0L1056.2 722.1M1041.3 721.5L1036.0 729.1L1043.8 726.0L1041.6 734.5L1051.9 725.2L1056.0 722.3M1227.6 720.7L1232.5 727.6L1224.9 726.7L1227.6 734.5L1215.1 725.6L1213.7 722.2M1227.0 720.7L1234.7 729.1L1225.6 727.6L1226.4 732.4L1216.5 725.5L1212.1 721.9M1114.5 633.3L1133.7 653.6L1153.4 634.1M1112.7 634.6L1134.2 653.1L1152.4 635.6M1114.0 633.3L1133.6 654.2L1154.5 634.9M1113.3 634.2C1112.7 639.0 1109.6 653.9 1109.7 662.7C1109.9 671.5 1111.2 679.5 1114.1 687.0C1116.9 694.4 1124.7 704.1 1126.9 707.5M1113.0 634.0C1112.5 638.7 1109.0 653.6 1109.6 662.2C1110.2 670.9 1113.9 678.4 1116.6 686.0C1119.4 693.5 1124.5 704.1 1126.1 707.7M1114.2 632.9C1113.7 637.9 1110.9 654.5 1111.0 663.2C1111.2 671.8 1112.7 677.2 1115.1 684.8C1117.6 692.5 1124.0 704.8 1125.8 708.8M1154.6 634.8C1154.9 639.5 1156.6 654.3 1156.3 662.9C1156.0 671.5 1155.3 678.6 1152.6 686.1C1149.9 693.7 1142.1 704.5 1140.0 708.1M1154.5 636.3C1154.6 640.6 1155.9 654.0 1155.3 662.2C1154.7 670.4 1153.8 678.1 1150.8 685.3C1147.8 692.6 1139.6 702.5 1137.3 705.9M1153.7 636.0C1154.0 640.8 1156.1 656.9 1156.0 665.1C1155.9 673.2 1155.9 678.0 1153.0 685.0C1150.2 692.0 1141.3 703.3 1139.0 707.0M1103.6 673.6C1105.4 676.9 1110.4 687.7 1114.4 693.5C1118.4 699.3 1125.5 706.0 1127.7 708.5M1105.0 672.1C1106.7 675.5 1111.0 686.4 1114.9 692.4C1118.8 698.5 1126.3 705.9 1128.5 708.6M1161.5 671.2C1159.8 674.8 1154.7 686.7 1151.1 692.9C1147.5 699.1 1141.6 705.8 1139.7 708.4M1163.1 671.2C1161.3 675.0 1156.5 687.6 1152.5 693.9C1148.5 700.1 1141.3 706.1 1139.0 708.6M1043.8 665.2C1048.3 664.4 1061.7 661.7 1070.5 660.7C1079.2 659.6 1087.8 657.3 1096.4 658.7C1105.1 660.0 1118.0 667.1 1122.3 668.8M1044.0 665.7C1048.1 664.4 1060.3 659.3 1068.9 658.1C1077.5 656.9 1087.1 656.8 1095.8 658.2C1104.5 659.7 1117.0 665.5 1121.2 666.9M1045.8 664.7C1049.9 663.7 1062.3 659.0 1070.4 658.3C1078.5 657.6 1085.9 658.8 1094.4 660.6C1102.9 662.5 1116.7 667.9 1121.2 669.4M1047.9 671.7C1052.0 670.3 1064.1 664.5 1072.2 663.5C1080.3 662.5 1088.4 664.3 1096.6 665.6C1104.7 667.0 1117.1 670.8 1121.2 671.8M1046.9 670.2C1051.4 669.1 1065.5 664.7 1074.0 663.6C1082.5 662.5 1090.4 662.5 1097.9 663.6C1105.5 664.7 1116.0 669.2 1119.6 670.3M1145.4 668.2C1149.5 666.9 1161.3 662.0 1169.8 660.4C1178.3 658.9 1188.0 658.2 1196.4 659.0C1204.8 659.9 1216.5 664.5 1220.5 665.5M1145.8 667.5C1149.8 666.1 1161.4 660.4 1169.9 659.3C1178.4 658.1 1188.1 659.1 1196.6 660.6C1205.0 662.0 1216.4 666.6 1220.4 667.8M1143.4 669.3C1148.0 667.4 1162.5 660.2 1171.5 658.4C1180.4 656.6 1188.8 657.5 1197.1 658.6C1205.3 659.8 1216.9 664.2 1220.8 665.3M1146.1 672.8C1150.2 671.6 1162.5 667.3 1170.5 665.6C1178.5 664.0 1185.9 662.5 1194.3 663.1C1202.7 663.7 1216.4 668.4 1220.9 669.5M1147.1 671.0C1151.0 669.7 1162.3 664.5 1170.5 663.3C1178.6 662.0 1188.1 662.2 1196.2 663.2C1204.3 664.2 1215.1 668.3 1218.9 669.3M1053.4 630.6C1051.3 637.5 1042.9 660.1 1040.6 672.1C1038.3 684.2 1039.2 694.2 1039.8 702.8C1040.3 711.3 1043.1 720.0 1043.7 723.4M1051.0 631.5C1049.6 638.1 1044.9 659.5 1042.5 671.3C1040.1 683.1 1036.5 693.4 1036.7 702.3C1036.9 711.2 1042.7 721.0 1043.9 724.7M1051.4 629.4C1049.8 636.7 1044.2 660.7 1042.2 673.1C1040.2 685.6 1039.4 695.8 1039.4 704.1C1039.4 712.4 1041.9 720.0 1042.4 723.2M1070.5 628.4C1069.4 634.0 1065.2 651.9 1063.5 662.0C1061.8 672.2 1060.0 680.9 1060.3 689.2C1060.7 697.6 1064.8 708.3 1065.7 712.1M1069.7 627.0C1068.7 633.1 1065.7 653.2 1064.2 663.6C1062.7 673.9 1060.7 680.9 1060.6 689.0C1060.4 697.1 1062.8 708.2 1063.3 712.0M1069.2 627.5C1068.0 633.6 1064.2 653.6 1062.2 664.0C1060.3 674.4 1057.0 682.1 1057.4 689.9C1057.7 697.7 1063.1 707.4 1064.2 710.8M1068.7 629.3C1069.0 633.7 1070.7 648.6 1070.5 655.9C1070.3 663.1 1068.0 670.1 1067.5 672.9M1069.4 629.4C1069.2 633.8 1068.6 648.7 1068.5 655.9C1068.5 663.1 1069.0 669.6 1069.1 672.4M1059.2 689.9L1068.0 670.9L1076.4 694.2L1079.2 671.1L1082.9 690.8M1057.7 688.6L1068.6 671.4L1073.4 695.4L1080.4 672.5L1084.3 688.6M1198.5 627.8C1199.7 633.5 1203.6 651.9 1205.9 662.3C1208.3 672.6 1211.2 683.4 1212.8 689.8C1214.4 696.2 1215.1 698.9 1215.5 700.7M1196.8 625.7C1198.6 632.2 1205.5 654.2 1207.9 665.0C1210.4 675.7 1210.0 684.1 1211.6 690.1C1213.1 696.1 1216.3 699.0 1217.2 700.8M1198.3 628.6C1199.8 634.4 1204.6 653.1 1207.2 663.4C1209.8 673.6 1212.6 683.2 1214.1 689.9C1215.6 696.7 1215.6 701.4 1216.0 703.7M1215.6 628.1C1216.7 634.0 1220.5 651.0 1222.4 663.0C1224.2 675.1 1225.9 689.8 1226.6 700.3C1227.2 710.9 1226.2 721.9 1226.2 726.3M1215.7 630.0C1216.7 635.6 1219.6 652.0 1221.7 663.7C1223.8 675.4 1228.1 690.0 1228.5 700.2C1228.9 710.3 1224.9 720.4 1224.1 724.5M1215.1 628.2C1216.5 633.9 1221.5 650.3 1223.4 662.1C1225.3 673.8 1226.6 688.4 1226.6 698.6C1226.5 708.8 1223.9 719.3 1223.3 723.4M1198.4 627.7C1198.8 632.3 1200.1 647.7 1200.9 655.3C1201.7 662.9 1202.8 670.4 1203.2 673.4M1198.1 625.8C1198.5 630.5 1199.3 646.6 1200.1 654.3C1200.9 662.0 1202.4 668.9 1202.8 671.8M1202.5 673.7L1206.2 692.5L1211.2 677.4L1217.8 701.4M1201.8 672.8L1204.7 693.6L1212.5 677.7L1215.6 702.0M1000.0 618.2C997.0 622.5 985.3 635.3 982.2 644.3C979.0 653.2 980.0 663.1 981.3 671.9C982.6 680.7 986.1 688.4 990.0 697.2C993.9 706.1 1000.4 718.0 1004.7 725.0C1008.9 732.0 1013.8 736.9 1015.6 739.3M1000.2 620.8C997.3 625.2 985.6 638.7 982.6 647.3C979.6 655.9 980.7 664.1 982.2 672.6C983.7 681.1 987.8 689.9 991.7 698.4C995.6 706.9 1002.4 716.7 1005.8 723.4C1009.3 730.1 1011.3 736.2 1012.3 738.8M999.2 620.4C996.3 624.6 984.1 637.0 981.6 645.4C979.1 653.8 982.6 662.2 984.3 671.0C985.9 679.9 987.8 689.1 991.4 698.5C995.0 707.9 1002.1 720.4 1005.7 727.3C1009.3 734.2 1011.6 738.0 1012.7 740.2M1014.3 740.6C1015.0 748.1 1017.3 772.4 1018.7 785.6C1020.1 798.9 1019.4 808.8 1022.7 820.4C1025.9 831.9 1035.1 848.8 1038.0 854.8C1041.0 860.8 1039.9 856.2 1040.3 856.4M1017.2 743.1C1017.0 750.1 1014.9 772.2 1016.0 785.3C1017.1 798.3 1020.0 809.8 1023.7 821.4C1027.5 833.1 1035.5 849.2 1038.7 855.2C1041.9 861.3 1042.2 857.1 1042.9 857.5M1016.4 743.1C1016.7 750.2 1016.8 772.7 1018.3 785.8C1019.7 798.8 1021.7 810.4 1025.3 821.6C1028.9 832.7 1036.8 846.9 1039.8 852.6C1042.7 858.3 1042.5 855.1 1043.1 855.6M1042.7 857.8C1042.0 851.9 1039.5 834.5 1038.2 822.5C1037.0 810.4 1035.7 798.7 1035.0 785.6C1034.3 772.4 1034.2 750.6 1034.1 743.6M1042.1 857.0C1041.5 850.9 1039.2 832.6 1038.1 820.6C1037.0 808.6 1036.5 798.1 1035.6 785.1C1034.7 772.1 1033.1 749.5 1032.6 742.4M1041.3 856.8C1041.0 851.0 1040.4 833.9 1039.3 822.1C1038.2 810.2 1036.0 799.1 1034.8 785.7C1033.5 772.2 1032.3 748.9 1031.9 741.5M1015.8 672.7L1014.1 688.1L1022.6 685.6L1018.7 705.2L1029.7 697.3L1027.5 719.5L1039.7 722.9M1017.6 672.4L1015.6 691.0L1021.0 688.4L1017.4 703.9L1028.6 698.1L1027.2 718.2L1041.1 726.6M1018.0 672.5L1012.1 689.3L1020.4 686.6L1017.6 705.4L1029.7 698.5L1027.5 718.3L1043.8 724.1M1043.6 795.4C1046.0 799.3 1052.3 811.3 1058.3 818.6C1064.4 825.8 1076.1 835.7 1079.7 839.1M1043.5 793.6C1046.3 797.9 1054.3 811.9 1060.2 819.5C1066.2 827.2 1076.1 836.2 1079.2 839.5M1035.8 790.9C1037.8 795.8 1042.5 810.9 1047.8 820.2C1053.2 829.6 1064.6 842.5 1068.0 847.0M1033.9 790.3C1036.5 795.4 1043.5 811.4 1049.1 821.1C1054.7 830.7 1064.5 843.7 1067.5 848.3M1268.6 617.6C1270.8 622.6 1279.7 638.4 1282.2 647.7C1284.7 657.0 1284.9 665.1 1283.4 673.4C1281.9 681.7 1276.7 688.9 1273.1 697.5C1269.5 706.2 1265.0 718.6 1261.8 725.2C1258.6 731.8 1255.2 735.1 1253.9 737.1M1267.8 620.3C1270.1 624.7 1278.7 637.8 1281.5 647.0C1284.3 656.1 1285.5 666.5 1284.6 675.0C1283.7 683.5 1280.5 690.1 1276.1 698.1C1271.7 706.1 1261.6 716.5 1258.0 723.0C1254.4 729.4 1255.0 734.4 1254.4 736.7M1265.7 618.3C1268.6 623.2 1279.6 638.6 1282.8 647.9C1286.0 657.2 1286.6 666.0 1285.0 674.0C1283.5 682.0 1277.3 687.7 1273.4 696.0C1269.5 704.3 1264.6 716.8 1261.4 723.8C1258.2 730.8 1255.3 735.6 1254.1 738.0M1250.0 741.4C1249.7 749.0 1249.5 774.2 1248.0 787.3C1246.5 800.5 1244.9 809.5 1241.1 820.2C1237.2 831.0 1227.6 846.5 1224.9 851.8M1249.6 743.6C1249.7 751.0 1251.3 774.6 1249.8 787.6C1248.3 800.5 1244.8 810.7 1240.6 821.2C1236.3 831.7 1226.9 845.7 1224.1 850.5M1252.8 743.5C1252.2 750.8 1250.6 774.6 1248.8 787.3C1247.0 800.1 1245.8 809.0 1241.9 820.1C1238.0 831.2 1228.2 848.3 1225.4 853.9M1225.1 853.9C1225.2 848.3 1224.6 831.9 1225.9 820.4C1227.2 808.9 1231.6 797.6 1232.9 784.8C1234.1 772.0 1233.1 750.5 1233.1 743.6M1225.0 853.3C1225.2 847.7 1224.8 831.0 1225.9 819.6C1227.0 808.2 1229.9 797.7 1231.5 784.7C1233.1 771.7 1234.9 748.7 1235.5 741.4M1225.3 850.8C1225.6 845.7 1225.9 831.5 1226.9 820.4C1228.0 809.3 1230.8 797.1 1231.7 784.3C1232.6 771.4 1232.3 750.2 1232.4 743.4M1240.3 636.7C1240.8 642.5 1241.9 661.6 1243.3 671.7C1244.7 681.8 1247.9 689.5 1248.7 697.1C1249.5 704.7 1248.3 713.9 1248.3 717.3M1239.7 638.1C1240.2 643.7 1241.2 661.8 1243.0 671.7C1244.8 681.5 1249.8 689.5 1250.6 697.4C1251.3 705.3 1248.1 715.3 1247.6 718.8M1245.2 702.7L1242.1 718.5L1233.4 715.7L1229.4 726.2L1223.3 722.2M1244.1 702.6L1243.2 717.0L1235.1 714.6L1229.9 724.0L1223.7 722.1M1224.3 793.6C1221.5 797.9 1213.7 811.6 1207.6 819.2C1201.6 826.7 1191.1 835.7 1187.8 839.0M1223.0 795.0C1220.5 798.9 1213.6 811.5 1207.8 818.5C1202.0 825.6 1191.4 834.1 1188.1 837.2M1233.0 792.0C1230.4 796.9 1223.5 812.0 1217.6 821.2C1211.8 830.4 1201.1 842.8 1197.9 847.1M1233.4 791.1C1230.8 795.9 1223.4 810.5 1217.6 819.6C1211.7 828.8 1201.6 841.8 1198.4 846.3M1010.1 678.8L1008.3 692.8L1019.4 691.3L1017.6 709.2L1022.4 700.9L1021.8 722.2L1035.6 717.0L1037.8 732.6M1013.1 676.3L1011.3 692.6L1018.0 688.2L1013.5 709.5L1025.5 703.2L1021.9 718.9L1033.0 716.2L1037.2 731.1M1009.6 676.6L1010.2 691.7L1019.1 690.2L1016.7 706.0L1023.9 703.0L1023.5 718.7L1036.5 719.2L1037.1 729.3M1022.3 693.8C1022.3 696.4 1020.9 704.4 1022.4 709.7C1023.9 715.1 1028.1 722.0 1031.4 726.0C1034.7 729.9 1040.5 732.2 1042.3 733.5M1021.8 691.6C1022.4 694.7 1023.1 704.6 1025.1 710.3C1027.1 716.1 1031.1 722.9 1034.0 726.1C1037.0 729.4 1041.2 729.4 1042.6 730.0M1022.7 693.0C1023.2 696.1 1024.2 706.1 1026.1 711.6C1028.0 717.1 1031.0 722.8 1034.0 726.1C1037.0 729.5 1042.4 730.6 1044.0 731.5M1034.9 708.0C1036.0 709.7 1038.3 715.5 1041.5 717.8C1044.6 720.1 1051.0 721.9 1053.8 721.6C1056.6 721.4 1057.6 717.0 1058.4 716.1M1037.2 708.4C1037.9 710.0 1038.1 715.4 1040.9 717.9C1043.6 720.5 1051.1 723.7 1053.9 723.5C1056.7 723.3 1057.0 718.0 1057.6 716.9M1034.9 706.8C1036.0 708.4 1038.6 714.2 1041.4 716.7C1044.2 719.2 1048.7 721.4 1051.5 721.7C1054.3 722.0 1057.1 718.9 1058.2 718.4M1040.9 732.7L1052.3 724.6L1057.1 731.3L1063.8 719.0M1040.6 733.7L1051.7 725.7L1055.9 732.6L1063.4 718.3M1255.3 677.4L1258.8 695.1L1248.4 688.7L1251.4 705.8L1241.1 700.9L1241.8 722.3L1232.7 715.7L1228.5 731.6M1254.0 675.9L1255.1 690.8L1253.0 691.2L1250.0 708.4L1245.9 702.4L1241.4 721.2L1232.6 716.1L1229.7 729.2M1256.9 678.4L1258.0 695.6L1251.2 688.5L1250.8 705.4L1240.9 703.5L1245.2 720.2L1231.3 718.5L1231.2 734.0M1245.5 694.5C1245.4 697.4 1246.7 707.0 1244.8 711.8C1242.9 716.6 1237.1 720.2 1233.9 723.4C1230.7 726.6 1227.0 729.7 1225.6 731.0M1246.3 693.5C1245.8 696.7 1245.0 707.3 1242.9 712.2C1240.7 717.1 1236.6 719.5 1233.6 722.8C1230.5 726.2 1226.0 730.7 1224.5 732.3M1248.2 694.2C1247.7 697.3 1247.4 707.6 1245.1 712.7C1242.8 717.7 1238.4 721.7 1234.6 724.8C1230.9 727.8 1224.7 729.9 1222.8 730.9M1231.5 705.8C1230.7 707.6 1229.3 713.4 1226.6 716.5C1223.9 719.7 1218.2 724.8 1215.3 724.7C1212.3 724.7 1209.8 717.5 1208.7 716.1M1231.0 706.2C1230.3 707.8 1229.1 712.9 1226.8 716.0C1224.4 719.0 1219.3 724.1 1216.7 724.3C1214.1 724.6 1212.2 718.6 1211.3 717.5M1230.4 707.9C1229.7 709.5 1228.6 715.0 1226.0 717.5C1223.4 720.0 1217.4 722.5 1214.9 722.8C1212.3 723.0 1211.5 719.6 1210.8 719.0M1029.0 741.2C1029.2 747.1 1028.8 766.7 1029.8 777.0C1030.7 787.2 1033.1 794.3 1035.0 802.8C1036.8 811.4 1039.8 824.0 1040.8 828.2M1027.2 742.1C1028.0 748.1 1030.4 768.0 1031.9 778.4C1033.3 788.9 1034.0 796.2 1035.9 804.8C1037.8 813.4 1042.0 825.7 1043.2 829.9M1240.9 740.8C1240.4 746.9 1239.3 767.0 1237.8 777.5C1236.4 787.9 1234.0 794.9 1232.3 803.5C1230.5 812.2 1228.2 825.1 1227.4 829.5M1240.4 741.6C1239.8 747.7 1238.3 768.2 1236.8 778.3C1235.3 788.5 1233.2 793.8 1231.4 802.3C1229.7 810.8 1227.3 824.8 1226.5 829.4M1050.9 631.0C1051.6 635.0 1055.1 647.4 1055.3 655.2C1055.5 663.0 1052.5 674.0 1052.0 677.7M1052.4 630.2C1052.8 634.1 1054.3 646.0 1054.5 653.9C1054.7 661.9 1053.6 673.8 1053.4 677.8M1213.4 629.9C1212.9 633.8 1210.1 645.8 1210.3 653.6C1210.5 661.5 1214.0 673.0 1214.7 676.8M1214.6 628.9C1213.8 633.3 1210.4 647.0 1210.2 655.1C1210.0 663.3 1212.9 673.9 1213.4 677.7M1083.8 689.0L1087.8 701.2L1093.1 689.7M1083.8 690.3L1088.5 701.3L1094.3 689.4M1173.6 689.7L1179.4 701.4L1185.9 690.0M1175.0 688.2L1180.3 701.1L1184.4 689.6" stroke="#241c7c" stroke-width="1.3" opacity=".92"/><path d="M1117.7 794.6C1120.5 795.3 1128.2 799.1 1134.3 799.0C1140.4 798.8 1151.0 794.6 1154.4 793.7M1048.4 744.3C1048.7 746.6 1048.7 754.8 1050.5 757.9C1052.3 761.1 1053.7 761.8 1059.2 763.2C1064.7 764.6 1075.5 766.3 1083.6 766.3C1091.8 766.3 1102.4 764.9 1108.1 763.2C1113.8 761.5 1115.8 759.7 1117.7 756.2C1119.6 752.7 1119.1 744.5 1119.4 742.2M1054.3 744.8C1054.6 746.6 1054.7 753.0 1056.1 755.3C1057.5 757.6 1058.1 757.8 1062.7 758.8C1067.3 759.8 1076.4 761.4 1083.6 761.4C1090.9 761.4 1101.4 760.1 1106.3 758.8C1111.3 757.5 1111.9 756.2 1113.3 753.6C1114.7 750.9 1114.5 744.8 1114.7 743.1M1048.4 744.3C1049.0 744.0 1051.1 742.2 1052.2 742.2C1053.4 742.2 1054.8 744.0 1055.4 744.3M1114.2 743.1L1119.4 741.9M1119.4 744.8C1120.7 745.0 1124.8 745.9 1127.3 746.1C1129.8 746.2 1131.8 745.8 1134.3 745.7C1136.8 745.7 1139.8 745.9 1142.1 745.7C1144.5 745.5 1147.2 744.5 1148.2 744.3M1122.1 750.6C1124.1 750.7 1130.2 751.0 1134.3 750.9C1138.4 750.9 1144.5 750.2 1146.5 750.1M1119.4 744.8L1122.1 750.9M1148.2 744.3L1146.5 750.1M1148.2 742.2C1148.6 744.5 1148.3 752.5 1150.3 756.2C1152.4 759.8 1155.0 762.3 1160.5 764.0C1165.9 765.8 1175.3 766.7 1183.2 766.7C1191.0 766.6 1202.1 765.0 1207.6 763.5C1213.1 762.1 1214.4 761.1 1216.3 757.9C1218.2 754.7 1218.5 746.6 1219.0 744.3M1153.1 743.1C1153.4 744.8 1153.4 750.9 1154.9 753.6C1156.4 756.3 1157.5 758.0 1162.2 759.3C1166.9 760.7 1175.9 761.9 1183.2 761.8C1190.4 761.7 1201.1 759.9 1205.9 758.8C1210.7 757.7 1210.8 757.6 1212.0 755.3C1213.2 753.0 1213.0 746.6 1213.2 744.8M1213.2 744.8C1213.7 744.5 1215.4 742.7 1216.3 742.6C1217.3 742.5 1218.5 744.0 1219.0 744.3M1111.2 726.9C1111.2 730.1 1110.8 733.5 1110.0 736.6C1109.2 739.6 1107.9 742.7 1106.4 745.1C1104.9 747.6 1103.0 749.9 1100.9 751.5C1098.9 753.1 1096.5 754.3 1094.2 754.9C1091.9 755.4 1089.4 755.4 1087.1 754.9C1084.7 754.3 1082.4 753.1 1080.3 751.5C1078.3 749.9 1076.4 747.6 1074.8 745.1C1073.3 742.7 1072.1 739.6 1071.3 736.6C1070.5 733.5 1070.0 730.1 1070.0 726.9C1070.0 723.6 1070.5 720.2 1071.3 717.1C1072.1 714.1 1073.3 711.0 1074.8 708.6C1076.4 706.1 1078.3 703.8 1080.3 702.2C1082.4 700.6 1084.7 699.4 1087.1 698.8C1089.4 698.3 1091.9 698.3 1094.2 698.8C1096.5 699.4 1098.9 700.6 1100.9 702.2C1103.0 703.8 1104.9 706.1 1106.4 708.6C1107.9 711.0 1109.2 714.1 1110.0 717.1C1110.8 720.2 1111.2 723.6 1111.2 726.9zM1097.7 729.2C1097.4 731.5 1096.7 734.0 1095.9 736.0C1095.0 737.9 1093.9 739.7 1092.8 740.7C1091.6 741.7 1090.3 742.2 1089.2 742.1C1088.1 741.9 1087.0 741.1 1086.2 739.8C1085.4 738.5 1084.8 736.4 1084.5 734.4C1084.2 732.3 1084.3 729.6 1084.6 727.3C1084.9 725.0 1085.6 722.5 1086.4 720.5C1087.3 718.6 1088.4 716.8 1089.6 715.8C1090.7 714.8 1092.0 714.3 1093.1 714.4C1094.2 714.6 1095.3 715.4 1096.1 716.7C1096.9 718.0 1097.5 720.1 1097.8 722.1C1098.1 724.2 1098.0 726.9 1097.7 729.2zM1086.3 709.0C1086.3 710.2 1085.8 711.7 1085.1 712.6C1084.4 713.6 1083.2 714.5 1082.0 714.9C1080.9 715.2 1079.4 715.2 1078.3 714.9C1077.1 714.5 1075.9 713.6 1075.2 712.6C1074.5 711.7 1074.0 710.2 1074.0 709.0C1074.0 707.8 1074.5 706.4 1075.2 705.5C1075.9 704.5 1077.1 703.6 1078.3 703.2C1079.4 702.9 1080.9 702.9 1082.0 703.2C1083.2 703.6 1084.4 704.5 1085.1 705.5C1085.8 706.4 1086.3 707.8 1086.3 709.0zM1104.6 737.3C1104.6 737.9 1104.3 738.7 1103.8 739.2C1103.4 739.6 1102.6 739.9 1102.0 739.9C1101.4 739.9 1100.6 739.6 1100.1 739.2C1099.7 738.7 1099.4 737.9 1099.4 737.3C1099.4 736.7 1099.7 735.9 1100.1 735.5C1100.6 735.0 1101.4 734.7 1102.0 734.7C1102.6 734.7 1103.4 735.0 1103.8 735.5C1104.3 735.9 1104.6 736.7 1104.6 737.3zM1101.1 744.3C1101.1 745.2 1100.6 746.4 1100.0 747.0C1099.3 747.7 1098.2 748.2 1097.3 748.2C1096.4 748.2 1095.2 747.7 1094.5 747.0C1093.9 746.4 1093.4 745.2 1093.4 744.3C1093.4 743.4 1093.9 742.2 1094.5 741.6C1095.2 741.0 1096.4 740.5 1097.3 740.5C1098.2 740.5 1099.3 741.0 1100.0 741.6C1100.6 742.2 1101.1 743.4 1101.1 744.3zM1198.5 726.9C1198.5 730.1 1198.1 733.5 1197.3 736.6C1196.5 739.6 1195.2 742.7 1193.7 745.1C1192.2 747.6 1190.3 749.9 1188.2 751.5C1186.2 753.1 1183.8 754.3 1181.5 754.9C1179.2 755.4 1176.7 755.4 1174.3 754.9C1172.0 754.3 1169.7 753.1 1167.6 751.5C1165.6 749.9 1163.7 747.6 1162.1 745.1C1160.6 742.7 1159.4 739.6 1158.6 736.6C1157.8 733.5 1157.3 730.1 1157.3 726.9C1157.3 723.6 1157.8 720.2 1158.6 717.1C1159.4 714.1 1160.6 711.0 1162.1 708.6C1163.7 706.1 1165.6 703.8 1167.6 702.2C1169.7 700.6 1172.0 699.4 1174.3 698.8C1176.7 698.3 1179.2 698.3 1181.5 698.8C1183.8 699.4 1186.2 700.6 1188.2 702.2C1190.3 703.8 1192.2 706.1 1193.7 708.6C1195.2 711.0 1196.5 714.1 1197.3 717.1C1198.1 720.2 1198.5 723.6 1198.5 726.9zM1184.0 727.3C1184.3 729.6 1184.3 732.3 1184.1 734.4C1183.8 736.4 1183.2 738.5 1182.4 739.8C1181.6 741.1 1180.4 741.9 1179.3 742.1C1178.3 742.2 1176.9 741.7 1175.8 740.7C1174.7 739.7 1173.5 737.9 1172.7 736.0C1171.9 734.0 1171.2 731.5 1170.8 729.2C1170.5 726.9 1170.5 724.2 1170.7 722.1C1171.0 720.1 1171.6 718.0 1172.4 716.7C1173.2 715.4 1174.4 714.6 1175.5 714.4C1176.6 714.3 1177.9 714.8 1179.0 715.8C1180.1 716.8 1181.3 718.6 1182.1 720.5C1182.9 722.5 1183.6 725.0 1184.0 727.3zM1194.5 709.0C1194.5 710.2 1194.0 711.7 1193.3 712.6C1192.6 713.6 1191.4 714.5 1190.3 714.9C1189.2 715.2 1187.7 715.2 1186.5 714.9C1185.4 714.5 1184.2 713.6 1183.5 712.6C1182.8 711.7 1182.3 710.2 1182.3 709.0C1182.3 707.8 1182.8 706.4 1183.5 705.5C1184.2 704.5 1185.4 703.6 1186.5 703.2C1187.7 702.9 1189.2 702.9 1190.3 703.2C1191.4 703.6 1192.6 704.5 1193.3 705.5C1194.0 706.4 1194.5 707.8 1194.5 709.0zM1169.2 737.3C1169.2 737.9 1168.9 738.7 1168.4 739.2C1168.0 739.6 1167.2 739.9 1166.6 739.9C1166.0 739.9 1165.2 739.6 1164.7 739.2C1164.3 738.7 1164.0 737.9 1164.0 737.3C1164.0 736.7 1164.3 735.9 1164.7 735.5C1165.2 735.0 1166.0 734.7 1166.6 734.7C1167.2 734.7 1168.0 735.0 1168.4 735.5C1168.9 735.9 1169.2 736.7 1169.2 737.3zM1175.1 744.3C1175.1 745.2 1174.6 746.4 1174.0 747.0C1173.4 747.7 1172.2 748.2 1171.3 748.2C1170.4 748.2 1169.2 747.7 1168.6 747.0C1167.9 746.4 1167.5 745.2 1167.5 744.3C1167.5 743.4 1167.9 742.2 1168.6 741.6C1169.2 741.0 1170.4 740.5 1171.3 740.5C1172.2 740.5 1173.4 741.0 1174.0 741.6C1174.6 742.2 1175.1 743.4 1175.1 744.3zM1041.7 721.3C1043.5 718.1 1047.6 707.6 1052.2 702.1C1056.9 696.5 1063.0 691.3 1069.7 688.1C1076.4 684.9 1085.1 682.6 1092.4 682.9C1099.6 683.1 1107.5 686.3 1113.3 689.8C1119.1 693.3 1125.0 701.5 1127.3 703.8M1044.4 724.8C1046.1 721.7 1050.3 711.8 1054.8 706.4C1059.3 701.0 1065.2 695.7 1071.4 692.5C1077.7 689.3 1085.7 686.9 1092.4 687.2C1099.1 687.5 1106.3 691.0 1111.6 694.2C1116.8 697.4 1121.8 704.4 1123.8 706.4M1139.5 703.8C1142.1 701.5 1149.1 693.3 1155.2 689.8C1161.3 686.3 1168.9 683.1 1176.2 682.9C1183.5 682.6 1192.2 684.9 1198.9 688.1C1205.6 691.3 1211.7 696.5 1216.3 702.1C1221.0 707.6 1225.1 718.1 1226.8 721.3M1143.9 706.4C1146.1 704.4 1151.6 697.4 1157.0 694.2C1162.4 691.0 1169.5 687.5 1176.2 687.2C1182.9 686.9 1190.9 689.3 1197.1 692.5C1203.4 695.7 1209.2 701.0 1213.7 706.4C1218.2 711.8 1222.4 721.7 1224.2 724.8M1073.2 689.8L1078.4 672.4L1083.6 689.8L1092.4 674.1L1095.9 703.8L1104.6 677.6L1106.3 689.8M1162.2 689.8L1164.8 677.6L1172.7 703.8L1176.2 674.1L1184.9 689.8L1190.1 672.4L1195.4 689.8M1041.7 721.3L1034.8 728.2L1043.5 726.5L1041.7 733.5L1052.2 724.8L1055.7 721.3M1226.8 721.3L1233.8 728.2L1225.1 726.5L1226.8 733.5L1216.3 724.8L1212.8 721.3M1113.3 634.0L1133.4 653.2L1153.5 634.8M1113.3 634.0C1112.9 638.9 1110.4 654.9 1110.7 663.6C1111.0 672.4 1112.3 679.1 1115.1 686.3C1117.8 693.6 1125.3 703.8 1127.3 707.3M1153.5 634.8C1153.9 639.6 1156.4 655.1 1156.1 663.6C1155.8 672.2 1154.6 679.1 1151.7 686.3C1148.8 693.6 1140.8 703.8 1138.6 707.3M1104.6 672.4C1106.3 675.9 1111.3 687.5 1115.1 693.3C1118.9 699.2 1125.3 705.0 1127.3 707.3M1162.2 672.4C1160.5 675.9 1155.7 687.5 1151.7 693.3C1147.8 699.2 1140.8 705.0 1138.6 707.3M1045.2 666.3C1049.3 665.1 1061.2 660.4 1069.7 659.3C1078.1 658.1 1087.1 657.8 1095.9 659.3C1104.6 660.7 1117.7 666.6 1122.1 668.0M1047.0 670.6C1051.3 669.5 1064.7 664.7 1073.2 663.6C1081.6 662.6 1089.8 663.2 1097.6 664.5C1105.5 665.8 1116.5 670.3 1120.3 671.5M1144.8 668.0C1149.1 666.6 1162.2 660.7 1170.9 659.3C1179.7 657.8 1188.7 658.1 1197.1 659.3C1205.6 660.4 1217.5 665.1 1221.6 666.3M1146.5 671.5C1150.3 670.3 1161.0 665.8 1169.2 664.5C1177.3 663.2 1186.9 662.6 1195.4 663.6C1203.8 664.7 1215.8 669.5 1219.8 670.6M1052.2 630.5C1050.5 637.5 1044.1 660.2 1041.7 672.4C1039.4 684.6 1038.0 695.1 1038.2 703.8C1038.5 712.5 1042.6 721.3 1043.5 724.8M1069.7 628.7C1068.5 634.5 1064.4 653.5 1062.7 663.6C1060.9 673.8 1058.9 682.0 1059.2 689.8C1059.5 697.7 1063.6 707.3 1064.4 710.8M1069.7 628.7C1069.7 633.1 1070.0 647.6 1069.7 654.9C1069.4 662.2 1068.2 669.5 1067.9 672.4M1059.2 689.8L1067.9 672.4L1074.9 695.1L1080.2 672.4L1083.6 689.8M1197.1 627.0C1198.9 633.1 1205.0 653.2 1207.6 663.6C1210.2 674.1 1211.4 683.4 1212.8 689.8C1214.3 696.2 1215.8 700.0 1216.3 702.1M1214.6 628.7C1216.0 634.5 1221.3 652.0 1223.3 663.6C1225.4 675.3 1226.5 688.4 1226.8 698.6C1227.1 708.8 1225.4 720.4 1225.1 724.8M1197.1 627.0C1197.6 631.6 1198.9 647.4 1199.8 654.9C1200.6 662.5 1201.9 669.5 1202.4 672.4M1202.4 672.4L1205.9 693.3L1211.1 677.6L1216.3 702.1M999.8 620.0C997.2 624.4 987.0 637.5 984.1 646.2C981.2 654.9 981.2 663.6 982.4 672.4C983.5 681.1 987.0 689.8 991.1 698.6C995.2 707.3 1003.0 718.1 1006.8 724.8C1010.6 731.5 1012.6 736.4 1013.8 738.7M1015.6 742.2C1015.8 749.5 1015.8 772.8 1017.3 785.9C1018.8 799.0 1020.8 809.4 1024.3 820.8C1027.8 832.1 1035.3 847.8 1038.2 854.0C1041.2 860.1 1041.2 856.9 1041.7 857.5M1041.7 857.5C1041.2 851.3 1039.4 832.7 1038.2 820.8C1037.1 808.9 1035.6 799.0 1034.8 785.9C1033.9 772.8 1033.3 749.5 1033.0 742.2M1017.3 672.4L1013.8 689.8L1020.8 686.3L1017.3 703.8L1027.8 698.6L1027.8 717.8L1041.7 724.8M1043.5 794.6C1046.1 798.7 1053.4 811.8 1059.2 819.0C1065.0 826.3 1075.2 835.0 1078.4 838.2M1034.8 791.1C1037.1 796.1 1043.2 811.5 1048.7 820.8C1054.3 830.1 1064.7 842.6 1067.9 847.0M1267.8 620.0C1270.3 624.4 1279.9 637.5 1282.7 646.2C1285.4 654.9 1285.6 663.6 1284.4 672.4C1283.3 681.1 1279.8 689.8 1275.7 698.6C1271.6 707.3 1263.8 718.1 1260.0 724.8C1256.2 731.5 1254.2 736.4 1253.0 738.7M1251.3 742.2C1251.0 749.5 1251.3 772.8 1249.5 785.9C1247.8 799.0 1244.9 809.7 1240.8 820.8C1236.7 831.8 1227.7 847.0 1225.1 852.2M1225.1 852.2C1225.4 847.0 1225.6 831.8 1226.8 820.8C1228.0 809.7 1230.9 799.0 1232.1 785.9C1233.2 772.8 1233.5 749.5 1233.8 742.2M1240.8 637.5C1241.4 643.3 1242.8 662.2 1244.3 672.4C1245.7 682.6 1248.9 691.0 1249.5 698.6C1250.1 706.1 1248.1 714.6 1247.8 717.8M1244.3 703.8L1242.5 717.8L1233.8 714.3L1230.3 724.8L1223.3 723.0M1223.3 794.6C1220.7 798.7 1213.4 811.8 1207.6 819.0C1201.8 826.3 1191.6 835.0 1188.4 838.2M1233.8 791.1C1231.2 796.1 1223.9 811.5 1218.1 820.8C1212.3 830.1 1202.1 842.6 1198.9 847.0M1012.1 677.6L1009.4 693.3L1017.3 689.8L1015.6 707.3L1024.3 702.1L1024.3 721.3L1034.8 717.8L1038.2 731.7M1020.8 693.3C1021.4 696.2 1022.2 705.6 1024.3 710.8C1026.3 716.0 1029.8 721.3 1033.0 724.8C1036.2 728.2 1041.7 730.6 1043.5 731.7M1036.5 707.3C1037.4 709.0 1039.1 715.2 1041.7 717.8C1044.4 720.4 1049.6 723.0 1052.2 723.0C1054.8 723.0 1056.6 718.6 1057.5 717.8M1041.7 733.5L1052.2 724.8L1055.7 731.7L1064.4 717.8M1254.7 677.6L1257.4 693.3L1250.4 689.8L1252.1 707.3L1243.4 702.1L1243.4 721.3L1232.9 717.8L1229.4 731.7M1246.9 693.3C1246.3 696.2 1245.4 705.6 1243.4 710.8C1241.4 716.0 1237.9 721.3 1234.7 724.8C1231.5 728.2 1225.9 730.6 1224.2 731.7M1231.2 707.3C1230.3 709.0 1228.6 715.2 1225.9 717.8C1223.3 720.4 1218.1 723.0 1215.5 723.0C1212.8 723.0 1211.1 718.6 1210.2 717.8M1027.8 742.2C1028.2 748.0 1029.2 767.0 1030.4 777.1C1031.6 787.3 1032.9 794.6 1034.8 803.3C1036.6 812.1 1040.6 825.2 1041.7 829.5M1239.9 742.2C1239.5 748.0 1238.5 767.0 1237.3 777.1C1236.1 787.3 1234.8 794.6 1232.9 803.3C1231.0 812.1 1227.1 825.2 1225.9 829.5M1052.2 630.5C1052.8 634.5 1055.7 647.1 1055.7 654.9C1055.7 662.8 1052.8 673.8 1052.2 677.6M1214.6 628.7C1214.0 633.1 1211.1 646.8 1211.1 654.9C1211.1 663.1 1214.0 673.8 1214.6 677.6M1083.6 689.8L1088.0 702.1L1093.2 689.0M1174.4 689.0L1179.7 702.1L1184.9 689.8" stroke="#241c7c" stroke-width="2.05"/><path d="" stroke="#000" stroke-width="1.2"/><path d="M1133.9 539.0C1123.5 539.1 1109.1 540.4 1097.6 543.2C1086.1 546.0 1074.7 549.9 1064.8 555.7C1054.9 561.6 1045.9 570.0 1038.2 578.1C1030.6 586.2 1024.0 595.6 1019.0 604.3C1014.0 613.0 1010.7 621.2 1008.2 630.5C1005.7 639.8 1004.3 650.3 1004.2 660.2C1004.1 670.1 1005.5 679.1 1007.7 689.8C1009.9 700.6 1013.4 713.1 1017.3 724.8C1021.2 736.4 1026.9 749.5 1031.3 759.7C1035.6 769.9 1038.2 778.3 1043.5 785.9C1048.7 793.4 1055.4 799.8 1062.7 805.1C1070.0 810.3 1079.3 814.2 1087.1 817.3C1095.0 820.3 1102.0 822.2 1109.8 823.4C1117.6 824.6 1126.1 824.6 1133.9 824.6C1141.8 824.6 1148.8 824.9 1157.0 823.4C1165.2 821.9 1175.0 818.9 1183.2 815.5C1191.3 812.2 1198.9 808.3 1205.9 803.3C1212.8 798.4 1219.5 793.7 1225.1 785.9C1230.6 778.0 1234.7 766.4 1239.0 756.2C1243.4 746.0 1247.8 735.8 1251.3 724.8C1254.7 713.7 1258.0 700.9 1260.0 689.8C1262.0 678.8 1263.3 669.2 1263.1 658.4C1263.0 647.6 1261.5 634.3 1259.1 625.2C1256.7 616.2 1253.1 610.6 1248.6 604.3C1244.2 597.9 1238.7 593.3 1232.4 587.2C1226.1 581.1 1218.7 573.7 1211.1 567.6C1203.5 561.5 1195.4 554.7 1187.0 550.5C1178.6 546.3 1169.3 544.2 1160.5 542.3C1151.6 540.4 1144.4 538.8 1133.9 539.0zM1017.3 728.2C1015.3 729.4 1008.0 731.7 1005.1 735.2C1002.2 738.7 1000.3 744.3 999.8 749.2C999.4 754.1 1000.4 760.3 1002.5 764.9C1004.5 769.6 1007.8 773.9 1012.1 777.1C1016.3 780.3 1022.8 782.7 1027.8 784.1C1032.7 785.6 1039.4 785.6 1041.7 785.9M1250.4 728.2C1252.3 729.4 1259.0 731.7 1261.7 735.2C1264.5 738.7 1266.5 744.3 1267.0 749.2C1267.4 754.1 1266.4 760.3 1264.4 764.9C1262.3 769.6 1259.0 773.8 1254.7 777.1C1250.5 780.5 1244.0 783.5 1239.0 785.0C1234.1 786.4 1227.4 785.7 1225.1 785.9" stroke="#000" stroke-width="3.2"/></g><g fill="none" stroke-linecap="round" stroke-linejoin="round"><path d="M1079.5 832.4L1082.1 863.2M1081.3 831.9L1083.8 864.0M1083.8 863.8C1092.3 865.1 1118.4 871.4 1134.9 871.5C1151.5 871.6 1175.2 865.5 1183.2 864.3M1082.4 864.4C1091.1 865.5 1117.5 871.6 1134.3 871.4C1151.1 871.2 1175.0 864.7 1183.1 863.3M1185.1 865.6L1183.0 841.1M1042.5 799.7C1047.3 804.0 1060.3 819.1 1071.0 825.7C1081.6 832.2 1100.5 836.9 1106.4 839.1M1042.8 800.4C1047.3 804.3 1058.3 817.9 1069.4 824.1C1080.6 830.4 1102.8 835.4 1109.5 837.6M1224.0 799.4C1219.2 803.8 1206.5 819.3 1195.3 825.7C1184.1 832.0 1163.3 835.5 1156.9 837.5M1224.7 802.2C1220.0 805.7 1207.3 817.0 1196.4 822.8C1185.6 828.7 1166.0 835.0 1159.9 837.4M1111.7 833.4C1115.7 833.2 1128.4 832.2 1135.8 831.8C1143.2 831.3 1152.7 830.8 1156.1 830.6M1110.9 839.5C1115.0 839.1 1127.6 837.6 1135.2 837.6C1142.7 837.5 1152.8 839.0 1156.3 839.2M1083.0 831.1C1076.2 835.7 1054.3 848.2 1042.0 858.8C1029.7 869.3 1019.9 881.4 1009.2 894.2C998.4 906.9 983.0 928.4 977.7 935.3M1080.4 830.8C1073.8 836.0 1052.9 851.6 1040.9 861.9C1028.8 872.2 1019.1 880.6 1008.0 892.7C997.0 904.7 980.3 927.3 974.7 934.2M976.0 935.1C980.7 938.3 993.7 948.6 1004.4 954.4C1015.1 960.1 1026.6 966.1 1040.4 969.5C1054.2 972.9 1074.2 973.0 1087.4 974.7C1100.6 976.5 1114.0 979.2 1119.4 980.1M974.6 933.6C979.7 937.0 994.3 948.2 1005.4 954.1C1016.5 960.0 1027.7 965.5 1041.3 969.2C1054.9 973.0 1074.1 974.8 1087.2 976.6C1100.2 978.4 1114.2 979.4 1119.6 980.0M985.4 928.5C989.2 932.1 997.7 944.3 1007.9 950.3C1018.1 956.3 1033.1 961.1 1046.6 964.7C1060.0 968.2 1076.7 970.6 1088.5 971.8C1100.4 973.0 1112.7 972.0 1117.5 972.0M1186.8 833.2C1193.1 837.3 1213.1 848.2 1224.7 858.1C1236.3 868.1 1245.3 880.8 1256.3 892.9C1267.4 905.0 1285.4 924.3 1291.2 930.5M1186.1 830.9C1192.2 835.2 1211.4 846.9 1223.0 857.0C1234.5 867.0 1244.2 878.5 1255.3 891.1C1266.4 903.7 1283.7 925.7 1289.4 932.6M1290.1 931.5C1285.9 934.3 1275.3 942.9 1264.9 948.2C1254.6 953.6 1241.0 959.2 1228.0 963.7C1214.9 968.1 1193.5 972.9 1186.7 974.8M1290.0 931.7C1286.0 934.5 1276.5 943.2 1266.0 948.5C1255.6 953.7 1240.4 959.4 1227.4 963.4C1214.3 967.5 1194.3 971.3 1187.7 972.9M1284.0 927.8C1280.8 930.3 1274.0 937.4 1264.8 942.7C1255.6 948.0 1241.8 955.5 1228.9 959.5C1215.9 963.6 1194.1 965.7 1187.1 967.0M1168.6 872.4C1168.9 882.0 1169.8 912.3 1170.5 930.2C1171.3 948.2 1172.7 971.7 1173.1 980.0M1183.6 854.4C1184.6 865.3 1188.8 900.0 1189.5 919.5C1190.2 939.0 1188.2 962.8 1187.9 971.5M1172.0 977.4L1169.2 977.2M1167.8 982.3C1169.9 997.6 1176.7 1047.3 1180.2 1074.0C1183.7 1100.8 1186.5 1121.3 1189.0 1142.9C1191.5 1164.4 1194.1 1193.4 1195.1 1203.5M976.6 933.0C971.0 939.3 953.3 960.8 943.0 970.8C932.8 980.9 919.8 989.7 915.2 993.5M974.8 935.0C969.5 940.8 952.8 960.0 943.3 969.8C933.8 979.6 922.0 989.8 917.7 993.8M915.3 995.9L926.4 1009.0L996.8 1060.4M914.4 994.7L924.4 1009.8L995.6 1061.0M996.5 1060.2C1000.3 1054.8 1010.7 1042.4 1019.0 1027.8C1027.3 1013.1 1041.8 981.5 1046.4 972.3M997.9 1059.5C1001.5 1054.6 1011.8 1045.0 1019.5 1030.2C1027.3 1015.4 1040.2 980.6 1044.4 970.7M940.8 969.7L1011.2 1022.6M942.5 970.5L1010.6 1023.9M1290.4 932.6C1296.4 938.6 1316.5 958.3 1326.5 968.5C1336.4 978.7 1346.1 989.7 1350.0 994.0M1291.1 933.1C1297.1 939.0 1317.4 957.7 1327.2 968.4C1337.0 979.1 1346.3 992.3 1350.1 997.1M1348.8 994.3L1340.4 1010.9L1267.4 1060.7M1348.9 995.6L1341.3 1008.9L1270.3 1061.5M1269.5 1061.0C1265.8 1055.5 1254.8 1043.0 1247.0 1028.2C1239.1 1013.4 1226.7 981.4 1222.7 972.1M1268.8 1061.3C1265.7 1055.9 1257.7 1044.0 1250.1 1029.0C1242.5 1013.9 1227.5 980.6 1223.0 971.0M1326.6 971.7L1256.3 1022.5M1326.7 970.0L1258.4 1023.7M916.5 1000.1C913.5 1005.0 901.2 1020.3 898.5 1029.3C895.9 1038.3 897.7 1050.6 900.8 1054.1C903.9 1057.7 911.5 1053.1 917.1 1050.5C922.6 1047.9 931.3 1040.6 934.1 1038.7M915.5 1002.3C912.1 1006.9 897.7 1021.1 895.4 1029.7C893.0 1038.4 896.9 1050.8 901.2 1054.2C905.4 1057.6 915.1 1052.9 920.7 1050.1C926.3 1047.2 932.4 1039.2 934.8 1037.0M934.9 1037.8C935.4 1040.7 934.5 1052.9 937.7 1055.4C940.9 1058.0 949.9 1056.0 954.3 1053.0C958.6 1050.0 962.2 1039.9 963.8 1037.3M1347.7 1001.1C1351.3 1006.1 1365.7 1022.6 1369.0 1031.0C1372.3 1039.4 1370.9 1048.1 1367.8 1051.4C1364.6 1054.7 1356.2 1053.3 1350.0 1050.9C1343.9 1048.6 1334.0 1039.6 1330.8 1037.3M1348.9 1002.4C1352.3 1007.1 1366.1 1021.9 1369.0 1030.2C1372.0 1038.5 1369.9 1048.7 1366.6 1052.2C1363.3 1055.7 1355.3 1053.2 1349.3 1051.2C1343.3 1049.1 1333.6 1041.6 1330.5 1039.7M1331.2 1039.3C1331.0 1041.9 1333.0 1052.8 1330.4 1055.3C1327.9 1057.9 1320.8 1058.2 1316.1 1054.5C1311.4 1050.8 1304.5 1036.7 1302.2 1033.1M1065.1 859.8C1064.9 861.5 1061.2 866.3 1063.4 870.1C1065.6 873.8 1076.1 878.4 1078.4 882.5C1080.6 886.6 1074.8 889.6 1076.9 894.6C1079.0 899.7 1089.0 906.7 1091.0 912.7C1092.9 918.6 1086.5 924.6 1088.3 930.3C1090.1 936.1 1099.0 942.3 1101.6 947.2C1104.2 952.1 1101.8 954.8 1103.9 959.6C1106.0 964.3 1111.2 971.3 1114.1 975.7C1116.9 980.0 1119.9 984.1 1121.1 985.8M1066.7 856.9C1066.4 858.6 1063.2 862.5 1065.1 866.9C1066.9 871.3 1075.8 878.4 1077.9 883.5C1080.0 888.6 1075.9 892.3 1077.7 897.4C1079.5 902.6 1087.1 909.1 1088.7 914.2C1090.4 919.4 1085.7 923.0 1087.5 928.4C1089.3 933.8 1097.3 940.8 1099.4 946.4C1101.6 952.1 1098.0 957.9 1100.6 962.4C1103.2 966.8 1111.9 968.8 1115.1 973.0C1118.3 977.2 1119.0 985.2 1119.8 987.6M1068.3 857.4C1067.6 859.5 1062.1 866.1 1064.2 870.3C1066.4 874.5 1079.0 878.4 1081.3 882.5C1083.5 886.5 1076.2 889.7 1077.6 894.7C1078.9 899.7 1087.7 906.9 1089.3 912.6C1090.9 918.3 1085.3 923.2 1087.1 928.7C1089.0 934.3 1098.0 940.8 1100.3 945.9C1102.7 951.1 1098.9 954.6 1101.5 959.5C1104.1 964.4 1112.7 970.4 1115.9 975.1C1119.0 979.8 1119.7 985.7 1120.5 987.8M1110.6 855.9C1111.8 857.1 1117.2 858.4 1117.9 862.8C1118.6 867.1 1113.3 876.7 1114.7 882.1C1116.2 887.5 1124.2 890.3 1126.6 895.2C1129.0 900.0 1127.1 907.0 1129.1 911.2C1131.0 915.5 1137.1 915.3 1138.3 920.7C1139.6 926.2 1135.7 938.0 1136.7 943.8C1137.7 949.5 1142.9 951.8 1144.3 955.2C1145.8 958.7 1146.2 961.4 1145.6 964.5C1145.0 967.5 1143.0 970.5 1140.8 973.5C1138.6 976.4 1133.7 980.7 1132.3 982.2M1111.2 855.2C1112.4 856.0 1117.3 855.6 1118.0 860.1C1118.8 864.6 1114.3 876.6 1115.9 882.2C1117.4 887.7 1125.3 888.3 1127.5 893.5C1129.6 898.7 1127.2 908.6 1128.8 913.5C1130.3 918.4 1135.5 917.7 1136.7 923.1C1137.9 928.5 1134.9 940.3 1136.1 945.7C1137.4 951.1 1142.7 952.4 1144.3 955.5C1145.8 958.6 1145.8 961.5 1145.5 964.5C1145.2 967.6 1144.1 970.9 1142.3 974.0C1140.4 977.2 1135.6 981.7 1134.3 983.3M1110.0 854.5C1111.2 855.6 1116.2 856.4 1117.1 861.2C1118.1 866.0 1114.2 877.6 1115.6 883.0C1117.1 888.4 1123.6 888.7 1125.8 893.8C1128.0 898.8 1126.5 908.4 1128.6 913.3C1130.7 918.1 1137.5 917.6 1138.6 923.0C1139.6 928.4 1134.1 940.8 1134.8 945.6C1135.5 950.5 1140.6 949.1 1142.8 952.2C1145.1 955.2 1148.5 960.4 1148.2 964.1C1148.0 967.9 1143.7 971.5 1141.4 974.6C1139.1 977.7 1135.8 981.3 1134.7 982.7M1076.4 878.4C1078.4 879.6 1084.2 884.0 1088.8 885.8C1093.5 887.6 1101.6 888.5 1104.1 889.0M1078.0 876.5C1079.8 878.2 1084.3 884.5 1088.6 886.3C1093.0 888.0 1101.5 887.0 1104.1 887.2M1086.8 909.8C1088.5 911.3 1093.6 916.7 1097.2 919.2C1100.7 921.7 1106.2 923.9 1108.0 924.8M1087.5 909.4C1089.2 911.3 1094.5 918.1 1097.8 920.7C1101.2 923.2 1106.1 924.0 1107.7 924.6M1099.3 943.8C1101.2 944.8 1107.3 948.5 1110.5 950.1C1113.6 951.7 1116.9 952.7 1118.2 953.2M1099.4 942.5C1101.1 943.8 1106.6 948.9 1109.6 950.6C1112.6 952.2 1116.1 952.1 1117.5 952.4M1126.0 893.5C1125.4 896.4 1124.4 904.9 1122.9 910.6C1121.4 916.4 1118.1 925.1 1117.1 928.0M1126.3 892.5C1126.2 895.5 1126.9 904.2 1125.3 910.4C1123.7 916.6 1118.3 926.6 1116.8 929.8M1126.0 893.1C1125.8 896.2 1126.9 906.3 1125.2 912.0C1123.5 917.7 1117.5 924.7 1116.0 927.2M1138.5 921.7C1137.8 925.4 1137.0 937.1 1134.1 943.8C1131.3 950.4 1123.5 958.9 1121.4 961.9M1139.7 921.7C1138.6 925.5 1135.9 938.2 1133.1 944.6C1130.3 951.1 1124.7 957.8 1123.0 960.4M1140.2 922.8C1139.0 926.5 1136.2 938.7 1133.0 944.9C1129.9 951.1 1123.1 957.5 1121.1 960.1M1103.8 839.4C1103.4 841.2 1102.0 846.5 1101.4 850.1C1100.8 853.7 1100.4 859.3 1100.2 861.1M1102.4 839.8C1102.2 841.5 1101.7 846.6 1101.3 850.0C1100.9 853.5 1100.3 858.7 1100.1 860.4M1108.5 855.0C1109.6 857.9 1113.4 866.3 1115.0 872.4C1116.5 878.4 1117.3 888.3 1117.8 891.5M1109.0 854.6C1110.0 857.4 1113.3 865.3 1114.9 871.3C1116.4 877.3 1117.6 887.6 1118.2 890.8M1120.9 988.1C1121.8 988.2 1124.2 989.0 1126.1 988.4C1128.1 987.7 1131.5 985.0 1132.6 984.3M1119.6 986.8C1120.9 987.2 1125.2 989.5 1127.4 989.0C1129.6 988.6 1131.7 984.9 1132.6 984.0M1114.3 974.5C1116.7 974.3 1123.8 975.4 1128.5 973.7C1133.2 971.9 1140.1 965.8 1142.4 964.2M1115.0 975.3C1117.5 974.8 1125.9 974.2 1130.4 972.4C1134.9 970.5 1140.2 965.5 1142.2 964.1M1118.8 990.5C1119.6 993.6 1121.7 1002.6 1123.6 1009.1C1125.5 1015.6 1128.2 1023.7 1130.2 1029.3C1132.3 1034.9 1134.9 1040.5 1135.9 1042.8M1120.4 988.7C1120.8 992.1 1120.9 1002.2 1122.9 1009.3C1124.8 1016.3 1129.8 1025.5 1132.0 1031.0C1134.1 1036.4 1135.2 1040.0 1135.9 1041.8M1119.4 987.5C1120.2 991.2 1122.5 1002.4 1124.4 1009.5C1126.3 1016.5 1128.9 1024.5 1130.7 1030.0C1132.5 1035.4 1134.3 1040.1 1135.0 1042.2M1152.7 980.1C1155.4 982.5 1164.8 988.4 1168.8 994.3C1172.8 1000.3 1173.5 1009.1 1176.6 1015.8C1179.6 1022.5 1184.6 1028.8 1187.2 1034.5C1189.9 1040.1 1191.7 1047.3 1192.6 1049.9M1151.1 982.0C1153.7 984.1 1162.2 989.0 1166.8 994.8C1171.5 1000.6 1175.6 1009.8 1178.9 1016.7C1182.3 1023.6 1184.8 1030.3 1187.0 1036.1C1189.2 1041.9 1191.3 1049.1 1192.2 1051.6M1150.4 980.8C1153.3 982.8 1163.1 987.0 1167.9 992.7C1172.7 998.4 1175.9 1008.2 1179.1 1015.1C1182.4 1021.9 1185.0 1027.8 1187.4 1033.7C1189.9 1039.7 1192.7 1047.8 1193.7 1050.6M1144.6 990.2C1146.5 993.6 1152.6 1004.7 1156.1 1010.3C1159.6 1015.8 1164.1 1021.4 1165.7 1023.6M1144.7 989.4C1146.7 992.7 1153.3 1003.5 1156.7 1009.2C1160.1 1014.8 1163.8 1021.0 1165.2 1023.3M1135.4 1004.4C1136.4 1006.9 1139.6 1014.2 1141.1 1019.4C1142.6 1024.6 1144.1 1033.0 1144.7 1035.7M1135.2 1002.5C1136.0 1005.3 1138.8 1014.0 1140.3 1019.5C1141.7 1025.0 1143.5 1032.9 1144.1 1035.5M1133.0 983.2C1135.5 982.7 1143.3 979.9 1148.0 980.7C1152.7 981.5 1158.9 987.0 1161.1 988.2M1134.3 983.3C1136.6 982.8 1144.0 979.3 1148.5 980.4C1153.1 981.5 1159.4 988.3 1161.5 989.9M1153.8 885.3L1157.1 893.4L1164.8 893.6L1158.8 898.9L1161.8 906.5L1154.9 902.1L1148.5 906.5L1150.1 900.1L1144.0 894.4L1150.8 893.2zM1154.4 886.0L1158.0 892.5L1165.2 894.1L1159.6 899.0L1160.8 906.0L1154.2 903.4L1148.5 906.6L1150.1 898.6L1143.5 895.1L1150.9 894.1zM1194.3 884.6L1196.6 892.7L1204.4 894.1L1198.1 899.1L1199.8 905.7L1193.6 901.5L1186.7 906.4L1188.8 898.2L1182.1 892.9L1190.1 892.8zM1193.5 885.5L1196.7 892.5L1205.0 893.2L1198.1 899.3L1199.9 907.0L1194.1 902.1L1186.0 905.3L1189.2 897.7L1182.8 893.0L1190.1 892.5zM1151.6 909.1C1151.9 912.3 1151.7 922.5 1153.1 928.4C1154.5 934.2 1157.1 940.3 1160.2 944.2C1163.4 948.0 1168.1 951.0 1172.0 951.4C1176.0 951.8 1180.1 950.2 1183.9 946.6C1187.7 943.0 1192.9 935.5 1195.0 929.6C1197.1 923.7 1196.2 914.4 1196.5 911.4M1152.4 909.7C1152.5 913.0 1151.9 923.3 1153.3 929.1C1154.6 935.0 1157.2 941.2 1160.3 945.0C1163.4 948.7 1168.1 951.6 1171.9 951.7C1175.8 951.8 1179.6 949.4 1183.4 945.5C1187.3 941.5 1192.5 934.2 1195.0 928.2C1197.5 922.2 1197.9 912.5 1198.5 909.4M1157.2 909.7C1157.5 912.3 1157.6 920.9 1159.2 925.4C1160.8 929.9 1164.3 933.6 1166.7 936.8C1169.0 940.0 1170.5 944.6 1173.4 944.6C1176.4 944.6 1181.5 940.0 1184.3 936.8C1187.2 933.5 1189.1 929.6 1190.7 925.2C1192.3 920.8 1193.3 913.1 1193.8 910.6M1157.7 910.3C1158.1 912.5 1158.4 919.0 1160.0 923.6C1161.5 928.2 1164.9 934.3 1167.2 937.6C1169.5 940.9 1171.3 943.3 1173.8 943.4C1176.4 943.5 1179.8 941.6 1182.6 938.4C1185.4 935.1 1189.1 928.6 1190.8 923.9C1192.5 919.2 1192.4 912.5 1192.7 910.2M1155.1 908.5C1158.2 910.3 1167.1 918.7 1173.7 919.1C1180.3 919.5 1191.2 912.3 1194.7 910.9M1155.7 909.0C1158.8 910.7 1168.2 918.7 1174.6 919.0C1181.0 919.3 1190.9 912.0 1194.2 910.6M1121.1 1018.5C1122.5 1022.0 1126.8 1034.0 1129.6 1039.3C1132.4 1044.6 1133.9 1047.6 1137.8 1050.5C1141.8 1053.4 1150.7 1055.6 1153.3 1056.7M1124.4 1018.7C1125.2 1021.7 1126.4 1031.0 1129.2 1036.5C1131.9 1041.9 1136.6 1047.6 1141.0 1051.4C1145.4 1055.2 1153.2 1057.9 1155.7 1059.2M1184.0 1036.5L1194.5 1059.3M1184.0 1036.4L1195.7 1058.7M1155.9 1058.3L1158.7 1042.1L1170.3 1056.5L1170.1 1042.4L1181.5 1056.8L1185.3 1042.7L1194.1 1061.3M1154.7 1059.0L1156.3 1045.0L1169.5 1056.0L1173.0 1042.3L1182.2 1056.3L1186.1 1045.2L1193.4 1060.0M1046.7 973.6C1043.6 980.5 1034.0 998.9 1028.1 1015.0C1022.1 1031.2 1015.5 1051.4 1010.9 1070.5C1006.3 1089.5 1004.2 1110.0 1000.7 1129.4C997.1 1148.8 991.4 1177.4 989.6 1187.0M1044.1 970.6C1041.7 978.3 1034.9 1000.1 1029.9 1016.9C1024.8 1033.7 1019.5 1052.8 1014.0 1071.4C1008.5 1090.0 1000.9 1109.4 996.9 1128.6C992.9 1147.9 991.2 1177.2 990.1 1186.9M1045.8 973.7C1042.9 980.7 1034.4 999.3 1028.7 1016.0C1022.9 1032.8 1016.2 1055.4 1011.0 1074.1C1005.8 1092.9 1000.7 1109.9 997.4 1128.6C994.2 1147.4 992.4 1176.8 991.4 1186.5M1222.8 974.1C1225.7 981.3 1235.4 1000.7 1240.5 1017.1C1245.7 1033.5 1248.9 1053.7 1253.8 1072.5C1258.6 1091.2 1265.2 1111.0 1269.6 1129.9C1273.9 1148.7 1278.1 1176.3 1279.8 1185.6M1225.9 970.3C1228.3 977.4 1235.7 995.1 1240.1 1012.5C1244.6 1029.9 1248.2 1054.9 1252.6 1074.8C1257.1 1094.6 1263.1 1112.8 1267.0 1131.4C1270.9 1150.0 1274.5 1177.3 1276.0 1186.4M1222.1 972.4C1225.4 979.5 1236.6 998.1 1241.8 1015.2C1247.1 1032.2 1249.1 1055.4 1253.7 1074.7C1258.2 1093.9 1265.7 1111.8 1269.3 1130.7C1272.8 1149.5 1274.1 1178.3 1275.1 1187.8M987.3 1190.6C994.5 1192.5 1013.6 1199.3 1030.0 1202.2C1046.4 1205.1 1068.3 1206.7 1085.7 1208.2C1103.0 1209.6 1117.0 1211.0 1134.0 1210.9C1150.9 1210.7 1170.1 1208.7 1187.2 1207.3C1204.3 1205.8 1221.6 1205.2 1236.5 1202.1C1251.4 1199.0 1270.1 1190.9 1276.8 1188.6M988.4 1188.9C995.4 1191.2 1014.0 1199.1 1030.4 1202.6C1046.8 1206.1 1069.4 1208.8 1086.8 1209.7C1104.2 1210.6 1118.6 1208.8 1134.9 1208.1C1151.3 1207.5 1167.4 1206.8 1184.7 1205.7C1202.1 1204.6 1223.7 1204.8 1239.1 1201.8C1254.5 1198.8 1270.8 1189.9 1277.2 1187.6M987.9 1186.7C995.0 1189.3 1013.8 1199.1 1030.1 1202.6C1046.4 1206.1 1068.2 1206.6 1085.7 1207.8C1103.2 1208.9 1118.3 1209.4 1135.0 1209.2C1151.6 1209.1 1168.3 1208.3 1185.7 1206.9C1203.0 1205.5 1223.4 1203.9 1239.2 1200.7C1254.9 1197.6 1273.2 1190.1 1280.0 1187.9" stroke="#241c7c" stroke-width="1.3" opacity=".92"/><path d="M1080.8 832.1L1082.8 863.7M1082.8 863.7C1091.3 864.8 1117.0 870.6 1133.9 870.6C1150.7 870.6 1175.7 864.8 1184.1 863.7M1184.1 863.7L1182.0 843.0M1042.1 801.4C1046.9 805.3 1059.8 818.4 1070.8 824.4C1081.8 830.4 1101.8 835.1 1108.0 837.3M1225.6 801.4C1220.9 805.3 1208.2 818.4 1197.0 824.4C1185.7 830.4 1164.7 835.1 1158.2 837.3M1110.9 832.1C1114.7 832.4 1126.2 833.8 1133.9 833.8C1141.5 833.8 1153.0 832.4 1156.8 832.1M1110.9 837.9C1114.7 838.1 1126.1 839.6 1133.9 839.6C1141.7 839.6 1153.7 838.1 1157.7 837.9M1082.2 831.5C1075.5 836.3 1054.5 849.7 1042.1 860.2C1029.7 870.7 1018.7 882.2 1007.7 894.6C996.7 907.1 981.4 928.1 976.1 934.8M976.1 934.8C980.9 938.1 993.8 949.1 1004.8 954.9C1015.8 960.6 1028.2 965.6 1042.1 969.2C1055.9 972.8 1075.1 974.9 1088.0 976.4C1100.9 977.9 1114.3 978.1 1119.5 978.4M983.3 930.5C987.4 933.6 997.4 943.6 1007.7 949.1C1017.9 954.6 1031.6 959.8 1045.0 963.5C1058.3 967.2 1075.8 969.6 1088.0 971.2C1100.2 972.8 1113.1 972.7 1118.1 972.9M1185.5 831.5C1191.7 835.9 1210.8 847.3 1222.8 857.4C1234.7 867.4 1246.0 879.6 1257.2 891.8C1268.4 904.0 1284.7 924.0 1290.2 930.5M1290.2 931.9C1286.1 934.8 1276.1 943.6 1265.8 949.1C1255.5 954.6 1241.4 960.8 1228.5 964.9C1215.6 969.0 1195.0 972.1 1188.4 973.5M1283.0 927.6C1279.7 930.3 1272.2 938.1 1262.9 943.4C1253.6 948.7 1239.4 955.0 1227.1 959.2C1214.7 963.3 1195.3 966.8 1188.9 968.4M1168.3 870.3C1168.8 880.1 1170.3 911.0 1171.1 929.1C1172.0 947.1 1173.1 970.2 1173.4 978.4M1185.5 854.5C1185.9 865.5 1187.2 900.6 1187.8 920.5C1188.4 940.3 1188.7 964.7 1188.9 973.5M1173.4 978.4L1168.3 978.4M1168.3 983.6C1170.2 998.4 1176.4 1045.7 1179.7 1072.5C1183.1 1099.2 1186.0 1122.7 1188.4 1144.2C1190.7 1165.7 1193.1 1192.0 1194.1 1201.5M976.1 934.8C970.4 940.5 951.7 959.2 941.7 969.2C931.7 979.3 920.2 990.7 915.9 995.0M915.9 995.0L925.9 1009.4L996.2 1061.0M996.2 1061.0C1000.0 1055.7 1011.0 1044.3 1019.1 1029.4C1027.3 1014.6 1040.6 981.6 1045.0 972.1M941.7 970.6L1010.5 1023.7M1290.2 931.9C1296.1 938.1 1316.2 958.7 1326.0 969.2C1335.8 979.7 1345.1 990.7 1349.0 995.0M1349.0 995.0L1340.4 1009.4L1268.7 1062.4M1268.7 1062.4C1265.3 1056.9 1256.0 1044.5 1248.6 1029.4C1241.2 1014.4 1228.3 981.6 1224.2 972.1M1326.0 970.6L1257.2 1023.7M915.9 1000.8C912.8 1005.5 899.6 1020.8 897.2 1029.4C894.9 1038.0 898.0 1049.0 901.5 1052.4C905.1 1055.7 913.0 1051.9 918.8 1049.5C924.5 1047.1 933.1 1040.0 936.0 1038.0M936.0 1038.0C936.4 1041.2 936.0 1054.3 938.8 1056.7C941.7 1059.1 948.9 1056.0 953.2 1052.4C957.5 1048.8 962.7 1038.0 964.6 1035.2M1349.0 1000.8C1352.5 1005.5 1367.6 1020.8 1370.5 1029.4C1373.3 1038.0 1369.8 1049.0 1366.2 1052.4C1362.6 1055.7 1354.7 1051.9 1349.0 1049.5C1343.2 1047.1 1334.6 1040.0 1331.8 1038.0M1331.8 1038.0C1331.3 1041.2 1331.8 1054.3 1328.9 1056.7C1326.0 1059.1 1318.8 1056.0 1314.5 1052.4C1310.2 1048.8 1305.0 1038.0 1303.1 1035.2M1066.7 858.0C1066.4 859.7 1063.2 864.5 1065.4 868.4C1067.5 872.4 1077.6 877.0 1079.8 881.5C1081.9 886.1 1076.7 890.5 1078.4 895.9C1080.2 901.4 1088.5 908.8 1090.2 914.3C1092.0 919.7 1087.2 923.4 1088.9 928.7C1090.7 933.9 1098.5 940.2 1100.7 945.7C1102.9 951.2 1099.6 956.6 1102.0 961.4C1104.4 966.2 1112.1 970.1 1115.1 974.5C1118.2 978.9 1119.5 985.4 1120.3 987.6M1109.9 854.0C1111.0 855.4 1115.5 857.1 1116.4 861.9C1117.3 866.7 1113.4 877.6 1115.1 882.9C1116.9 888.1 1124.5 888.5 1126.9 893.3C1129.3 898.1 1127.6 906.9 1129.5 911.7C1131.5 916.5 1137.8 916.5 1138.7 922.1C1139.6 927.8 1133.9 940.5 1134.8 945.7C1135.6 950.9 1142.0 950.5 1143.9 953.6C1145.9 956.6 1147.0 960.5 1146.5 964.0C1146.1 967.5 1143.5 971.2 1141.3 974.5C1139.1 977.8 1134.8 982.1 1133.4 983.7M1077.1 877.6C1079.1 878.9 1084.6 883.7 1088.9 885.5C1093.3 887.2 1100.9 887.7 1103.3 888.1M1087.6 910.3C1089.4 911.9 1094.8 917.1 1098.1 919.5C1101.4 921.9 1105.7 923.9 1107.3 924.8M1099.4 943.1C1101.1 944.4 1106.8 949.2 1109.9 950.9C1112.9 952.7 1116.4 953.1 1117.7 953.6M1126.9 893.3C1126.5 896.4 1126.0 905.8 1124.3 911.7C1122.5 917.6 1117.7 925.8 1116.4 928.7M1138.7 922.1C1137.8 925.8 1136.3 937.8 1133.4 944.4C1130.6 950.9 1123.6 958.6 1121.7 961.4M1103.3 839.6C1103.0 841.4 1102.0 846.6 1101.4 850.1C1100.7 853.6 1099.7 858.8 1099.4 860.6M1108.6 854.0C1109.7 857.1 1113.6 866.3 1115.1 872.4C1116.6 878.5 1117.3 887.7 1117.7 890.7M1120.3 987.6C1121.4 987.8 1124.7 989.6 1126.9 988.9C1129.1 988.3 1132.4 984.5 1133.4 983.7M1113.8 974.5C1116.4 974.3 1124.7 974.9 1129.5 973.2C1134.3 971.5 1140.4 965.6 1142.6 964.0M1120.3 988.9C1121.0 992.4 1122.5 1003.0 1124.3 1009.9C1126.0 1016.7 1129.1 1024.6 1130.8 1030.0C1132.6 1035.5 1134.1 1040.5 1134.8 1042.6M1151.8 981.1C1154.4 983.2 1163.1 988.3 1167.5 994.2C1171.9 1000.0 1174.7 1009.6 1178.0 1016.4C1181.2 1023.2 1184.7 1029.1 1187.1 1034.7C1189.5 1040.4 1191.5 1047.8 1192.4 1050.5M1143.9 990.2C1145.9 993.5 1152.0 1004.2 1155.7 1009.9C1159.4 1015.5 1164.4 1021.9 1166.2 1024.3M1134.8 1003.3C1135.8 1005.9 1139.6 1013.8 1141.3 1019.0C1143.0 1024.3 1144.6 1032.1 1145.2 1034.7M1133.4 983.7C1135.8 983.2 1143.3 980.2 1147.8 981.1C1152.4 981.9 1158.8 987.6 1160.9 988.9M1154.0 886.0L1157.3 893.2L1165.2 893.6L1159.4 899.0L1161.5 906.6L1154.6 902.8L1148.0 907.1L1149.5 899.3L1143.3 894.3L1151.2 893.4zM1194.1 885.3L1196.9 892.7L1204.8 893.7L1198.6 898.7L1200.1 906.4L1193.5 902.1L1186.6 905.9L1188.6 898.3L1182.8 892.9L1190.7 892.5zM1152.4 909.0C1152.5 912.3 1151.7 922.8 1153.1 928.7C1154.5 934.6 1157.7 940.5 1160.9 944.4C1164.2 948.3 1168.8 952.0 1172.7 952.3C1176.7 952.5 1180.8 949.6 1184.5 945.7C1188.2 941.8 1192.8 934.6 1195.0 928.7C1197.2 922.8 1197.2 913.4 1197.6 910.3M1157.0 910.3C1157.3 912.8 1157.4 920.2 1159.0 924.8C1160.5 929.3 1163.7 934.6 1166.2 937.8C1168.7 941.1 1171.2 944.4 1174.0 944.4C1176.9 944.4 1180.5 941.1 1183.2 937.8C1185.9 934.6 1188.8 929.2 1190.4 924.8C1192.0 920.3 1192.6 913.3 1193.0 911.0M1155.7 909.0C1158.8 910.6 1167.7 918.0 1174.0 918.2C1180.4 918.4 1190.4 911.7 1193.7 910.3M1122.4 1018.0C1123.3 1021.3 1125.3 1032.8 1128.1 1038.0C1131.0 1043.3 1135.3 1046.2 1139.6 1049.5C1143.9 1052.9 1151.5 1056.7 1153.9 1058.1M1182.6 1035.2L1194.1 1059.6M1153.9 1058.1L1156.8 1043.8L1168.3 1055.3L1171.1 1040.9L1182.6 1058.1L1185.5 1043.8L1194.1 1059.6M1045.0 972.1C1042.6 979.3 1035.9 998.4 1030.6 1015.1C1025.4 1031.8 1018.7 1053.3 1013.4 1072.5C1008.1 1091.6 1003.1 1110.7 999.1 1129.8C995.0 1148.9 990.7 1177.6 989.0 1187.2M1224.2 972.1C1226.8 979.3 1235.0 998.4 1240.0 1015.1C1245.0 1031.8 1249.8 1053.3 1254.3 1072.5C1258.9 1091.6 1263.4 1110.7 1267.2 1129.8C1271.0 1148.9 1275.6 1177.6 1277.3 1187.2M987.6 1188.6C994.8 1190.8 1014.4 1198.2 1030.6 1201.5C1046.9 1204.9 1067.9 1207.3 1085.1 1208.7C1102.3 1210.1 1117.1 1210.4 1133.9 1210.1C1150.6 1209.9 1168.3 1208.9 1185.5 1207.3C1202.7 1205.6 1221.6 1203.4 1237.1 1200.1C1252.6 1196.7 1271.8 1189.3 1278.7 1187.2" stroke="#241c7c" stroke-width="2.05"/><path d="M1346.1 1020.8L1357.6 1033.7M921.9 1020.8L910.4 1033.7M1339.8 1023.7L1351.3 1036.6M928.2 1023.7L916.7 1036.6M1333.2 1027.1L1344.7 1040.1M934.8 1027.1L923.3 1040.1M1062.7 900.4C1062.2 905.2 1060.3 921.6 1059.3 929.1C1058.3 936.5 1057.1 942.4 1056.7 945.1M1205.6 900.4C1206.1 905.2 1208.0 921.6 1209.0 929.1C1210.0 936.5 1210.9 942.4 1211.3 945.1M1102.3 1116.9C1105.2 1117.9 1114.3 1121.6 1119.5 1122.7C1124.8 1123.8 1129.1 1123.7 1133.9 1123.5C1138.6 1123.4 1143.2 1122.9 1148.2 1121.8C1153.2 1120.7 1161.3 1117.7 1164.0 1116.9" stroke="#000" stroke-width="1.2"/><path d="M1109.5 825.8L1110.9 838.7M1156.8 825.8L1158.2 838.7M1156.8 834.4C1161.1 835.9 1173.5 838.0 1182.6 843.0C1191.7 848.0 1200.4 855.0 1211.3 864.5C1222.2 874.0 1235.8 888.1 1248.0 900.1C1260.2 912.1 1273.3 924.8 1284.7 936.5C1296.1 948.3 1305.8 959.7 1316.3 970.6C1326.7 981.6 1339.7 994.3 1347.5 1002.2C1355.4 1010.1 1359.8 1013.4 1363.3 1018.0C1366.8 1022.6 1368.0 1026.2 1368.5 1029.7C1368.9 1033.2 1368.9 1036.1 1365.9 1038.9C1362.8 1041.7 1354.9 1046.0 1350.1 1046.7C1345.3 1047.3 1340.5 1043.7 1337.2 1042.6C1334.0 1041.5 1331.7 1040.5 1330.6 1040.1M1330.6 1040.1C1330.4 1041.6 1330.7 1047.2 1329.2 1049.2C1327.6 1051.3 1324.5 1053.1 1321.4 1052.4C1318.4 1051.7 1313.9 1048.4 1310.8 1045.2C1307.8 1042.1 1305.7 1036.9 1303.1 1033.5C1300.5 1030.0 1300.6 1029.1 1295.3 1024.3C1290.1 1019.5 1279.8 1012.2 1271.5 1004.8C1263.2 997.4 1255.5 989.8 1245.4 979.8C1235.4 969.9 1217.0 950.9 1211.3 945.1M1111.2 834.4C1106.9 835.9 1094.5 838.0 1085.4 843.0C1076.3 848.0 1067.6 855.0 1056.7 864.5C1045.8 874.0 1032.2 888.1 1020.0 900.1C1007.8 912.1 994.7 924.8 983.3 936.5C971.9 948.3 962.2 959.7 951.7 970.6C941.3 981.6 928.3 994.3 920.5 1002.2C912.6 1010.1 908.2 1013.4 904.7 1018.0C901.2 1022.6 900.0 1026.2 899.5 1029.7C899.1 1033.2 899.1 1036.1 902.1 1038.9C905.2 1041.7 913.1 1046.0 917.9 1046.7C922.7 1047.3 927.6 1043.7 930.8 1042.6C934.1 1041.5 936.3 1040.5 937.4 1040.1M937.4 1040.1C937.6 1041.6 937.3 1047.2 938.8 1049.2C940.4 1051.3 943.5 1053.1 946.6 1052.4C949.6 1051.7 954.1 1048.4 957.2 1045.2C960.2 1042.1 962.4 1036.9 964.9 1033.5C967.5 1030.0 967.4 1029.1 972.7 1024.3C977.9 1019.5 988.2 1012.2 996.5 1004.8C1004.8 997.4 1012.5 989.8 1022.6 979.8C1032.6 969.9 1051.0 950.9 1056.7 945.1" stroke="#000" stroke-width="3.2"/></g><g fill="none" stroke-linecap="round" stroke-linejoin="round"><path d="M986.1 1189.7C993.9 1191.7 1017.8 1199.0 1033.2 1201.7C1048.6 1204.5 1062.2 1204.7 1078.7 1206.2C1095.2 1207.7 1114.4 1210.7 1132.2 1210.6C1150.0 1210.5 1168.3 1207.8 1185.5 1205.6C1202.6 1203.3 1219.5 1200.3 1235.3 1197.1C1251.0 1193.9 1272.6 1188.3 1280.1 1186.5M987.5 1186.6C994.8 1188.7 1016.4 1195.8 1031.6 1199.2C1046.9 1202.6 1061.7 1205.0 1078.7 1207.0C1095.8 1209.0 1116.4 1211.4 1133.8 1211.2C1151.1 1210.9 1165.6 1208.0 1183.1 1205.4C1200.5 1202.9 1222.6 1198.8 1238.4 1195.8C1254.2 1192.9 1271.3 1189.0 1277.9 1187.6M985.0 1186.9C992.8 1189.2 1015.9 1197.2 1032.0 1200.5C1048.0 1203.8 1064.9 1204.8 1081.4 1206.6C1097.8 1208.3 1113.6 1210.8 1130.8 1210.9C1147.9 1211.1 1166.4 1209.7 1184.1 1207.5C1201.8 1205.4 1221.6 1201.6 1237.2 1198.1C1252.8 1194.6 1271.1 1188.4 1277.9 1186.5M994.1 1179.9L988.1 1189.8M994.1 1179.1L987.3 1190.8M1273.5 1179.2L1279.1 1188.2M1274.4 1178.2L1279.9 1189.4M1190.3 1181.7L1192.5 1202.6M1029.4 1201.1C1030.3 1210.8 1034.0 1238.2 1034.7 1259.3C1035.4 1280.4 1033.6 1316.4 1033.4 1327.9M1029.6 1200.2C1030.3 1210.2 1033.5 1239.2 1034.3 1260.4C1035.0 1281.6 1034.2 1316.3 1034.2 1327.4M1119.9 1208.4C1118.5 1219.1 1113.6 1253.0 1111.4 1272.6C1109.1 1292.3 1107.2 1317.3 1106.4 1326.3M1120.0 1208.2C1118.1 1219.0 1110.6 1253.4 1108.4 1273.1C1106.3 1292.9 1107.4 1317.8 1107.2 1326.8M1149.6 1210.4C1150.8 1220.5 1155.1 1251.7 1156.7 1271.0C1158.2 1290.4 1158.6 1317.1 1159.0 1326.3M1149.0 1210.2C1150.6 1220.5 1156.9 1252.5 1158.8 1272.0C1160.7 1291.4 1160.1 1317.8 1160.3 1327.0M1229.2 1202.3C1229.4 1211.9 1229.6 1239.1 1230.0 1259.9C1230.3 1280.7 1231.1 1316.1 1231.4 1327.3M1231.1 1201.0C1231.0 1210.8 1230.0 1239.0 1230.4 1260.1C1230.8 1281.3 1233.2 1316.6 1233.7 1327.9M1108.8 1334.4C1108.9 1335.1 1106.1 1335.5 1104.2 1336.1C1102.3 1336.6 1100.9 1337.5 1097.5 1337.6C1094.0 1337.8 1088.1 1336.8 1083.4 1337.2C1078.7 1337.6 1074.4 1339.9 1069.4 1340.0C1064.4 1340.1 1058.1 1338.3 1053.3 1337.6C1048.5 1337.0 1043.7 1336.1 1040.4 1336.0C1037.1 1335.9 1034.9 1337.5 1033.3 1336.9C1031.7 1336.4 1030.7 1334.0 1030.7 1332.8C1030.7 1331.6 1031.4 1330.4 1033.4 1329.7C1035.3 1329.0 1039.2 1328.8 1042.3 1328.6C1045.5 1328.4 1048.2 1328.6 1052.5 1328.3C1056.7 1328.0 1062.9 1326.8 1067.9 1326.8C1073.0 1326.7 1077.9 1327.2 1082.7 1327.7C1087.6 1328.3 1093.5 1329.4 1097.0 1330.1C1100.5 1330.8 1101.9 1331.3 1103.9 1332.0C1105.9 1332.8 1108.8 1333.7 1108.8 1334.4zM1107.1 1332.4C1106.9 1333.2 1107.6 1334.1 1105.8 1334.9C1104.0 1335.8 1100.1 1336.8 1096.3 1337.5C1092.5 1338.3 1087.9 1339.0 1083.2 1339.5C1078.5 1339.9 1072.8 1340.2 1068.1 1340.1C1063.4 1339.9 1059.7 1339.0 1055.0 1338.7C1050.3 1338.3 1043.8 1338.7 1039.8 1338.2C1035.8 1337.6 1033.0 1336.5 1031.3 1335.4C1029.6 1334.4 1029.2 1332.5 1029.5 1331.8C1029.8 1331.2 1031.2 1332.2 1033.2 1331.7C1035.2 1331.2 1038.1 1329.4 1041.5 1328.8C1045.0 1328.2 1049.6 1328.2 1054.1 1328.2C1058.5 1328.1 1062.9 1328.5 1068.2 1328.6C1073.5 1328.7 1080.6 1328.9 1085.6 1328.9C1090.7 1328.9 1094.7 1328.5 1098.3 1328.6C1101.8 1328.7 1105.4 1329.0 1106.9 1329.7C1108.4 1330.3 1107.3 1331.5 1107.1 1332.4zM1031.0 1332.8C1031.6 1340.2 1035.3 1363.5 1034.8 1377.3C1034.3 1391.1 1030.0 1405.0 1028.1 1415.5C1026.3 1426.0 1022.3 1434.0 1023.8 1440.5C1025.3 1446.9 1030.7 1450.3 1037.2 1454.0C1043.6 1457.7 1053.6 1462.1 1062.4 1462.7C1071.2 1463.2 1083.3 1459.8 1090.1 1457.3C1096.9 1454.9 1100.6 1453.1 1103.0 1448.1C1105.4 1443.2 1104.7 1435.1 1104.3 1427.7C1103.9 1420.3 1100.6 1414.1 1100.8 1403.6C1100.9 1393.0 1103.5 1375.7 1105.3 1364.5C1107.2 1353.3 1110.7 1341.2 1111.8 1336.5M1032.1 1335.6C1032.3 1342.1 1034.2 1361.4 1032.9 1375.1C1031.7 1388.7 1026.1 1406.2 1024.9 1417.4C1023.6 1428.7 1023.6 1436.4 1025.6 1442.5C1027.5 1448.7 1030.4 1451.1 1036.5 1454.3C1042.6 1457.6 1052.9 1461.8 1062.2 1462.2C1071.5 1462.6 1085.7 1459.5 1092.3 1456.7C1099.0 1454.0 1100.1 1450.0 1102.3 1445.6C1104.4 1441.3 1105.1 1437.9 1105.0 1430.7C1105.0 1423.5 1102.6 1414.0 1101.9 1402.4C1101.3 1390.9 1100.2 1372.6 1101.2 1361.5C1102.2 1350.4 1106.9 1340.1 1108.0 1335.8M1030.9 1336.8C1031.9 1343.7 1037.6 1364.4 1036.9 1377.8C1036.3 1391.2 1029.4 1406.9 1027.0 1417.2C1024.7 1427.6 1021.0 1433.8 1022.8 1440.1C1024.6 1446.4 1031.3 1451.7 1037.9 1455.1C1044.5 1458.4 1054.1 1459.6 1062.4 1460.4C1070.8 1461.1 1080.6 1461.4 1087.8 1459.6C1094.9 1457.7 1102.0 1454.4 1105.4 1449.3C1108.8 1444.1 1108.6 1436.4 1108.0 1428.5C1107.4 1420.7 1102.2 1412.7 1101.6 1402.1C1101.0 1391.5 1103.5 1376.6 1104.6 1365.0C1105.6 1353.3 1107.4 1337.7 1107.9 1332.2M1022.1 1439.6C1025.0 1441.4 1032.6 1447.3 1039.8 1450.5C1046.9 1453.7 1056.3 1458.7 1065.1 1458.8C1073.9 1458.8 1085.5 1453.8 1092.5 1450.6C1099.5 1447.4 1104.8 1441.3 1107.3 1439.4M1021.5 1438.6C1024.7 1441.2 1033.7 1450.6 1040.7 1453.9C1047.8 1457.2 1055.3 1458.6 1063.8 1458.2C1072.2 1457.8 1084.2 1454.6 1091.5 1451.4C1098.7 1448.2 1104.7 1440.9 1107.3 1438.8M1063.6 1340.1L1064.4 1396.2M1071.5 1340.1L1071.7 1398.2M1054.4 1345.9L1081.7 1356.9M1080.7 1347.2L1055.3 1359.5M1053.6 1366.5L1081.6 1376.9M1079.4 1367.6L1055.0 1375.2M1053.6 1388.8L1079.8 1397.5M1082.0 1388.2L1055.2 1398.9M1041.1 1410.2L1081.4 1398.6M1062.0 1395.6L1086.4 1411.7M1235.8 1333.8C1236.0 1334.7 1236.6 1335.4 1235.0 1335.9C1233.5 1336.3 1230.4 1336.4 1226.5 1336.6C1222.5 1336.7 1216.1 1336.8 1211.3 1337.0C1206.6 1337.2 1202.8 1337.4 1198.2 1337.7C1193.6 1338.1 1188.8 1339.1 1183.8 1339.2C1178.9 1339.3 1172.6 1338.9 1168.6 1338.3C1164.7 1337.6 1162.0 1336.2 1160.0 1335.5C1158.1 1334.8 1156.5 1334.6 1156.9 1334.1C1157.3 1333.6 1160.5 1333.0 1162.3 1332.3C1164.2 1331.7 1164.7 1330.8 1168.1 1330.3C1171.4 1329.7 1177.6 1329.3 1182.5 1328.9C1187.4 1328.5 1192.4 1327.8 1197.4 1327.8C1202.4 1327.8 1208.3 1328.9 1212.7 1328.8C1217.1 1328.8 1220.3 1327.5 1223.8 1327.7C1227.4 1328.0 1231.8 1329.4 1233.8 1330.4C1235.8 1331.4 1235.6 1332.8 1235.8 1333.8zM1236.4 1331.7C1236.4 1332.1 1236.2 1332.8 1234.5 1333.9C1232.8 1335.0 1229.9 1337.7 1226.2 1338.3C1222.5 1338.8 1217.0 1337.4 1212.3 1337.4C1207.6 1337.3 1202.9 1338.1 1197.9 1338.1C1192.8 1338.1 1186.6 1337.4 1182.1 1337.3C1177.7 1337.2 1174.7 1338.0 1171.1 1337.4C1167.5 1336.9 1162.7 1334.7 1160.6 1334.2C1158.6 1333.6 1158.6 1335.1 1158.8 1334.3C1159.1 1333.6 1160.5 1330.7 1162.2 1329.8C1163.9 1328.8 1165.7 1329.0 1169.2 1328.5C1172.7 1328.0 1178.4 1326.7 1183.2 1326.8C1187.9 1326.9 1192.7 1329.0 1197.7 1329.0C1202.7 1328.9 1208.9 1326.5 1213.3 1326.3C1217.6 1326.2 1220.3 1327.1 1223.8 1327.9C1227.3 1328.8 1232.2 1330.7 1234.3 1331.3C1236.4 1332.0 1236.3 1331.2 1236.4 1331.7zM1159.5 1334.3C1160.1 1341.4 1163.5 1363.1 1162.9 1377.0C1162.4 1390.9 1157.7 1406.6 1156.2 1417.7C1154.7 1428.7 1152.0 1436.8 1154.0 1443.3C1155.9 1449.8 1161.4 1453.9 1167.9 1456.6C1174.4 1459.3 1184.6 1458.9 1193.2 1459.3C1201.7 1459.8 1212.7 1461.0 1219.2 1459.3C1225.7 1457.5 1230.2 1453.7 1232.4 1448.9C1234.7 1444.2 1233.2 1438.5 1232.6 1430.9C1231.9 1423.4 1228.9 1415.0 1228.6 1403.6C1228.2 1392.2 1228.8 1374.1 1230.3 1362.4C1231.7 1350.8 1236.1 1338.5 1237.3 1333.7M1157.5 1334.3C1158.9 1341.4 1165.6 1363.4 1165.6 1377.2C1165.6 1390.9 1159.4 1405.8 1157.5 1417.0C1155.7 1428.1 1152.9 1438.1 1154.5 1444.2C1156.1 1450.4 1161.1 1451.1 1167.2 1453.9C1173.2 1456.8 1182.8 1460.7 1191.0 1461.1C1199.1 1461.6 1208.8 1458.4 1216.1 1456.4C1223.4 1454.4 1231.7 1453.5 1234.6 1449.1C1237.4 1444.8 1234.0 1437.5 1233.3 1430.1C1232.5 1422.7 1230.2 1415.6 1230.1 1404.5C1230.1 1393.4 1231.8 1374.9 1232.8 1363.5C1233.8 1352.1 1235.6 1340.6 1236.1 1336.1M1158.5 1335.1C1159.2 1342.0 1162.9 1363.4 1162.7 1376.6C1162.6 1389.8 1159.3 1403.1 1157.7 1414.1C1156.1 1425.1 1151.6 1435.5 1153.0 1442.6C1154.4 1449.8 1159.7 1453.6 1166.1 1457.1C1172.6 1460.6 1182.9 1463.1 1191.7 1463.5C1200.6 1464.0 1212.7 1462.8 1219.2 1459.8C1225.8 1456.9 1228.5 1450.6 1230.8 1445.8C1233.1 1440.9 1233.8 1438.1 1233.1 1430.7C1232.3 1423.4 1226.6 1412.3 1226.5 1401.5C1226.4 1390.7 1230.8 1376.9 1232.5 1365.7C1234.1 1354.4 1235.8 1339.5 1236.5 1334.2M1152.3 1440.0C1155.2 1442.3 1163.1 1450.6 1169.6 1453.4C1176.0 1456.2 1182.9 1456.7 1191.2 1456.7C1199.4 1456.6 1212.2 1456.2 1219.1 1453.1C1226.1 1450.1 1230.6 1440.8 1232.9 1438.4M1153.4 1439.9C1156.0 1442.1 1162.4 1449.9 1168.9 1453.0C1175.5 1456.1 1184.0 1458.8 1192.5 1458.4C1201.1 1458.0 1213.6 1454.2 1220.2 1450.7C1226.8 1447.2 1230.3 1439.6 1232.4 1437.4M1192.9 1338.4L1192.7 1397.4M1201.9 1340.5L1198.6 1398.4M1181.7 1346.1L1208.4 1358.3M1209.9 1347.4L1183.9 1357.0M1184.7 1365.3L1210.5 1375.1M1210.5 1364.9L1184.4 1378.2M1183.7 1386.0L1207.3 1396.7M1210.8 1385.6L1183.6 1398.3M1171.8 1410.5L1206.5 1395.8M1194.1 1396.9L1216.3 1410.2" stroke="#241c7c" stroke-width="1.3" opacity=".92"/><path d="M986.6 1187.9C994.2 1190.0 1016.9 1197.7 1032.4 1201.0C1047.9 1204.2 1062.9 1206.1 1079.5 1207.5C1096.1 1208.9 1114.5 1209.6 1131.9 1209.3C1149.4 1209.1 1166.8 1208.2 1184.3 1206.2C1201.8 1204.1 1221.0 1200.1 1236.7 1197.0C1252.4 1194.0 1271.6 1189.4 1278.6 1187.9M993.1 1180.0L987.9 1189.2M1273.4 1180.0L1278.6 1189.2M1190.8 1180.0L1193.5 1203.6M1031.1 1201.0C1031.5 1210.6 1033.3 1237.6 1033.7 1258.6C1034.1 1279.5 1033.7 1315.3 1033.7 1326.7M1118.8 1208.8C1117.3 1219.3 1111.6 1252.0 1109.7 1271.7C1107.7 1291.3 1107.5 1317.5 1107.0 1326.7M1148.9 1208.8C1150.5 1219.3 1156.1 1252.0 1158.1 1271.7C1160.1 1291.3 1160.3 1317.5 1160.7 1326.7M1230.1 1201.0C1229.9 1210.6 1228.4 1237.6 1228.8 1258.6C1229.3 1279.5 1232.1 1315.3 1232.8 1326.7M1108.3 1333.2C1108.3 1334.0 1107.3 1334.7 1105.4 1335.4C1103.4 1336.1 1100.4 1336.8 1096.8 1337.3C1093.3 1337.8 1088.7 1338.3 1084.1 1338.5C1079.5 1338.8 1074.1 1339.0 1069.1 1339.0C1064.0 1339.0 1058.7 1338.8 1054.0 1338.5C1049.4 1338.3 1044.8 1337.8 1041.3 1337.3C1037.7 1336.8 1034.7 1336.1 1032.8 1335.4C1030.8 1334.7 1029.8 1334.0 1029.8 1333.2C1029.8 1332.5 1030.8 1331.7 1032.8 1331.0C1034.7 1330.3 1037.7 1329.7 1041.3 1329.1C1044.8 1328.6 1049.4 1328.2 1054.0 1327.9C1058.7 1327.6 1064.0 1327.5 1069.1 1327.5C1074.1 1327.5 1079.5 1327.6 1084.1 1327.9C1088.7 1328.2 1093.3 1328.6 1096.8 1329.1C1100.4 1329.7 1103.4 1330.3 1105.4 1331.0C1107.3 1331.7 1108.3 1332.5 1108.3 1333.2zM1031.1 1334.5C1031.7 1341.5 1035.7 1362.9 1035.0 1376.4C1034.4 1390.0 1028.9 1404.8 1027.2 1415.7C1025.4 1426.6 1022.8 1435.4 1024.5 1441.9C1026.3 1448.5 1031.1 1451.7 1037.6 1455.0C1044.2 1458.3 1055.1 1461.1 1063.8 1461.6C1072.5 1462.0 1083.2 1460.0 1090.0 1457.6C1096.8 1455.2 1101.8 1452.0 1104.4 1447.2C1107.0 1442.4 1106.4 1436.2 1105.7 1428.8C1105.1 1421.4 1100.9 1413.5 1100.5 1402.6C1100.1 1391.7 1101.6 1374.7 1103.1 1363.3C1104.6 1352.0 1108.6 1339.3 1109.7 1334.5M1023.2 1439.3C1026.1 1441.5 1033.5 1449.3 1040.2 1452.4C1047.0 1455.4 1055.1 1457.6 1063.8 1457.6C1072.5 1457.6 1085.6 1455.4 1092.6 1452.4C1099.6 1449.3 1103.5 1441.5 1105.7 1439.3M1065.1 1339.8L1065.9 1397.4M1071.7 1339.8L1071.2 1397.4M1054.7 1347.6L1080.8 1358.6M1080.8 1347.6L1054.7 1358.6M1054.7 1366.0L1080.8 1377.0M1080.8 1366.0L1054.7 1377.0M1054.7 1386.9L1080.8 1397.9M1080.8 1386.9L1054.7 1397.9M1042.9 1411.8L1079.5 1397.4M1063.8 1397.4L1087.4 1410.0M1236.7 1333.2C1236.7 1334.0 1235.6 1334.7 1233.7 1335.4C1231.8 1336.1 1228.7 1336.8 1225.2 1337.3C1221.6 1337.8 1217.1 1338.3 1212.4 1338.5C1207.8 1338.8 1202.4 1339.0 1197.4 1339.0C1192.4 1339.0 1187.0 1338.8 1182.4 1338.5C1177.7 1338.3 1173.2 1337.8 1169.6 1337.3C1166.1 1336.8 1163.0 1336.1 1161.1 1335.4C1159.2 1334.7 1158.1 1334.0 1158.1 1333.2C1158.1 1332.5 1159.2 1331.7 1161.1 1331.0C1163.0 1330.3 1166.1 1329.7 1169.6 1329.1C1173.2 1328.6 1177.7 1328.2 1182.4 1327.9C1187.0 1327.6 1192.4 1327.5 1197.4 1327.5C1202.4 1327.5 1207.8 1327.6 1212.4 1327.9C1217.1 1328.2 1221.6 1328.6 1225.2 1329.1C1228.7 1329.7 1231.8 1330.3 1233.7 1331.0C1235.6 1331.7 1236.7 1332.5 1236.7 1333.2zM1159.4 1334.5C1160.1 1341.5 1164.0 1362.9 1163.3 1376.4C1162.7 1390.0 1157.2 1404.8 1155.5 1415.7C1153.7 1426.6 1151.1 1435.4 1152.9 1441.9C1154.6 1448.5 1159.4 1451.7 1166.0 1455.0C1172.5 1458.3 1183.4 1461.1 1192.2 1461.6C1200.9 1462.0 1211.6 1460.0 1218.3 1457.6C1225.1 1455.2 1230.1 1452.0 1232.8 1447.2C1235.4 1442.4 1234.7 1436.2 1234.1 1428.8C1233.4 1421.4 1229.3 1413.5 1228.8 1402.6C1228.4 1391.7 1229.9 1374.7 1231.4 1363.3C1233.0 1352.0 1236.9 1339.3 1238.0 1334.5M1151.6 1439.3C1154.4 1441.5 1161.8 1449.3 1168.6 1452.4C1175.4 1455.4 1183.4 1457.6 1192.2 1457.6C1200.9 1457.6 1214.0 1455.4 1221.0 1452.4C1228.0 1449.3 1231.9 1441.5 1234.1 1439.3M1193.5 1339.8L1194.3 1397.4M1200.0 1339.8L1199.5 1397.4M1183.0 1347.6L1209.2 1358.6M1209.2 1347.6L1183.0 1358.6M1183.0 1366.0L1209.2 1377.0M1209.2 1366.0L1183.0 1377.0M1183.0 1386.9L1209.2 1397.9M1209.2 1386.9L1183.0 1397.9M1171.2 1411.8L1207.9 1397.4M1192.2 1397.4L1215.7 1410.0" stroke="#241c7c" stroke-width="2.05"/><path d="M1048.9 1381.7L1048.9 1393.5M1058.6 1381.7L1058.6 1393.5M1070.4 1381.7L1070.4 1393.5M1083.5 1381.7L1083.5 1393.5M1184.3 1381.7L1184.3 1393.5M1196.1 1381.7L1196.1 1393.5M1207.9 1381.7L1207.9 1393.5M1219.7 1381.7L1219.7 1393.5" stroke="#000" stroke-width="1.2"/><path d="M1056.7 945.1C1055.6 952.9 1052.5 979.0 1050.1 991.6C1047.7 1004.2 1044.8 1012.1 1042.4 1020.8C1040.0 1029.6 1037.9 1034.0 1035.8 1044.1C1033.6 1054.1 1031.0 1070.1 1029.5 1081.1C1027.9 1092.1 1027.2 1101.9 1026.6 1110.0C1026.0 1118.2 1025.5 1119.4 1025.7 1129.8C1026.0 1140.3 1026.9 1157.9 1028.0 1172.8C1029.1 1187.8 1031.2 1202.8 1032.4 1219.3C1033.6 1235.8 1034.7 1256.4 1035.0 1271.7C1035.4 1286.9 1034.3 1297.9 1034.5 1311.0C1034.7 1324.1 1035.4 1338.0 1036.3 1350.2C1037.2 1362.5 1037.8 1376.7 1039.7 1384.3C1041.7 1391.9 1044.1 1393.5 1048.1 1396.1C1052.1 1398.6 1059.5 1398.9 1063.8 1399.5C1068.2 1400.1 1070.4 1400.1 1074.3 1399.5C1078.2 1398.9 1084.1 1398.4 1087.4 1396.1C1090.7 1393.8 1092.7 1391.1 1094.2 1385.6C1095.7 1380.1 1095.5 1373.6 1096.6 1363.3C1097.6 1353.1 1098.5 1339.3 1100.5 1324.1C1102.5 1308.8 1105.7 1289.1 1108.3 1271.7C1111.0 1254.2 1113.6 1236.7 1116.2 1219.3C1118.8 1201.9 1121.6 1183.0 1123.8 1167.1C1126.0 1151.2 1128.6 1131.3 1129.6 1124.1M1138.2 1124.1C1139.0 1131.3 1140.8 1151.2 1143.0 1167.1C1145.3 1183.0 1148.8 1201.9 1151.6 1219.3C1154.3 1236.7 1156.8 1254.2 1159.4 1271.7C1162.0 1289.1 1165.3 1308.8 1167.3 1324.1C1169.2 1339.3 1170.1 1353.1 1171.2 1363.3C1172.3 1373.6 1172.1 1380.1 1173.8 1385.6C1175.6 1391.1 1177.8 1393.8 1181.7 1396.1C1185.6 1398.4 1193.0 1398.9 1197.4 1399.5C1201.8 1400.1 1203.7 1400.1 1207.9 1399.5C1212.0 1398.9 1218.6 1398.4 1222.3 1396.1C1225.9 1393.8 1228.3 1391.1 1229.9 1385.6C1231.4 1380.1 1231.0 1373.6 1231.4 1363.3C1231.9 1353.1 1232.4 1339.3 1232.8 1324.1C1233.1 1308.8 1233.1 1289.1 1233.5 1271.7C1234.0 1254.2 1234.3 1235.8 1235.4 1219.3C1236.4 1202.8 1238.8 1187.8 1240.0 1172.8C1241.1 1157.9 1242.0 1140.3 1242.3 1129.8C1242.5 1119.4 1242.0 1118.2 1241.4 1110.0C1240.8 1101.9 1240.1 1092.1 1238.5 1081.1C1237.0 1070.1 1234.4 1054.1 1232.2 1044.1C1230.1 1034.0 1228.0 1029.6 1225.6 1020.8C1223.2 1012.1 1220.3 1004.2 1217.9 991.6C1215.5 979.0 1212.4 952.9 1211.3 945.1" stroke="#000" stroke-width="3.2"/></g></svg>
<div class="a" style="left:1848px;top:198px;width:24px;height:1432px;background:#454545;"></div>
<div class="a" style="left:1850px;top:611.5px;width:20px;height:590px;background:#5c5c5c;border-radius:10px;"></div>
<div class="a" style="left:328px;top:1630px;width:1545px;height:35px;background:#464646;"></div>
<div class="a" style="left:328px;top:1630px;width:639px;height:35px;background:#4e4e4e;"></div>
<div class="a" style="left:1848px;top:1630px;width:25px;height:35px;background:#4a4a4a;"></div>
<svg style="left:330px;top:1630px;" width="470" height="36" viewBox="0 0 470 36"><rect x="9" y="8.500" width="130.500" height="18.500" fill="#2d2d2d" stroke="#8e8e8e" stroke-width="1"/><path d="M9.500 26.500L139 9v17.500z" fill="#3c3c3c" opacity="0"/><path d="M9.500 26.500C60 20 100 12 139 9.300L139 9.300 9.500 9.300z" fill="#4e4e4e"/><rect x="9" y="8.500" width="130.500" height="18.500" fill="none" stroke="#8e8e8e" stroke-width="1"/><rect x="62.500" y="0.500" width="7" height="34" fill="#7a7a7a" stroke="#9c9c9c" stroke-width="1"/><path d="M170 18h16M226 18h16M234 10v16" stroke="#b9b9b9" stroke-width="1.800" fill="none"/><rect x="284" y="12" width="12" height="12" fill="#b4b4b4"/><rect x="328.500" y="8.500" width="131" height="18.500" fill="#2d2d2d" stroke="#8e8e8e" stroke-width="1"/><path d="M329 26.500h50c20-1 25-16 45-17h35.500V9h-130.500z" fill="#4e4e4e"/><rect x="328.500" y="8.500" width="131" height="18.500" fill="none" stroke="#8e8e8e" stroke-width="1"/><rect x="390.500" y="0.500" width="7" height="34" fill="#7a7a7a" stroke="#9c9c9c" stroke-width="1"/></svg>
<div class="t" style="top:1640.75px;font-size:21.5px;color:#dedede;left:335px;letter-spacing:-0.2px;">31.6</div>
<div class="t" style="top:1640.75px;font-size:21.5px;color:#dedede;left:661px;letter-spacing:-0.2px;">0.0</div>
<svg style="left:815px;top:1634px;" width="140" height="28" viewBox="0 0 140 28"><path d="M5.500 14.500a9 9 0 1 1 2.500 8" fill="none" stroke="#b9b9b9" stroke-width="2" transform="translate(1,-1)"/><path d="M1.500 11l5 7 4.500-7z" fill="#b9b9b9"/><path d="M62 20a9 9 0 0 1 9-14" fill="none" stroke="#b9b9b9" stroke-width="2"/><circle cx="125" cy="14" r="9" fill="none" stroke="#8e8e8e" stroke-width="1.600"/><path d="M125 2v8M121 3h6" stroke="#8e8e8e" stroke-width="1.400" fill="none"/></svg>
<div class="a" style="left:1189px;top:1631.5px;width:413px;height:32px;background:#5a5a5a;border-radius:16px;"></div>
<div class="a" style="left:879.5px;top:1642px;width:628.5px;height:11px;background:#ececec;border-radius:6px;"></div>
<div class="a" style="left:326px;top:1665px;width:1549px;height:3px;background:#2a2a2a;"></div><div class="a" style="left:1873px;top:98px;width:3px;height:1570px;background:#2a2a2a;"></div>
<div class="a" style="left:1876px;top:98px;width:512px;height:39px;background:#383838;"></div>
<svg style="left:1876px;top:98px;" width="512" height="40" viewBox="0 0 512 40"><path d="M6.5 5.5v25M11.0 5.5v25M15.5 5.5v25" fill="none" stroke="#8c8c8c" stroke-width="1.6"/><path d="M436 9.5L445 18.5L436 27.5" fill="none" stroke="#8c8c8c" stroke-width="1.8" stroke-linecap="round" stroke-linejoin="round"/><path d="M488 9.5L497 18.5L488 27.5M498 9.5L507 18.5L498 27.5" fill="none" stroke="#8c8c8c" stroke-width="1.8" stroke-linecap="round" stroke-linejoin="round"/></svg>
<div class="a" style="left:1876px;top:137px;width:512px;height:2px;background:#2a2a2a;"></div>
<div class="a" style="left:1876px;top:139px;width:512px;height:40px;background:#383838;"></div>
<div class="a" style="left:1921.5px;top:151.5px;width:140.5px;height:28px;background:#4d4d4d;"></div>
<div class="a" style="left:2064px;top:151.5px;width:58px;height:27px;background:#4d4d4d;overflow:hidden;"></div>
<div class="a" style="left:2124px;top:151.5px;width:58px;height:27px;background:#4d4d4d;overflow:hidden;"></div>
<div class="a" style="left:2184px;top:151.5px;width:58px;height:27px;background:#4d4d4d;overflow:hidden;"></div>
<div class="a" style="left:2244px;top:151.5px;width:58px;height:27px;background:#4d4d4d;overflow:hidden;"></div>
<div class="a" style="left:1876px;top:178.5px;width:512px;height:169.5px;background:#4d4d4d;"></div>
<svg style="left:1876px;top:139px;" width="512" height="60" viewBox="0 0 512 60"><path d="M16 16h14M16 22h14M16 28h14" fill="none" stroke="#8c8c8c" stroke-width="1.7"/><path d="M60.500 40.500L73.700 47 86.900 40.500M60.500 33.500L73.700 40 86.900 33.500" fill="none" stroke="#cfcfcf" stroke-width="2" stroke-linejoin="round" stroke-linecap="round"/><path d="M62 25.500c-2 .8-2 1.700 0 2.500l9.500 4.500c1.500.7 3 .7 4.500 0l9.500-4.500c2-.8 2-1.700 0-2.500l-9.500-4.500c-1.500-.7-3-.7-4.500 0z" fill="none" stroke="#cfcfcf" stroke-width="2" stroke-linejoin="round"/><clipPath id="tcl"><rect x="180" y="12" width="260" height="27.500"/></clipPath><g clip-path="url(#tcl)" fill="none" stroke="#787878" stroke-width="2"><path d="M205 26.500l12-6.500 12 6.500-12 6.500zM205 33l12 6.500 12-6.500M219 41a4 4 0 1 0 8 0a4 4 0 1 0-8 0"/><rect x="264" y="21" width="26" height="26" rx="3.500"/><rect x="269" y="27" width="8" height="6" fill="#787878"/><rect x="269" y="37.500" width="16" height="5" fill="#787878"/><path d="M324 32.500l24-6.500 1 4-24 6.500zM325 37h24v12h-24z"/><path d="M326 38l4 8M334 38l4 8M342 38l4 8" /><rect x="384" y="21.500" width="26" height="28" rx="3.500"/><path d="M389 21.500v28M405 21.500v28"/><path d="M391 40l5-5 4 3 5-6v8z" fill="#787878"/></g></svg>
<div class="t" style="top:162.20px;font-size:18.6px;color:#d8d8d8;left:1980.5px;font-weight:350;">レイヤー</div>
<div class="a" style="left:1878px;top:190px;width:77.5px;height:47px;background:#686868;border:1.500px solid #868686;border-radius:5px;box-sizing:border-box;"></div>
<div class="a" style="left:1962px;top:190px;width:167.5px;height:47px;background:#686868;border:1.500px solid #868686;border-radius:5px;box-sizing:border-box;"></div>
<div class="t" style="top:204.00px;font-size:20px;color:#d8d8d8;left:2031px;transform:translateX(-50%);font-weight:350;">通常</div>
<svg style="left:1876px;top:185px;" width="512" height="60" viewBox="0 0 512 60"><rect x="11.500" y="17" width="29" height="24" rx="4.500" fill="none" stroke="#c6c6c6" stroke-width="2.200"/><path d="M54.5 23.0 L63 15.0 L71.5 23.0" fill="none" stroke="#c6c6c6" stroke-width="2" stroke-linecap="round" stroke-linejoin="round"/><path d="M54.5 34.0 L63 42.0 L71.5 34.0" fill="none" stroke="#c6c6c6" stroke-width="2" stroke-linecap="round" stroke-linejoin="round"/><path d="M228.5 23.0 L237 15.0 L245.5 23.0" fill="none" stroke="#c6c6c6" stroke-width="2" stroke-linecap="round" stroke-linejoin="round"/><path d="M228.5 34.0 L237 42.0 L245.5 34.0" fill="none" stroke="#c6c6c6" stroke-width="2" stroke-linecap="round" stroke-linejoin="round"/><path d="M486.5 20.25 L494 12.75 L501.5 20.25" fill="none" stroke="#c6c6c6" stroke-width="2" stroke-linecap="round" stroke-linejoin="round"/><path d="M486.5 29.75 L494 37.25 L501.5 29.75" fill="none" stroke="#c6c6c6" stroke-width="2" stroke-linecap="round" stroke-linejoin="round"/></svg>
<div class="a" style="left:2142.5px;top:200px;width:160px;height:17.5px;background:#fff;background-image:conic-gradient(#c2c2c2 25%,#fff 0 50%,#c2c2c2 0 75%,#fff 0);background-size:20px 18px;background-position:10px 0;"></div>
<div class="a" style="left:2142.5px;top:200px;width:160px;height:17.5px;background:linear-gradient(90deg,rgba(200,200,200,0) 0%,rgba(200,200,200,.55) 50%,rgba(200,200,200,1) 100%);"></div>
<div class="a" style="left:2302px;top:190px;width:8px;height:39px;background:#6e6e6e;border:1px solid #8e8e8e;box-sizing:border-box;border-radius:1px;"></div>
<div class="t" style="top:198.50px;font-size:22px;color:#e0e0e0;left:2322px;letter-spacing:-0.3px;">100</div>
<div class="a" style="left:2166px;top:240.5px;width:71px;height:46.5px;background:#555;border-radius:5px;"></div>
<div class="a" style="left:2240px;top:240.5px;width:71px;height:46.5px;background:#555;border-radius:5px;"></div>
<div class="a" style="left:2314px;top:240.5px;width:71px;height:46.5px;background:#636363;border:1.500px solid #848484;border-radius:5px;box-sizing:border-box;"></div>
<svg style="left:1876px;top:240px;" width="512" height="110" viewBox="0 0 512 110"><g transform="translate(22,8)"><rect x="2" y="11.500" width="19" height="19" rx="4" fill="#8a8a8a"/><rect x="5" y="8.500" width="19" height="19" rx="4" fill="#b9b9b9"/><rect x="9.500" y="2.500" width="20.500" height="20.500" rx="4" fill="#b9b9b9" fill-opacity=".0" stroke="#cfcfcf" stroke-width="1.800" stroke-dasharray="4.500 2.500"/></g><g transform="translate(78,8)"><path d="M12.500 16.500h7l3 15.500h-13z" class="f"/><rect x="12.500" y="8.500" width="7" height="6.500" class="ic" stroke-width="1.600"/><path d="M12.500 8.500l3.500-3 3.500 3" class="ic" stroke-width="1.600"/><path d="M11 10.500L2 6.500M11 13L2 16M21 10.500l9-4M21 13l9 3" class="ic" stroke-width="1.700"/></g><g transform="translate(134,8)"><path d="M3.500 3.500h14.500v6c0 6-2.500 11-5 16l-4.500 1.500c-3-6-5-12-5-17.500z" class="f"/><path d="M8 9.500c.5-1.500 2.500-1.500 3 0 .5-1.500 2.500-1.500 3 0 0 2.500-3 5.500-3 5.500s-3-3-3-5.500z" fill="#4d4d4d"/><path d="M9.500 27.500c-2 2.500 1 4 3.500 3.500 5-1 7.500-7 10.500-7.500 2.500-.5 1 3 3 4s4-1.500 6 1" class="ic" stroke-width="1.700"/></g><g transform="translate(190,8)"><rect x="6" y="14.500" width="20" height="16" rx="2.500" class="f"/><path d="M10.500 15v-4.500a5.500 5.500 0 0 1 11 0V15" class="ic" stroke-width="2.500"/></g><g transform="translate(246,8)"><rect x="10" y="2" width="8" height="8" fill="#8e8e8e"/><rect x="26" y="2" width="8" height="8" fill="#8e8e8e"/><rect x="18" y="10" width="8" height="8" fill="#8e8e8e"/><rect x="10" y="18" width="8" height="8" fill="#8e8e8e"/><rect x="26" y="18" width="8" height="8" fill="#8e8e8e"/><rect x="4.500" y="18.500" width="15" height="12.500" rx="2" class="f" stroke="#4d4d4d" stroke-width="1.500"/><path d="M8 18.500v-3a4 4 0 0 1 8 0v3" fill="none" stroke="#b9b9b9" stroke-width="2.200"/></g><g transform="translate(298,8)"><rect x="1" y="3" width="27" height="27" rx="5" fill="#787878"/><circle cx="16" cy="15" r="8" fill="#555"/><path d="M19 21l11 11M30 21L19 32" stroke="#787878" stroke-width="2.800" fill="none"/></g><path d="M337.0 18.75 L345 11.25 L353.0 18.75" fill="none" stroke="#7a7a7a" stroke-width="2" stroke-linecap="round" stroke-linejoin="round"/><path d="M337.0 29.25 L345 36.75 L353.0 29.25" fill="none" stroke="#7a7a7a" stroke-width="2" stroke-linecap="round" stroke-linejoin="round"/><g transform="translate(372,8)"><path d="M1 3h28L1 31zM7 9v10l10-10z" fill="#787878" fill-rule="evenodd"/><path d="M19 21l11 11M30 21L19 32" stroke="#787878" stroke-width="2.800" fill="none"/></g><path d="M411.0 18.75 L419 11.25 L427.0 18.75" fill="none" stroke="#7a7a7a" stroke-width="2" stroke-linecap="round" stroke-linejoin="round"/><path d="M411.0 29.25 L419 36.75 L427.0 29.25" fill="none" stroke="#7a7a7a" stroke-width="2" stroke-linecap="round" stroke-linejoin="round"/><g transform="translate(446,8)"><rect x="9.500" y="11.500" width="18" height="18" fill="#fff" stroke="#9a9a9a" stroke-width="1.600"/><rect x="1" y="2.500" width="18.500" height="18.500" fill="#3f8ff2" stroke="#9a9a9a" stroke-width="1.600"/></g><path d="M486.5 18.75 L494 11.25 L501.5 18.75" fill="none" stroke="#c6c6c6" stroke-width="2" stroke-linecap="round" stroke-linejoin="round"/><path d="M486.5 29.25 L494 36.75 L501.5 29.25" fill="none" stroke="#c6c6c6" stroke-width="2" stroke-linecap="round" stroke-linejoin="round"/><g transform="translate(10.700000000000045,60.7)"><rect x="3.500" y="4.500" width="27" height="25" rx="3" class="ic" stroke-width="2"/><path d="M3.500 17h27M8 10.500h4M8 15h0M8 23h4" class="ic" stroke-width="1.800"/></g><g transform="translate(74,60.7)"><path d="M3 6a3 3 0 0 1 3-3h19a3 3 0 0 1 3 3v14M3 6v14l9 9h8M3 20h6a3 3 0 0 1 3 3v6" class="ic" stroke-width="2"/><circle cx="27.5" cy="28.5" r="6.300" fill="#b9b9b9" stroke="#4d4d4d" stroke-width="1.400"/><path d="M23.9 28.5h7.200M27.5 24.9v7.200" stroke="#4d4d4d" stroke-width="1.600"/></g><g transform="translate(130,60.7)"><path d="M3 6a3 3 0 0 1 3-3h19a3 3 0 0 1 3 3v14M3 6v14l9 9h8M3 20h6a3 3 0 0 1 3 3v6" class="ic" stroke-width="2"/><path d="M16 8l6.500 3v7l-6.500 3.500-6.500-3.500v-7zM9.500 11l6.500 3 6.500-3M16 14v7.500" class="ic" stroke-width="1.500"/><circle cx="27.5" cy="28.5" r="6.300" fill="#b9b9b9" stroke="#4d4d4d" stroke-width="1.400"/><path d="M23.9 28.5h7.200M27.5 24.9v7.200" stroke="#4d4d4d" stroke-width="1.600"/></g><g transform="translate(184,60.7)"><path d="M1.500 6.500a3 3 0 0 1 3-3h9l3.500 4.500h11a3 3 0 0 1 3 3v5H1.500z" class="f"/><path d="M1.500 11.500h29.500v13a3 3 0 0 1-3 3H4.500a3 3 0 0 1-3-3z" class="f"/><path d="M2 10.500h27" stroke="#4d4d4d" stroke-width="1.200"/><circle cx="28.5" cy="29.5" r="6.300" fill="#b9b9b9" stroke="#4d4d4d" stroke-width="1.400"/><path d="M24.9 29.5h7.200M28.5 25.9v7.200" stroke="#4d4d4d" stroke-width="1.600"/></g><g transform="translate(240.69999999999982,60.7)"><rect x="12" y="2" width="20" height="18" rx="4" class="ic" stroke-width="2"/><rect x="18" y="6" width="9" height="8" fill="#8a8a8a"/><rect x="2" y="13.500" width="20" height="18" rx="4" fill="#4d4d4d" stroke="#b9b9b9" stroke-width="2"/><path d="M24.500 20v3.500a3 3 0 0 1-3 3H12" class="ic" stroke-width="2.200"/><path d="M14 21.500v10l-7-5z" class="f"/></g><g transform="translate(297,60.7)"><rect x="12" y="2" width="20" height="18" rx="4" class="ic" stroke-width="2"/><rect x="2" y="13.500" width="20" height="18" rx="4" fill="#4d4d4d" stroke="#b9b9b9" stroke-width="2"/><path d="M22 11.500L10 23.500" class="ic" stroke-width="2.200"/><path d="M7.500 19v8h8z" class="f"/></g><g transform="translate(353,60.7)"><rect x="3" y="3" width="28" height="28" rx="5" class="f"/><circle cx="17" cy="17" r="7.500" fill="#4d4d4d"/></g><g transform="translate(409.6999999999998,60.7)"><rect x="1" y="3" width="22" height="26" rx="4" fill="none" stroke="#6c6c6c" stroke-width="1.800"/><rect x="12" y="12" width="21.500" height="18" rx="4" fill="#727272"/><rect x="15" y="9" width="7" height="5" rx="1.500" fill="#727272"/><circle cx="25" cy="21" r="4.300" fill="#4d4d4d"/><path d="M14 17H6" stroke="#727272" stroke-width="2"/><path d="M9 12.500v9l-6-4.500z" fill="#727272"/></g><g transform="translate(465,60.7)"><path d="M5.500 8.500h23M12.500 8v-2.500a2 2 0 0 1 2-2h5a2 2 0 0 1 2 2V8M8 8.500l1.500 19.500a3 3 0 0 0 3 2.500h9a3 3 0 0 0 3-2.500L26 8.500M13.500 13v13M17 13v13M20.500 13v13" class="ic" stroke-width="2"/></g></svg>
<div class="a" style="left:1876px;top:348px;width:512px;height:1316px;background:#3e3e3e;"></div>
<div class="a" style="left:1876px;top:1664px;width:512px;height:4px;background:#2a2a2a;"></div>
<div class="a" style="left:1974px;top:348px;width:398px;height:14px;overflow:hidden;"><div class="t" style="top:-15.75px;font-size:20.5px;color:#d8d8d8;left:108.69999999999982px;">集中線とか</div></div>
<div class="a" style="left:1974px;top:1419px;width:398px;height:82px;background:#606c87;"></div>
<div class="t" style="top:371.75px;font-size:20.5px;color:#d8d8d8;left:2082.7px;">100 %&nbsp; 通常</div>
<div class="t" style="top:399.25px;font-size:20.5px;color:#d8d8d8;left:2082.7px;">キャラ</div>
<div class="t" style="top:437.75px;font-size:20.5px;color:#d8d8d8;left:2114px;">100 %&nbsp; 通常</div>
<div class="t" style="top:465.25px;font-size:20.5px;color:#d8d8d8;left:2114px;">顔</div>
<div class="t" style="top:503.75px;font-size:20.5px;color:#d8d8d8;left:2146.4px;">100 %&nbsp; 通常</div>
<div class="t" style="top:531.25px;font-size:20.5px;color:#d8d8d8;left:2146.4px;">前髪</div>
<div class="t" style="top:569.75px;font-size:20.5px;color:#d8d8d8;left:2146.4px;">100 %&nbsp; 通常</div>
<div class="t" style="top:597.25px;font-size:20.5px;color:#d8d8d8;left:2146.4px;">横髪</div>
<div class="t" style="top:635.75px;font-size:20.5px;color:#d8d8d8;left:2146.4px;">100 %&nbsp; 通常</div>
<div class="t" style="top:663.25px;font-size:20.5px;color:#d8d8d8;left:2146.4px;">メガネ</div>
<div class="t" style="top:701.75px;font-size:20.5px;color:#d8d8d8;left:2146.4px;">100 %&nbsp; 通常</div>
<div class="t" style="top:729.25px;font-size:20.5px;color:#d8d8d8;left:2146.4px;">目</div>
<div class="a" style="left:2232px;top:761px;width:95px;height:34px;overflow:hidden;-webkit-mask-image:linear-gradient(90deg,#000 86%,transparent 100%);mask-image:linear-gradient(90deg,#000 86%,transparent 100%);"><div class="t" style="top:6.75px;font-size:20.5px;color:#d8d8d8;left:0px;">100 %&nbsp; 通常</div></div>
<div class="t" style="top:794.25px;font-size:20.5px;color:#d8d8d8;left:2232px;">鼻</div>
<div class="t" style="top:833.75px;font-size:20.5px;color:#d8d8d8;left:2146.4px;">100 %&nbsp; 通常</div>
<div class="t" style="top:861.25px;font-size:20.5px;color:#d8d8d8;left:2146.4px;">口</div>
<div class="t" style="top:899.75px;font-size:20.5px;color:#d8d8d8;left:2146.4px;">100 %&nbsp; 通常</div>
<div class="t" style="top:927.25px;font-size:20.5px;color:#d8d8d8;left:2146.4px;">顔輪郭</div>
<div class="t" style="top:965.75px;font-size:20.5px;color:#d8d8d8;left:2146.4px;">100 %&nbsp; 通常</div>
<div class="t" style="top:993.25px;font-size:20.5px;color:#d8d8d8;left:2146.4px;">耳</div>
<div class="t" style="top:1031.75px;font-size:20.5px;color:#d8d8d8;left:2114px;">100 %&nbsp; 通常</div>
<div class="t" style="top:1059.25px;font-size:20.5px;color:#d8d8d8;left:2114px;">胴体</div>
<div class="t" style="top:1097.75px;font-size:20.5px;color:#d8d8d8;left:2114px;">100 %&nbsp; 通常</div>
<div class="t" style="top:1125.25px;font-size:20.5px;color:#d8d8d8;left:2114px;">首</div>
<div class="t" style="top:1163.75px;font-size:20.5px;color:#d8d8d8;left:2114px;">100 %&nbsp; 通常</div>
<div class="t" style="top:1191.25px;font-size:20.5px;color:#d8d8d8;left:2114px;">脚</div>
<div class="t" style="top:1229.75px;font-size:20.5px;color:#d8d8d8;left:2114px;">100 %&nbsp; 通常</div>
<div class="t" style="top:1257.25px;font-size:20.5px;color:#d8d8d8;left:2114px;">服裏</div>
<div class="t" style="top:1295.75px;font-size:20.5px;color:#d8d8d8;left:2114px;">100 %&nbsp; 通常</div>
<div class="t" style="top:1323.25px;font-size:20.5px;color:#d8d8d8;left:2114px;">後ろ髪</div>
<div class="t" style="top:1361.75px;font-size:20.5px;color:#d8d8d8;left:2082.7px;">100 %&nbsp; 通常</div>
<div class="t" style="top:1389.25px;font-size:20.5px;color:#d8d8d8;left:2082.7px;">下書き</div>
<div class="a" style="left:2015px;top:1423px;width:58.5px;height:75px;background:#e6e6e6;border-radius:2px;"></div>
<div class="a" style="left:2017px;top:1425px;width:54.5px;height:71px;background:#2e2e2e;"></div>
<div class="a" style="left:2021px;top:1429px;width:46.5px;height:63px;background:#fff;background-image:conic-gradient(#cecece 25%,#fff 0 50%,#cecece 0 75%,#fff 0);background-size:14px 14px;"></div>
<div class="t" style="top:1431.25px;font-size:20.5px;color:#d8d8d8;left:2086.5px;">100 %&nbsp; 通常</div>
<div class="t" style="top:1469.25px;font-size:20.5px;color:#d8d8d8;left:2086.5px;">7</div>
<div class="a" style="left:2018px;top:1508.5px;width:51.5px;height:67px;background:#2a2a2a;"></div>
<div class="a" style="left:2021px;top:1511.5px;width:45.5px;height:61px;background:#fff;background-image:conic-gradient(#cecece 25%,#fff 0 50%,#cecece 0 75%,#fff 0);background-size:14px 14px;"></div>
<div class="t" style="top:1512.75px;font-size:20.5px;color:#d8d8d8;left:2173.5px;">100 %&nbsp; 通常</div>
<div class="t" style="top:1550.75px;font-size:20.5px;color:#d8d8d8;left:2173.5px;">ラフ</div>
<div class="a" style="left:1986px;top:1590.5px;width:51.5px;height:67px;background:#2a2a2a;"></div>
<div class="a" style="left:1987.5px;top:1592px;width:48.5px;height:64px;background:#fff;"></div>
<div class="a" style="left:2062px;top:1590.5px;width:36px;height:35px;background:#2a2a2a;"></div>
<div class="a" style="left:2064px;top:1592.5px;width:32px;height:31px;background:#fff;"></div>
<div class="t" style="top:1633.25px;font-size:20.5px;color:#d8d8d8;left:2054.5px;">用紙</div>
<svg style="left:0px;top:0px;" width="2388" height="1668" viewBox="0 0 2388 1668"><path d="M1927 348V1664M1973 348V1664" stroke="#1d1d1d" stroke-width="2" fill="none"/><path d="M1878 363H2372" stroke="#1d1d1d" stroke-width="2" fill="none"/><rect x="1891.5" y="386.5" width="19" height="19" rx="4.500" fill="#3a3a3a" stroke="#262626" stroke-width="1.800"/><rect x="1941.5" y="386.5" width="19" height="19" rx="4.500" fill="#3a3a3a" stroke="#262626" stroke-width="1.800"/><path d="M1988.7 396.5l7 7 7-7" fill="none" stroke="#c4c4c4" stroke-width="1.900" stroke-linecap="round" stroke-linejoin="round"/><path d="M2031.0 406V385.5a2.500 2.500 0 0 1 2.500-2.500h7l3 3.500h12a2.500 2.500 0 0 1 2.500 2.500v2" fill="none" stroke="#b9b9b9" stroke-width="2"/><path d="M2036.8 392.5h25.500c1.200 0 1.900 1 1.600 2.100l-3.100 11c-.4 1.400-1.500 2.400-3 2.400H2032.3c-1.300 0-2-1.100-1.700-2.300l3.300-11c.4-1.400 1.400-2.200 2.900-2.200z" fill="#b9b9b9"/><path d="M2346 390h14M2346 396h14M2346 402h14" stroke="#1d1d1d" stroke-width="1.700" fill="none"/><path d="M2002 429H2372" stroke="#1d1d1d" stroke-width="2" fill="none"/><g transform="translate(1886,452)"><path d="M.8 10.500C4.500 3.500 9.500 1 14.500 1s10 2.500 13.700 9.500" fill="none" stroke="#8e8e8e" stroke-width="2.300" stroke-linecap="round"/><ellipse cx="14.500" cy="10.300" rx="5.900" ry="6.300" fill="#8e8e8e"/></g><rect x="1941.5" y="452.5" width="19" height="19" rx="4.500" fill="#3a3a3a" stroke="#262626" stroke-width="1.800"/><path d="M2020.7 462.5l7 7 7-7" fill="none" stroke="#c4c4c4" stroke-width="1.900" stroke-linecap="round" stroke-linejoin="round"/><path d="M2062.2 472V451.5a2.500 2.500 0 0 1 2.500-2.500h7l3 3.500h12a2.500 2.500 0 0 1 2.500 2.500v2" fill="none" stroke="#b9b9b9" stroke-width="2"/><path d="M2068 458.5h25.500c1.200 0 1.900 1 1.600 2.100l-3.100 11c-.4 1.400-1.500 2.400-3 2.400H2063.5c-1.300 0-2-1.100-1.700-2.300l3.300-11c.4-1.400 1.400-2.200 2.900-2.200z" fill="#b9b9b9"/><path d="M2346 456h14M2346 462h14M2346 468h14" stroke="#1d1d1d" stroke-width="1.700" fill="none"/><path d="M2034 495H2372" stroke="#1d1d1d" stroke-width="2" fill="none"/><g transform="translate(1886,518)"><path d="M.8 10.500C4.500 3.500 9.500 1 14.500 1s10 2.500 13.700 9.500" fill="none" stroke="#8e8e8e" stroke-width="2.300" stroke-linecap="round"/><ellipse cx="14.500" cy="10.300" rx="5.900" ry="6.300" fill="#8e8e8e"/></g><rect x="1941.5" y="518.5" width="19" height="19" rx="4.500" fill="#3a3a3a" stroke="#262626" stroke-width="1.800"/><path d="M2061.5 520.5l7.500 7.500-7.500 7.500" fill="none" stroke="#c4c4c4" stroke-width="1.900" stroke-linecap="round" stroke-linejoin="round"/><path d="M2094 518.0a3 3 0 0 1 3-3h7.500l3 3.500H2119a3 3 0 0 1 3 3V537.0a3 3 0 0 1-3 3H2097a3 3 0 0 1-3-3z" fill="#b9b9b9"/><path d="M2095 522.0H2121" stroke="#3e3e3e" stroke-width="1.300"/><path d="M2095.5 521.3V518.5a1.800 1.800 0 0 1 1.800-1.800h6.500l2.500 3H2118.5a2 2 0 0 1 2 1.600z" fill="#3e3e3e"/><path d="M2346 522h14M2346 528h14M2346 534h14" stroke="#1d1d1d" stroke-width="1.700" fill="none"/><path d="M2034 561H2372" stroke="#1d1d1d" stroke-width="2" fill="none"/><g transform="translate(1886,584)"><path d="M.8 10.500C4.500 3.500 9.500 1 14.500 1s10 2.500 13.700 9.500" fill="none" stroke="#8e8e8e" stroke-width="2.300" stroke-linecap="round"/><ellipse cx="14.500" cy="10.300" rx="5.900" ry="6.300" fill="#8e8e8e"/></g><rect x="1941.5" y="584.5" width="19" height="19" rx="4.500" fill="#3a3a3a" stroke="#262626" stroke-width="1.800"/><path d="M2061.5 586.5l7.500 7.500-7.500 7.500" fill="none" stroke="#c4c4c4" stroke-width="1.900" stroke-linecap="round" stroke-linejoin="round"/><path d="M2094 584.0a3 3 0 0 1 3-3h7.500l3 3.500H2119a3 3 0 0 1 3 3V603.0a3 3 0 0 1-3 3H2097a3 3 0 0 1-3-3z" fill="#b9b9b9"/><path d="M2095 588.0H2121" stroke="#3e3e3e" stroke-width="1.300"/><path d="M2095.5 587.3V584.5a1.800 1.800 0 0 1 1.800-1.800h6.500l2.500 3H2118.5a2 2 0 0 1 2 1.600z" fill="#3e3e3e"/><path d="M2346 588h14M2346 594h14M2346 600h14" stroke="#1d1d1d" stroke-width="1.700" fill="none"/><path d="M2034 627H2372" stroke="#1d1d1d" stroke-width="2" fill="none"/><g transform="translate(1886,650)"><path d="M.8 10.500C4.500 3.500 9.500 1 14.500 1s10 2.500 13.700 9.500" fill="none" stroke="#8e8e8e" stroke-width="2.300" stroke-linecap="round"/><ellipse cx="14.500" cy="10.300" rx="5.900" ry="6.300" fill="#8e8e8e"/></g><rect x="1941.5" y="650.5" width="19" height="19" rx="4.500" fill="#3a3a3a" stroke="#262626" stroke-width="1.800"/><path d="M2061.5 652.5l7.500 7.500-7.500 7.500" fill="none" stroke="#c4c4c4" stroke-width="1.900" stroke-linecap="round" stroke-linejoin="round"/><path d="M2094 650.0a3 3 0 0 1 3-3h7.500l3 3.500H2119a3 3 0 0 1 3 3V669.0a3 3 0 0 1-3 3H2097a3 3 0 0 1-3-3z" fill="#b9b9b9"/><path d="M2095 654.0H2121" stroke="#3e3e3e" stroke-width="1.300"/><path d="M2095.5 653.3V650.5a1.800 1.800 0 0 1 1.800-1.800h6.500l2.500 3H2118.5a2 2 0 0 1 2 1.600z" fill="#3e3e3e"/><path d="M2346 654h14M2346 660h14M2346 666h14" stroke="#1d1d1d" stroke-width="1.700" fill="none"/><path d="M2034 693H2372" stroke="#1d1d1d" stroke-width="2" fill="none"/><g transform="translate(1886,716)"><path d="M.8 10.500C4.500 3.500 9.500 1 14.500 1s10 2.500 13.700 9.500" fill="none" stroke="#8e8e8e" stroke-width="2.300" stroke-linecap="round"/><ellipse cx="14.500" cy="10.300" rx="5.900" ry="6.300" fill="#8e8e8e"/></g><rect x="1941.5" y="716.5" width="19" height="19" rx="4.500" fill="#3a3a3a" stroke="#262626" stroke-width="1.800"/><path d="M2061.5 718.5l7.500 7.500-7.500 7.500" fill="none" stroke="#c4c4c4" stroke-width="1.900" stroke-linecap="round" stroke-linejoin="round"/><path d="M2094 716.0a3 3 0 0 1 3-3h7.500l3 3.500H2119a3 3 0 0 1 3 3V735.0a3 3 0 0 1-3 3H2097a3 3 0 0 1-3-3z" fill="#b9b9b9"/><path d="M2095 720.0H2121" stroke="#3e3e3e" stroke-width="1.300"/><path d="M2095.5 719.3V716.5a1.800 1.800 0 0 1 1.800-1.800h6.500l2.500 3H2118.5a2 2 0 0 1 2 1.600z" fill="#3e3e3e"/><path d="M2346 720h14M2346 726h14M2346 732h14" stroke="#1d1d1d" stroke-width="1.700" fill="none"/><path d="M2034 759H2372" stroke="#1d1d1d" stroke-width="2" fill="none"/><rect x="1891.5" y="782.5" width="19" height="19" rx="4.500" fill="#3a3a3a" stroke="#262626" stroke-width="1.800"/><rect x="1941.5" y="782.5" width="19" height="19" rx="4.500" fill="#3a3a3a" stroke="#262626" stroke-width="1.800"/><path d="M2061.5 784.5l7.500 7.500-7.500 7.500" fill="none" stroke="#c4c4c4" stroke-width="1.900" stroke-linecap="round" stroke-linejoin="round"/><path d="M2094 782.0a3 3 0 0 1 3-3h7.500l3 3.500H2119a3 3 0 0 1 3 3V801.0a3 3 0 0 1-3 3H2097a3 3 0 0 1-3-3z" fill="#b9b9b9"/><path d="M2095 786.0H2121" stroke="#3e3e3e" stroke-width="1.300"/><path d="M2095.5 785.3V782.5a1.800 1.800 0 0 1 1.800-1.800h6.500l2.500 3H2118.5a2 2 0 0 1 2 1.600z" fill="#3e3e3e"/><path d="M2346 786h14M2346 792h14M2346 798h14" stroke="#1d1d1d" stroke-width="1.700" fill="none"/><path d="M2145 793l7 6.500L2166 784" fill="none" stroke="#b9b9b9" stroke-width="2.600"/><path d="M2182 779.5h28L2182 806.5zM2187 784.5v10.500l11-10.500z" fill="#b9b9b9" fill-rule="evenodd"/><g transform="translate(2198.5,794)"><path d="M8 0l7.500 3.300v8.400L8 15.500.5 11.700V3.300z" fill="#3e3e3e" stroke="#b9b9b9" stroke-width="1.400" stroke-linejoin="round"/><path d="M.5 3.300L8 7l7.500-3.700M8 7v8.500" fill="none" stroke="#b9b9b9" stroke-width="1.400"/></g><path d="M2034 825H2372" stroke="#1d1d1d" stroke-width="2" fill="none"/><g transform="translate(1886,848)"><path d="M.8 10.500C4.500 3.500 9.500 1 14.500 1s10 2.500 13.700 9.500" fill="none" stroke="#8e8e8e" stroke-width="2.300" stroke-linecap="round"/><ellipse cx="14.500" cy="10.300" rx="5.900" ry="6.300" fill="#8e8e8e"/></g><rect x="1941.5" y="848.5" width="19" height="19" rx="4.500" fill="#3a3a3a" stroke="#262626" stroke-width="1.800"/><path d="M2061.5 850.5l7.500 7.500-7.500 7.500" fill="none" stroke="#c4c4c4" stroke-width="1.900" stroke-linecap="round" stroke-linejoin="round"/><path d="M2094 848.0a3 3 0 0 1 3-3h7.500l3 3.500H2119a3 3 0 0 1 3 3V867.0a3 3 0 0 1-3 3H2097a3 3 0 0 1-3-3z" fill="#b9b9b9"/><path d="M2095 852.0H2121" stroke="#3e3e3e" stroke-width="1.300"/><path d="M2095.5 851.3V848.5a1.800 1.800 0 0 1 1.800-1.800h6.500l2.500 3H2118.5a2 2 0 0 1 2 1.600z" fill="#3e3e3e"/><path d="M2346 852h14M2346 858h14M2346 864h14" stroke="#1d1d1d" stroke-width="1.700" fill="none"/><path d="M2034 891H2372" stroke="#1d1d1d" stroke-width="2" fill="none"/><g transform="translate(1886,914)"><path d="M.8 10.500C4.500 3.500 9.500 1 14.500 1s10 2.500 13.700 9.500" fill="none" stroke="#8e8e8e" stroke-width="2.300" stroke-linecap="round"/><ellipse cx="14.500" cy="10.300" rx="5.900" ry="6.300" fill="#8e8e8e"/></g><rect x="1941.5" y="914.5" width="19" height="19" rx="4.500" fill="#3a3a3a" stroke="#262626" stroke-width="1.800"/><path d="M2061.5 916.5l7.500 7.500-7.500 7.500" fill="none" stroke="#c4c4c4" stroke-width="1.900" stroke-linecap="round" stroke-linejoin="round"/><path d="M2094 914.0a3 3 0 0 1 3-3h7.500l3 3.500H2119a3 3 0 0 1 3 3V933.0a3 3 0 0 1-3 3H2097a3 3 0 0 1-3-3z" fill="#b9b9b9"/><path d="M2095 918.0H2121" stroke="#3e3e3e" stroke-width="1.300"/><path d="M2095.5 917.3V914.5a1.800 1.800 0 0 1 1.800-1.800h6.500l2.500 3H2118.5a2 2 0 0 1 2 1.600z" fill="#3e3e3e"/><path d="M2346 918h14M2346 924h14M2346 930h14" stroke="#1d1d1d" stroke-width="1.700" fill="none"/><path d="M2034 957H2372" stroke="#1d1d1d" stroke-width="2" fill="none"/><g transform="translate(1886,980)"><path d="M.8 10.500C4.500 3.500 9.500 1 14.500 1s10 2.500 13.700 9.500" fill="none" stroke="#8e8e8e" stroke-width="2.300" stroke-linecap="round"/><ellipse cx="14.500" cy="10.300" rx="5.900" ry="6.300" fill="#8e8e8e"/></g><rect x="1941.5" y="980.5" width="19" height="19" rx="4.500" fill="#3a3a3a" stroke="#262626" stroke-width="1.800"/><path d="M2061.5 982.5l7.500 7.500-7.500 7.500" fill="none" stroke="#c4c4c4" stroke-width="1.900" stroke-linecap="round" stroke-linejoin="round"/><path d="M2094 980.0a3 3 0 0 1 3-3h7.500l3 3.500H2119a3 3 0 0 1 3 3V999.0a3 3 0 0 1-3 3H2097a3 3 0 0 1-3-3z" fill="#b9b9b9"/><path d="M2095 984.0H2121" stroke="#3e3e3e" stroke-width="1.300"/><path d="M2095.5 983.3V980.5a1.800 1.800 0 0 1 1.800-1.800h6.500l2.500 3H2118.5a2 2 0 0 1 2 1.600z" fill="#3e3e3e"/><path d="M2346 984h14M2346 990h14M2346 996h14" stroke="#1d1d1d" stroke-width="1.700" fill="none"/><path d="M2002 1023H2372" stroke="#1d1d1d" stroke-width="2" fill="none"/><g transform="translate(1886,1046)"><path d="M.8 10.500C4.500 3.500 9.500 1 14.500 1s10 2.500 13.700 9.500" fill="none" stroke="#8e8e8e" stroke-width="2.300" stroke-linecap="round"/><ellipse cx="14.500" cy="10.300" rx="5.900" ry="6.300" fill="#8e8e8e"/></g><rect x="1941.5" y="1046.5" width="19" height="19" rx="4.500" fill="#3a3a3a" stroke="#262626" stroke-width="1.800"/><path d="M2029.5 1048.5l7.500 7.500-7.500 7.500" fill="none" stroke="#c4c4c4" stroke-width="1.900" stroke-linecap="round" stroke-linejoin="round"/><path d="M2062.5 1046.0a3 3 0 0 1 3-3h7.500l3 3.500H2087.5a3 3 0 0 1 3 3V1065.0a3 3 0 0 1-3 3H2065.5a3 3 0 0 1-3-3z" fill="#b9b9b9"/><path d="M2063.5 1050.0H2089.5" stroke="#3e3e3e" stroke-width="1.300"/><path d="M2064.0 1049.3V1046.5a1.800 1.800 0 0 1 1.800-1.800h6.500l2.500 3H2087.0a2 2 0 0 1 2 1.600z" fill="#3e3e3e"/><path d="M2346 1050h14M2346 1056h14M2346 1062h14" stroke="#1d1d1d" stroke-width="1.700" fill="none"/><path d="M2002 1089H2372" stroke="#1d1d1d" stroke-width="2" fill="none"/><g transform="translate(1886,1112)"><path d="M.8 10.500C4.500 3.500 9.500 1 14.500 1s10 2.500 13.700 9.500" fill="none" stroke="#8e8e8e" stroke-width="2.300" stroke-linecap="round"/><ellipse cx="14.500" cy="10.300" rx="5.900" ry="6.300" fill="#8e8e8e"/></g><rect x="1941.5" y="1112.5" width="19" height="19" rx="4.500" fill="#3a3a3a" stroke="#262626" stroke-width="1.800"/><path d="M2029.5 1114.5l7.500 7.500-7.500 7.500" fill="none" stroke="#c4c4c4" stroke-width="1.900" stroke-linecap="round" stroke-linejoin="round"/><path d="M2062.5 1112.0a3 3 0 0 1 3-3h7.500l3 3.500H2087.5a3 3 0 0 1 3 3V1131.0a3 3 0 0 1-3 3H2065.5a3 3 0 0 1-3-3z" fill="#b9b9b9"/><path d="M2063.5 1116.0H2089.5" stroke="#3e3e3e" stroke-width="1.300"/><path d="M2064.0 1115.3V1112.5a1.800 1.800 0 0 1 1.800-1.800h6.500l2.500 3H2087.0a2 2 0 0 1 2 1.600z" fill="#3e3e3e"/><path d="M2346 1116h14M2346 1122h14M2346 1128h14" stroke="#1d1d1d" stroke-width="1.700" fill="none"/><path d="M2002 1155H2372" stroke="#1d1d1d" stroke-width="2" fill="none"/><g transform="translate(1886,1178)"><path d="M.8 10.500C4.500 3.500 9.500 1 14.500 1s10 2.500 13.700 9.500" fill="none" stroke="#8e8e8e" stroke-width="2.300" stroke-linecap="round"/><ellipse cx="14.500" cy="10.300" rx="5.900" ry="6.300" fill="#8e8e8e"/></g><rect x="1941.5" y="1178.5" width="19" height="19" rx="4.500" fill="#3a3a3a" stroke="#262626" stroke-width="1.800"/><path d="M2029.5 1180.5l7.500 7.500-7.500 7.500" fill="none" stroke="#c4c4c4" stroke-width="1.900" stroke-linecap="round" stroke-linejoin="round"/><path d="M2062.5 1178.0a3 3 0 0 1 3-3h7.500l3 3.500H2087.5a3 3 0 0 1 3 3V1197.0a3 3 0 0 1-3 3H2065.5a3 3 0 0 1-3-3z" fill="#b9b9b9"/><path d="M2063.5 1182.0H2089.5" stroke="#3e3e3e" stroke-width="1.300"/><path d="M2064.0 1181.3V1178.5a1.800 1.800 0 0 1 1.800-1.800h6.500l2.500 3H2087.0a2 2 0 0 1 2 1.600z" fill="#3e3e3e"/><path d="M2346 1182h14M2346 1188h14M2346 1194h14" stroke="#1d1d1d" stroke-width="1.700" fill="none"/><path d="M2002 1221H2372" stroke="#1d1d1d" stroke-width="2" fill="none"/><g transform="translate(1886,1244)"><path d="M.8 10.500C4.500 3.500 9.500 1 14.500 1s10 2.500 13.700 9.500" fill="none" stroke="#8e8e8e" stroke-width="2.300" stroke-linecap="round"/><ellipse cx="14.500" cy="10.300" rx="5.900" ry="6.300" fill="#8e8e8e"/></g><rect x="1941.5" y="1244.5" width="19" height="19" rx="4.500" fill="#3a3a3a" stroke="#262626" stroke-width="1.800"/><path d="M2029.5 1246.5l7.500 7.500-7.500 7.500" fill="none" stroke="#c4c4c4" stroke-width="1.900" stroke-linecap="round" stroke-linejoin="round"/><path d="M2062.5 1244.0a3 3 0 0 1 3-3h7.500l3 3.500H2087.5a3 3 0 0 1 3 3V1263.0a3 3 0 0 1-3 3H2065.5a3 3 0 0 1-3-3z" fill="#b9b9b9"/><path d="M2063.5 1248.0H2089.5" stroke="#3e3e3e" stroke-width="1.300"/><path d="M2064.0 1247.3V1244.5a1.800 1.800 0 0 1 1.800-1.800h6.500l2.500 3H2087.0a2 2 0 0 1 2 1.600z" fill="#3e3e3e"/><path d="M2346 1248h14M2346 1254h14M2346 1260h14" stroke="#1d1d1d" stroke-width="1.700" fill="none"/><path d="M2002 1287H2372" stroke="#1d1d1d" stroke-width="2" fill="none"/><g transform="translate(1886,1310)"><path d="M.8 10.500C4.500 3.500 9.500 1 14.500 1s10 2.500 13.700 9.500" fill="none" stroke="#8e8e8e" stroke-width="2.300" stroke-linecap="round"/><ellipse cx="14.500" cy="10.300" rx="5.900" ry="6.300" fill="#8e8e8e"/></g><rect x="1941.5" y="1310.5" width="19" height="19" rx="4.500" fill="#3a3a3a" stroke="#262626" stroke-width="1.800"/><path d="M2029.5 1312.5l7.500 7.500-7.500 7.500" fill="none" stroke="#c4c4c4" stroke-width="1.900" stroke-linecap="round" stroke-linejoin="round"/><path d="M2062.5 1310.0a3 3 0 0 1 3-3h7.500l3 3.500H2087.5a3 3 0 0 1 3 3V1329.0a3 3 0 0 1-3 3H2065.5a3 3 0 0 1-3-3z" fill="#b9b9b9"/><path d="M2063.5 1314.0H2089.5" stroke="#3e3e3e" stroke-width="1.300"/><path d="M2064.0 1313.3V1310.5a1.800 1.800 0 0 1 1.800-1.800h6.500l2.500 3H2087.0a2 2 0 0 1 2 1.600z" fill="#3e3e3e"/><path d="M2346 1314h14M2346 1320h14M2346 1326h14" stroke="#1d1d1d" stroke-width="1.700" fill="none"/><path d="M1878 1353H2372" stroke="#1d1d1d" stroke-width="2" fill="none"/><g transform="translate(1886,1376)"><path d="M.8 10.500C4.500 3.500 9.500 1 14.500 1s10 2.500 13.700 9.500" fill="none" stroke="#c6c6c6" stroke-width="2.300" stroke-linecap="round"/><ellipse cx="14.500" cy="10.300" rx="5.900" ry="6.300" fill="#c6c6c6"/></g><rect x="1941.5" y="1376.5" width="19" height="19" rx="4.500" fill="#3a3a3a" stroke="#262626" stroke-width="1.800"/><path d="M1988.7 1386.5l7 7 7-7" fill="none" stroke="#c4c4c4" stroke-width="1.900" stroke-linecap="round" stroke-linejoin="round"/><path d="M2031.0 1396V1375.5a2.500 2.500 0 0 1 2.500-2.500h7l3 3.500h12a2.500 2.500 0 0 1 2.500 2.500v2" fill="none" stroke="#b9b9b9" stroke-width="2"/><path d="M2036.8 1382.5h25.500c1.200 0 1.900 1 1.600 2.100l-3.100 11c-.4 1.400-1.500 2.400-3 2.400H2032.3c-1.300 0-2-1.100-1.700-2.300l3.300-11c.4-1.400 1.400-2.200 2.900-2.200z" fill="#b9b9b9"/><path d="M2346 1380h14M2346 1386h14M2346 1392h14" stroke="#1d1d1d" stroke-width="1.700" fill="none"/><path d="M2002 1419H2372" stroke="#1d1d1d" stroke-width="2" fill="none"/><g transform="translate(1886,1448)"><path d="M.8 10.500C4.500 3.500 9.500 1 14.500 1s10 2.500 13.700 9.500" fill="none" stroke="#c6c6c6" stroke-width="2.300" stroke-linecap="round"/><ellipse cx="14.500" cy="10.300" rx="5.900" ry="6.300" fill="#c6c6c6"/></g><g transform="translate(1929.5,1440)"><path d="M8.500 21.500L26.500 3.500c1.500-1.500 5 2 3.500 3.500L12 25z" fill="#c6c6c6"/><path d="M7 23.500l3.500 3.500-6 2z" fill="#c6c6c6"/><path d="M2 33h28" stroke="#c6c6c6" stroke-width="1.600"/></g><path d="M2346 1453h14M2346 1459h14M2346 1465h14" stroke="#15181f" stroke-width="1.700" fill="none"/><path d="M2002 1500.500H2372" stroke="#1d1d1d" stroke-width="2" fill="none"/><g transform="translate(1886,1531)"><path d="M.8 10.500C4.500 3.500 9.500 1 14.500 1s10 2.500 13.700 9.500" fill="none" stroke="#c6c6c6" stroke-width="2.300" stroke-linecap="round"/><ellipse cx="14.500" cy="10.300" rx="5.900" ry="6.300" fill="#c6c6c6"/></g><rect x="1941.5" y="1531.5" width="19" height="19" rx="4.500" fill="#3a3a3a" stroke="#262626" stroke-width="1.800"/><path d="M2346 1535h14M2346 1541h14M2346 1547h14" stroke="#1d1d1d" stroke-width="1.700" fill="none"/><path d="M2086 1542l7 6.500L2107 1533" fill="none" stroke="#b9b9b9" stroke-width="2.600"/><path d="M2122 1528.5h28L2122 1555.5zM2127 1533.5v10.500l11-10.500z" fill="#b9b9b9" fill-rule="evenodd"/><g transform="translate(2138.5,1543)"><path d="M8 0l7.500 3.300v8.400L8 15.500.5 11.700V3.300z" fill="#3e3e3e" stroke="#b9b9b9" stroke-width="1.400" stroke-linejoin="round"/><path d="M.5 3.300L8 7l7.500-3.700M8 7v8.500" fill="none" stroke="#b9b9b9" stroke-width="1.400"/></g><path d="M1878 1582H2372" stroke="#1d1d1d" stroke-width="2" fill="none"/><rect x="1891.5" y="1613.5" width="19" height="19" rx="4.500" fill="#3a3a3a" stroke="#262626" stroke-width="1.800"/><rect x="1941.5" y="1613.5" width="19" height="19" rx="4.500" fill="#3a3a3a" stroke="#262626" stroke-width="1.800"/><path d="M2346 1617h14M2346 1623h14M2346 1629h14" stroke="#1d1d1d" stroke-width="1.700" fill="none"/><path d="M2070 1597.500a2.500 2.500 0 0 1 2.500-2.500h13a2.500 2.500 0 0 1 2.500 2.500v21a2.500 2.500 0 0 1-2.500 2.500h-8.500l-7-6.500zM2070 1614.500h5a2 2 0 0 1 2 2v4.500" fill="none" stroke="#3a3a3a" stroke-width="2.200" stroke-linejoin="round"/></svg>
<svg style="left:2021px;top:1429px;" width="46.5" height="63" viewBox="0 0 46.5 63"><g fill="none" stroke="#222" stroke-width=".7"><ellipse cx="23" cy="17" rx="5.500" ry="6"/><path d="M19 27l-6 8M27 27l6 8M20 27c-1 8-1 14 0 19M26 27c1 8 1 14 0 19M21 47v9M25 47v9M20 56c0 3 2 3 2 0M24 56c0 3 2 3 2 0" stroke-dasharray="2 1.500"/></g></svg>
<svg style="left:2021px;top:1511.5px;" width="45.5" height="61" viewBox="0 0 45.5 61"><g fill="none" stroke="#2a2380" stroke-width=".9"><ellipse cx="22.500" cy="15" rx="6.500" ry="7"/><path d="M22 8l8-5 1 9M17 8c-1-3 0-5 2-6M12 32l8-8h6l8 8M17 30c-2 7-3 11-3 14h17c0-3-1-7-3-14M20 44v11M25 44v11M19 55c0 4 3 4 3 0M24 55c0 4 3 4 3 0M22 22c1 5 1 9 2 13" stroke-dasharray="1.500 .8"/></g></svg>
<div class="a" style="left:2372px;top:348px;width:16px;height:1316px;background:#414141;"></div>
<div class="a" style="left:2374px;top:404px;width:11.5px;height:1256px;background:#5c5c5c;border-radius:6px;"></div>
</body></html>
